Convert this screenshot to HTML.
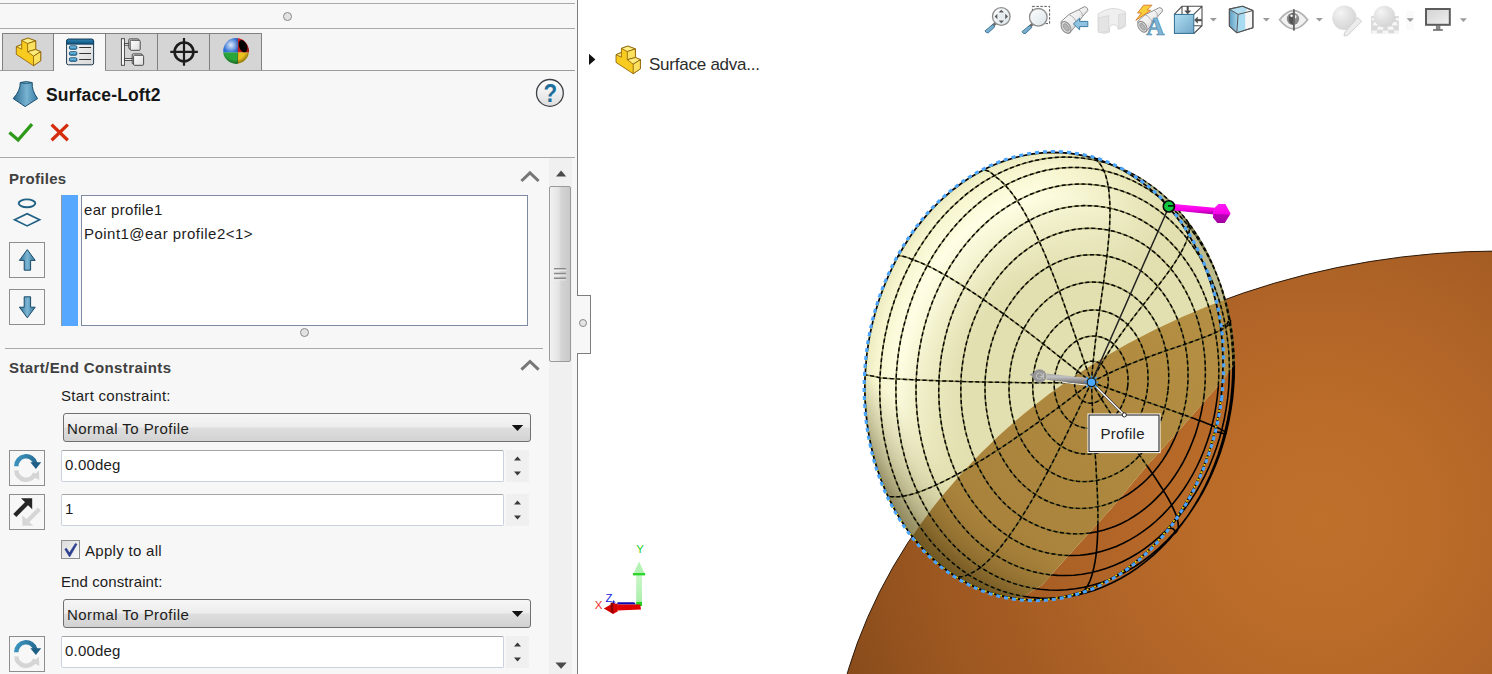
<!DOCTYPE html>
<html><head><meta charset="utf-8"><title>Surface-Loft2</title>
<style>
html,body{margin:0;padding:0}
body{width:1492px;height:674px;overflow:hidden;background:#fff;position:relative;font-family:"Liberation Sans",sans-serif;color:#1e1e1e}
.abs{position:absolute}
.hl{position:absolute;height:1px;background:#a9a9a9}
.t{position:absolute;white-space:nowrap;line-height:20px;height:20px;font-size:15px;color:#1c1c1c}
.b{font-weight:bold}
.tab{position:absolute;top:33px;width:51px;height:36px;background:#d5d5d5;border-left:1px solid #808080;border-top:1px solid #808080}
.ibox{position:absolute;left:9px;width:34px;height:34px;border:1px solid #8e8e8e;background:#f7f7f7}
.fld{position:absolute;left:61px;width:441px;height:30px;background:#fff;border:1px solid #c9d1de;border-top-color:#a5a5a5;border-radius:2px}
.spin{position:absolute;left:506px;width:23px;height:32px;background:#f0f0f0}
.dd{position:absolute;left:63px;width:466px;height:27px;border:1px solid #707070;border-radius:3px;background:linear-gradient(#f6f6f6 0%,#ededed 48%,#dedede 52%,#d2d2d2 100%)}
svg{position:absolute;overflow:visible}
</style></head><body>
<svg id="model" width="914" height="674" viewBox="578 0 914 674" style="position:absolute;left:578px;top:0">
<defs>
<radialGradient id="sg" gradientUnits="userSpaceOnUse" cx="1320" cy="520" r="520"><stop offset="0" stop-color="#bf702b"/><stop offset="0.21" stop-color="#bb6c29"/><stop offset="0.43" stop-color="#b06427"/><stop offset="0.615" stop-color="#a55c23"/><stop offset="0.77" stop-color="#9b5620"/><stop offset="0.9" stop-color="#8e4f1d"/><stop offset="1" stop-color="#854819"/></radialGradient>
<radialGradient id="eg" gradientUnits="userSpaceOnUse" cx="0" cy="0" r="1" gradientTransform="translate(1043.9 376.1) rotate(6.8) scale(178.4 224.3)"><stop offset="0" stop-color="#fffee2" stop-opacity="0"/><stop offset="0.42" stop-color="#fffee2" stop-opacity="0"/><stop offset="0.8" stop-color="#fffee4" stop-opacity="1"/><stop offset="0.94" stop-color="#fffedc" stop-opacity="0.7"/><stop offset="1" stop-color="#fffedc" stop-opacity="0.35"/></radialGradient>
<linearGradient id="hlm" gradientUnits="userSpaceOnUse" x1="600.0" y1="708.2" x2="695.8" y2="788.6"><stop offset="0" stop-color="#fff"/><stop offset="0.5" stop-color="#888"/><stop offset="1" stop-color="#000"/></linearGradient>
<mask id="hlmask" maskUnits="userSpaceOnUse" x="800" y="100" width="500" height="560"><rect x="800" y="100" width="500" height="560" fill="url(#hlm)"/></mask>
<linearGradient id="tg" gradientUnits="userSpaceOnUse" x1="1200" y1="330" x2="930" y2="560"><stop offset="0" stop-color="#b48e42"/><stop offset="1" stop-color="#a6803a"/></linearGradient>
<radialGradient id="rs" gradientUnits="userSpaceOnUse" cx="0" cy="0" r="1" gradientTransform="translate(1043.9 376.1) rotate(6.8) scale(178.4 224.3)"><stop offset="0.7" stop-color="#3c2d0a" stop-opacity="0"/><stop offset="0.9" stop-color="#3c2d0a" stop-opacity="0.3"/><stop offset="1" stop-color="#3c2d0a" stop-opacity="0.5"/></radialGradient>
<linearGradient id="rsm" gradientUnits="userSpaceOnUse" x1="920" y1="524" x2="969.5" y2="474.5"><stop offset="0" stop-color="#fff"/><stop offset="1" stop-color="#000"/></linearGradient>
<mask id="rsmask" maskUnits="userSpaceOnUse" x="800" y="100" width="500" height="560"><rect x="800" y="100" width="500" height="560" fill="url(#rsm)"/></mask>
<clipPath id="earclip"><path d="M1176.5 392.3 1175.0 401.9 1172.9 411.4 1170.1 420.7 1166.6 429.7 1162.6 438.3 1158.0 446.5 1152.9 454.2 1147.3 461.4 1141.2 467.9 1134.7 473.8 1127.9 479.0 1120.8 483.5 1113.4 487.1 1105.8 490.0 1098.1 492.0 1090.3 493.2 1082.5 493.6 1074.7 493.1 1067.0 491.8 1059.5 489.6 1052.2 486.6 1045.2 482.8 1038.5 478.2 1032.2 472.9 1026.3 466.9 1020.9 460.3 1016.0 453.1 1011.6 445.3 1007.8 437.0 1004.6 428.3 1002.1 419.3 1000.2 409.9 999.0 400.4 998.4 390.7 998.6 381.0 999.4 371.2 1000.9 361.6 1003.0 352.0 1005.8 342.8 1009.2 333.8 1013.3 325.1 1017.9 316.9 1023.0 309.2 1028.6 302.1 1034.7 295.5 1041.2 289.7 1048.0 284.5 1055.1 280.0 1062.5 276.4 1070.1 273.5 1077.8 271.4 1085.6 270.2 1093.4 269.9 1101.2 270.4 1108.8 271.7 1116.4 273.9 1123.6 276.9 1130.7 280.7 1137.4 285.3 1143.7 290.6 1149.6 296.6 1155.0 303.2 1159.9 310.4 1164.3 318.2 1168.1 326.5 1171.3 335.2 1173.8 344.2 1175.7 353.5 1176.9 363.1 1177.5 372.8 1177.3 382.5ZM1179.8 392.7 1178.2 402.7 1176.0 412.6 1173.1 422.3 1169.5 431.7 1165.3 440.7 1160.5 449.2 1155.2 457.2 1149.3 464.7 1143.0 471.5 1136.3 477.6 1129.1 483.0 1121.7 487.6 1114.0 491.5 1106.1 494.5 1098.1 496.6 1090.0 497.8 1081.8 498.2 1073.7 497.7 1065.8 496.3 1057.9 494.0 1050.3 490.9 1043.0 487.0 1036.0 482.2 1029.5 476.7 1023.3 470.4 1017.7 463.5 1012.5 456.0 1008.0 447.9 1004.1 439.3 1000.7 430.2 998.1 420.8 996.1 411.1 994.9 401.1 994.3 391.0 994.4 380.9 995.3 370.7 996.8 360.7 999.1 350.7 1002.0 341.1 1005.6 331.7 1009.8 322.7 1014.5 314.2 1019.9 306.2 1025.7 298.7 1032.1 291.9 1038.8 285.8 1045.9 280.4 1053.3 275.7 1061.0 271.9 1068.9 268.9 1077.0 266.8 1085.1 265.5 1093.2 265.2 1101.3 265.7 1109.3 267.1 1117.1 269.3 1124.7 272.5 1132.0 276.4 1139.0 281.2 1145.6 286.7 1151.7 292.9 1157.4 299.9 1162.5 307.4 1167.1 315.5 1171.0 324.1 1174.3 333.2 1177.0 342.6 1178.9 352.3 1180.2 362.3 1180.8 372.3 1180.6 382.5ZM1183.0 393.0 1181.4 403.5 1179.1 413.8 1176.0 423.9 1172.3 433.6 1168.0 443.0 1163.0 451.8 1157.5 460.2 1151.4 467.9 1144.8 475.0 1137.8 481.4 1130.4 487.0 1122.6 491.8 1114.6 495.8 1106.4 498.9 1098.1 501.1 1089.6 502.4 1081.2 502.8 1072.7 502.3 1064.4 500.8 1056.3 498.5 1048.4 495.2 1040.8 491.1 1033.5 486.2 1026.7 480.4 1020.3 473.9 1014.4 466.7 1009.1 458.9 1004.4 450.5 1000.3 441.5 996.8 432.1 994.1 422.3 992.0 412.2 990.7 401.8 990.1 391.4 990.3 380.8 991.1 370.2 992.8 359.8 995.1 349.5 998.1 339.4 1001.8 329.7 1006.2 320.3 1011.2 311.4 1016.7 303.1 1022.8 295.3 1029.4 288.3 1036.4 281.9 1043.8 276.3 1051.5 271.4 1059.5 267.5 1067.8 264.4 1076.1 262.1 1084.6 260.8 1093.0 260.4 1101.4 261.0 1109.7 262.4 1117.9 264.8 1125.8 268.0 1133.4 272.2 1140.6 277.1 1147.5 282.8 1153.9 289.3 1159.7 296.5 1165.1 304.4 1169.8 312.8 1173.9 321.8 1177.3 331.2 1180.1 341.0 1182.1 351.1 1183.5 361.4 1184.1 371.9 1183.9 382.5ZM1186.2 393.4 1184.6 404.3 1182.1 415.0 1179.0 425.4 1175.1 435.6 1170.6 445.3 1165.4 454.5 1159.7 463.1 1153.4 471.2 1146.5 478.5 1139.2 485.2 1131.6 491.0 1123.5 496.0 1115.2 500.1 1106.7 503.4 1098.0 505.7 1089.2 507.0 1080.5 507.4 1071.7 506.9 1063.1 505.4 1054.6 502.9 1046.4 499.5 1038.5 495.3 1031.0 490.1 1023.9 484.2 1017.3 477.4 1011.2 469.9 1005.6 461.8 1000.7 453.0 996.5 443.7 992.9 434.0 990.0 423.8 987.9 413.3 986.5 402.6 985.9 391.7 986.1 380.7 987.0 369.7 988.7 358.9 991.1 348.2 994.2 337.7 998.1 327.6 1002.6 317.9 1007.8 308.7 1013.5 300.0 1019.9 292.0 1026.7 284.6 1034.0 278.0 1041.7 272.1 1049.7 267.1 1058.0 263.0 1066.5 259.8 1075.2 257.5 1084.0 256.1 1092.8 255.7 1101.5 256.3 1110.1 257.8 1118.6 260.2 1126.8 263.6 1134.7 267.9 1142.2 273.0 1149.3 279.0 1156.0 285.7 1162.1 293.2 1167.6 301.4 1172.5 310.1 1176.8 319.4 1180.3 329.2 1183.2 339.4 1185.3 349.8 1186.7 360.6 1187.3 371.5 1187.2 382.4ZM1189.4 393.8 1187.7 405.1 1185.2 416.2 1181.9 427.0 1177.9 437.5 1173.2 447.5 1167.9 457.1 1161.9 466.1 1155.3 474.4 1148.2 482.1 1140.7 488.9 1132.7 495.0 1124.4 500.2 1115.8 504.5 1106.9 507.8 1097.9 510.2 1088.8 511.6 1079.7 512.0 1070.7 511.4 1061.7 509.9 1053.0 507.3 1044.4 503.8 1036.3 499.4 1028.4 494.1 1021.1 487.9 1014.2 480.9 1007.9 473.1 1002.1 464.7 997.0 455.6 992.6 446.0 988.9 435.8 985.9 425.3 983.7 414.4 982.3 403.3 981.7 392.0 981.8 380.6 982.8 369.2 984.5 358.0 987.0 346.9 990.3 336.0 994.3 325.5 999.0 315.5 1004.4 305.9 1010.3 296.9 1016.9 288.6 1024.0 280.9 1031.5 274.1 1039.5 268.0 1047.8 262.8 1056.4 258.6 1065.3 255.2 1074.3 252.8 1083.4 251.4 1092.5 251.0 1101.6 251.6 1110.5 253.1 1119.3 255.7 1127.8 259.2 1136.0 263.6 1143.8 268.9 1151.1 275.1 1158.0 282.1 1164.4 289.9 1170.1 298.3 1175.2 307.4 1179.6 317.0 1183.3 327.2 1186.3 337.7 1188.5 348.6 1189.9 359.7 1190.5 371.0 1190.4 382.4ZM1192.6 394.2 1190.8 405.8 1188.2 417.3 1184.8 428.6 1180.6 439.4 1175.8 449.8 1170.2 459.7 1164.0 469.0 1157.2 477.7 1149.9 485.6 1142.1 492.7 1133.8 499.0 1125.2 504.3 1116.3 508.8 1107.1 512.2 1097.8 514.7 1088.4 516.2 1078.9 516.6 1069.6 516.0 1060.3 514.4 1051.2 511.8 1042.4 508.1 1033.9 503.5 1025.8 498.0 1018.2 491.6 1011.1 484.4 1004.5 476.3 998.6 467.6 993.3 458.2 988.7 448.2 984.9 437.7 981.8 426.8 979.5 415.5 978.1 404.0 977.4 392.3 977.6 380.5 978.5 368.7 980.3 357.0 982.9 345.5 986.3 334.3 990.5 323.5 995.3 313.0 1000.9 303.1 1007.1 293.8 1013.9 285.2 1021.2 277.3 1029.0 270.2 1037.3 263.9 1045.9 258.5 1054.8 254.1 1064.0 250.6 1073.3 248.2 1082.7 246.7 1092.2 246.3 1101.6 246.9 1110.8 248.5 1119.9 251.1 1128.7 254.7 1137.2 259.3 1145.3 264.8 1152.9 271.3 1160.0 278.5 1166.6 286.5 1172.5 295.3 1177.8 304.7 1182.4 314.7 1186.2 325.2 1189.3 336.1 1191.6 347.4 1193.1 358.9 1193.7 370.6 1193.6 382.4ZM1195.7 394.5 1193.8 406.6 1191.1 418.5 1187.6 430.1 1183.3 441.3 1178.3 452.1 1172.6 462.4 1166.2 472.0 1159.1 480.9 1151.5 489.1 1143.4 496.5 1134.9 502.9 1126.0 508.5 1116.8 513.1 1107.3 516.7 1097.6 519.2 1087.9 520.7 1078.1 521.2 1068.4 520.6 1058.8 518.9 1049.4 516.2 1040.3 512.4 1031.6 507.7 1023.2 502.0 1015.3 495.3 1007.9 487.9 1001.1 479.5 995.0 470.5 989.5 460.8 984.8 450.4 980.8 439.6 977.6 428.3 975.3 416.6 973.8 404.7 973.1 392.6 973.2 380.4 974.3 368.2 976.1 356.1 978.8 344.2 982.3 332.6 986.6 321.4 991.6 310.6 997.4 300.4 1003.8 290.7 1010.8 281.8 1018.4 273.6 1026.5 266.3 1035.0 259.8 1043.9 254.2 1053.2 249.6 1062.7 246.0 1072.3 243.5 1082.0 242.0 1091.8 241.5 1101.5 242.1 1111.1 243.8 1120.5 246.5 1129.6 250.3 1138.4 255.0 1146.7 260.8 1154.6 267.4 1162.0 274.9 1168.8 283.2 1174.9 292.2 1180.4 302.0 1185.1 312.3 1189.1 323.1 1192.3 334.5 1194.7 346.1 1196.2 358.0 1196.9 370.1 1196.7 382.3ZM1198.7 394.9 1196.8 407.4 1194.0 419.6 1190.4 431.6 1186.0 443.3 1180.8 454.4 1174.8 465.0 1168.2 474.9 1161.0 484.2 1153.1 492.6 1144.8 500.2 1135.9 506.9 1126.7 512.7 1117.2 517.4 1107.4 521.1 1097.4 523.7 1087.4 525.3 1077.3 525.8 1067.2 525.1 1057.3 523.4 1047.6 520.6 1038.2 516.7 1029.1 511.8 1020.5 505.9 1012.3 499.1 1004.7 491.3 997.7 482.7 991.4 473.4 985.7 463.3 980.8 452.7 976.7 441.4 973.4 429.8 971.0 417.7 969.4 405.4 968.7 392.9 968.9 380.3 969.9 367.7 971.9 355.2 974.7 342.9 978.3 330.9 982.7 319.3 987.9 308.2 993.8 297.6 1000.4 287.6 1007.7 278.4 1015.5 269.9 1023.9 262.3 1032.7 255.6 1041.9 249.9 1051.5 245.2 1061.3 241.5 1071.2 238.8 1081.3 237.3 1091.4 236.8 1101.4 237.4 1111.3 239.2 1121.0 242.0 1130.5 245.8 1139.5 250.8 1148.2 256.6 1156.3 263.5 1164.0 271.2 1171.0 279.8 1177.3 289.2 1183.0 299.2 1187.8 309.9 1191.9 321.1 1195.2 332.8 1197.7 344.9 1199.3 357.2 1200.0 369.7 1199.8 382.3ZM1201.7 395.2 1199.7 408.1 1196.9 420.8 1193.1 433.2 1188.6 445.2 1183.2 456.7 1177.1 467.6 1170.3 477.9 1162.8 487.4 1154.7 496.1 1146.0 504.0 1136.9 510.9 1127.4 516.8 1117.6 521.7 1107.4 525.5 1097.2 528.3 1086.8 529.9 1076.4 530.3 1066.0 529.7 1055.8 527.9 1045.8 525.0 1036.0 521.0 1026.7 515.9 1017.7 509.8 1009.3 502.8 1001.5 494.8 994.2 485.9 987.7 476.3 981.8 465.9 976.8 454.9 972.6 443.3 969.2 431.2 966.7 418.8 965.0 406.1 964.3 393.2 964.5 380.2 965.6 367.2 967.6 354.3 970.4 341.6 974.2 329.2 978.7 317.2 984.1 305.7 990.2 294.8 997.1 284.5 1004.5 275.0 1012.6 266.3 1021.3 258.4 1030.4 251.5 1039.9 245.6 1049.7 240.7 1059.9 236.9 1070.1 234.1 1080.5 232.5 1090.9 232.0 1101.3 232.7 1111.5 234.5 1121.5 237.4 1131.3 241.4 1140.6 246.5 1149.6 252.5 1158.0 259.6 1165.8 267.6 1173.1 276.5 1179.6 286.1 1185.5 296.5 1190.5 307.5 1194.7 319.1 1198.1 331.2 1200.6 343.6 1202.3 356.3 1203.0 369.2 1202.8 382.2ZM1204.7 395.6 1202.6 408.9 1199.7 421.9 1195.8 434.7 1191.1 447.1 1185.6 458.9 1179.3 470.2 1172.2 480.8 1164.5 490.6 1156.1 499.6 1147.2 507.7 1137.8 514.8 1128.0 521.0 1117.9 526.0 1107.5 529.9 1096.8 532.8 1086.1 534.4 1075.4 534.9 1064.7 534.2 1054.2 532.4 1043.8 529.4 1033.8 525.3 1024.2 520.0 1015.0 513.8 1006.3 506.5 998.2 498.2 990.7 489.1 983.9 479.1 977.9 468.4 972.7 457.1 968.4 445.1 964.9 432.7 962.3 419.9 960.6 406.8 959.8 393.4 960.0 380.0 961.1 366.6 963.2 353.3 966.2 340.3 970.0 327.5 974.7 315.1 980.2 303.3 986.6 292.0 993.6 281.4 1001.3 271.6 1009.7 262.6 1018.6 254.5 1028.0 247.4 1037.8 241.2 1048.0 236.2 1058.4 232.2 1069.0 229.4 1079.7 227.8 1090.4 227.3 1101.1 228.0 1111.7 229.8 1122.0 232.8 1132.0 236.9 1141.7 242.1 1150.9 248.4 1159.6 255.7 1167.7 264.0 1175.1 273.1 1181.9 283.0 1187.9 293.8 1193.1 305.1 1197.5 317.1 1201.0 329.5 1203.6 342.3 1205.2 355.4 1206.0 368.8 1205.8 382.2ZM1207.6 395.9 1205.5 409.6 1202.4 423.1 1198.5 436.2 1193.6 449.0 1187.9 461.2 1181.4 472.8 1174.1 483.7 1166.2 493.8 1157.6 503.1 1148.4 511.4 1138.7 518.8 1128.6 525.1 1118.1 530.3 1107.4 534.4 1096.5 537.3 1085.4 539.0 1074.4 539.5 1063.4 538.8 1052.5 536.9 1041.9 533.8 1031.5 529.5 1021.6 524.2 1012.1 517.7 1003.2 510.2 994.8 501.7 987.1 492.3 980.1 482.0 974.0 471.0 968.6 459.3 964.1 447.0 960.5 434.2 957.8 420.9 956.1 407.4 955.3 393.7 955.5 379.9 956.7 366.1 958.8 352.4 961.8 338.9 965.8 325.8 970.6 313.0 976.3 300.8 982.9 289.2 990.1 278.3 998.1 268.2 1006.7 258.9 1015.9 250.5 1025.5 243.2 1035.6 236.9 1046.1 231.7 1056.8 227.6 1067.8 224.7 1078.8 223.0 1089.9 222.5 1100.9 223.2 1111.7 225.1 1122.4 228.2 1132.7 232.5 1142.7 237.8 1152.1 244.3 1161.1 251.8 1169.5 260.3 1177.1 269.7 1184.1 280.0 1190.3 291.0 1195.7 302.7 1200.2 315.0 1203.8 327.8 1206.4 341.0 1208.2 354.6 1208.9 368.3 1208.7 382.1ZM1210.4 396.2 1208.2 410.3 1205.1 424.2 1201.0 437.7 1196.0 450.9 1190.2 463.4 1183.5 475.4 1176.0 486.6 1167.8 497.0 1158.9 506.6 1149.5 515.2 1139.5 522.7 1129.1 529.2 1118.4 534.6 1107.3 538.8 1096.0 541.7 1084.7 543.5 1073.3 544.0 1062.0 543.3 1050.8 541.3 1039.8 538.2 1029.2 533.8 1019.0 528.3 1009.2 521.6 1000.0 513.9 991.4 505.1 983.5 495.4 976.3 484.9 969.9 473.5 964.4 461.5 959.8 448.8 956.1 435.6 953.3 422.0 951.5 408.1 950.7 394.0 950.9 379.8 952.1 365.5 954.3 351.4 957.4 337.6 961.5 324.0 966.5 310.9 972.4 298.3 979.1 286.4 986.6 275.2 994.7 264.7 1003.6 255.2 1013.0 246.6 1023.0 239.0 1033.4 232.6 1044.2 227.2 1055.2 223.0 1066.5 220.0 1077.9 218.3 1089.3 217.8 1100.6 218.5 1111.8 220.4 1122.7 223.6 1133.3 228.0 1143.6 233.5 1153.4 240.2 1162.6 247.9 1171.2 256.6 1179.1 266.3 1186.2 276.9 1192.6 288.2 1198.1 300.3 1202.8 313.0 1206.5 326.2 1209.2 339.8 1211.0 353.7 1211.8 367.8 1211.6 382.0ZM1213.2 396.6 1211.0 411.1 1207.7 425.3 1203.5 439.3 1198.4 452.7 1192.4 465.7 1185.5 478.0 1177.8 489.5 1169.3 500.2 1160.2 510.1 1150.5 518.9 1140.3 526.7 1129.6 533.3 1118.5 538.8 1107.1 543.1 1095.5 546.2 1083.9 548.0 1072.1 548.6 1060.5 547.8 1049.0 545.8 1037.7 542.5 1026.8 538.0 1016.3 532.3 1006.2 525.5 996.7 517.5 987.9 508.6 979.7 498.6 972.4 487.7 965.8 476.1 960.1 463.7 955.4 450.6 951.6 437.1 948.7 423.1 946.9 408.8 946.1 394.2 946.3 379.6 947.5 365.0 949.7 350.5 953.0 336.2 957.2 322.3 962.3 308.8 968.3 295.9 975.2 283.6 982.9 272.0 991.4 261.3 1000.5 251.5 1010.2 242.6 1020.4 234.9 1031.1 228.2 1042.2 222.7 1053.6 218.4 1065.2 215.3 1076.8 213.5 1088.6 213.0 1100.2 213.7 1111.7 215.7 1123.0 219.0 1133.9 223.5 1144.4 229.2 1154.5 236.0 1164.0 244.0 1172.8 253.0 1181.0 262.9 1188.3 273.8 1194.9 285.5 1200.6 297.9 1205.3 310.9 1209.1 324.5 1212.0 338.5 1213.8 352.8 1214.6 367.3 1214.4 381.9ZM1215.9 396.9 1213.6 411.8 1210.3 426.4 1205.9 440.8 1200.7 454.6 1194.5 467.9 1187.4 480.5 1179.5 492.4 1170.8 503.4 1161.5 513.5 1151.5 522.6 1140.9 530.6 1129.9 537.4 1118.5 543.1 1106.9 547.5 1095.0 550.7 1083.0 552.5 1070.9 553.1 1058.9 552.3 1047.1 550.3 1035.5 546.9 1024.3 542.3 1013.5 536.4 1003.1 529.4 993.4 521.2 984.3 512.0 976.0 501.7 968.4 490.6 961.6 478.6 955.8 465.8 950.9 452.4 947.0 438.5 944.1 424.1 942.2 409.4 941.3 394.5 941.6 379.4 942.8 364.4 945.1 349.5 948.4 334.8 952.8 320.5 958.0 306.7 964.2 293.4 971.3 280.7 979.2 268.9 987.9 257.8 997.2 247.8 1007.2 238.7 1017.8 230.7 1028.8 223.8 1040.1 218.2 1051.8 213.7 1063.7 210.6 1075.7 208.7 1087.8 208.2 1099.8 208.9 1111.6 211.0 1123.2 214.4 1134.4 219.0 1145.2 224.8 1155.5 231.9 1165.3 240.1 1174.4 249.3 1182.7 259.5 1190.3 270.7 1197.1 282.7 1202.9 295.5 1207.8 308.8 1211.7 322.8 1214.6 337.2 1216.5 351.9 1217.3 366.8 1217.1 381.8ZM1218.5 397.2 1216.1 412.5 1212.7 427.5 1208.3 442.2 1202.9 456.5 1196.5 470.1 1189.2 483.1 1181.1 495.3 1172.2 506.6 1162.6 517.0 1152.3 526.3 1141.5 534.5 1130.2 541.5 1118.5 547.4 1106.5 551.9 1094.3 555.1 1082.0 557.0 1069.6 557.6 1057.3 556.8 1045.2 554.7 1033.3 551.3 1021.7 546.5 1010.6 540.5 1000.0 533.3 990.0 524.9 980.7 515.4 972.1 504.9 964.3 493.4 957.4 481.1 951.4 468.0 946.3 454.2 942.3 439.9 939.3 425.1 937.4 410.0 936.5 394.7 936.7 379.3 938.0 363.8 940.4 348.5 943.8 333.5 948.2 318.8 953.7 304.5 960.0 290.9 967.3 277.9 975.4 265.7 984.3 254.4 993.9 244.0 1004.2 234.7 1015.0 226.5 1026.3 219.5 1038.0 213.6 1050.0 209.1 1062.2 205.9 1074.6 203.9 1086.9 203.4 1099.2 204.2 1111.4 206.3 1123.3 209.7 1134.8 214.5 1145.9 220.5 1156.5 227.7 1166.5 236.1 1175.9 245.6 1184.4 256.1 1192.2 267.6 1199.1 279.9 1205.1 293.0 1210.2 306.8 1214.2 321.1 1217.2 335.8 1219.1 351.0 1220.0 366.3 1219.8 381.7ZM1221.0 397.4 1218.6 413.2 1215.1 428.6 1210.5 443.7 1204.9 458.3 1198.4 472.3 1190.9 485.6 1182.6 498.2 1173.5 509.8 1163.6 520.4 1153.1 530.0 1142.0 538.4 1130.4 545.6 1118.4 551.6 1106.1 556.3 1093.5 559.6 1080.9 561.5 1068.2 562.1 1055.6 561.3 1043.1 559.1 1030.9 555.6 1019.0 550.7 1007.6 544.6 996.7 537.1 986.5 528.5 976.9 518.8 968.1 508.0 960.1 496.2 953.0 483.6 946.8 470.1 941.7 456.0 937.5 441.3 934.5 426.2 932.5 410.7 931.6 394.9 931.8 379.1 933.2 363.2 935.6 347.5 939.1 332.1 943.6 317.0 949.2 302.4 955.7 288.4 963.2 275.0 971.5 262.5 980.7 250.9 990.5 240.3 1001.0 230.7 1012.1 222.3 1023.7 215.1 1035.7 209.1 1048.1 204.4 1060.6 201.1 1073.3 199.1 1086.0 198.6 1098.6 199.4 1111.0 201.5 1123.2 205.1 1135.1 210.0 1146.5 216.1 1157.4 223.6 1167.7 232.2 1177.2 241.9 1186.1 252.7 1194.0 264.5 1201.1 277.1 1207.3 290.6 1212.5 304.7 1216.6 319.4 1219.7 334.5 1221.6 350.0 1222.5 365.8 1222.3 381.6ZM1223.4 397.7 1220.9 413.8 1217.3 429.7 1212.6 445.2 1206.9 460.1 1200.2 474.5 1192.5 488.2 1184.0 501.0 1174.6 512.9 1164.5 523.8 1153.7 533.6 1142.3 542.3 1130.4 549.7 1118.1 555.8 1105.5 560.6 1092.6 564.0 1079.7 566.0 1066.6 566.6 1053.7 565.8 1040.9 563.6 1028.4 559.9 1016.2 554.9 1004.5 548.6 993.4 541.0 982.8 532.2 973.0 522.2 964.0 511.1 955.8 499.0 948.5 486.1 942.2 472.3 936.9 457.8 932.7 442.7 929.5 427.2 927.5 411.3 926.6 395.1 926.8 378.9 928.2 362.6 930.6 346.5 934.2 330.7 938.9 315.2 944.6 300.2 951.3 285.8 959.0 272.2 967.5 259.3 976.9 247.4 987.0 236.5 997.8 226.7 1009.2 218.1 1021.1 210.7 1033.4 204.5 1046.0 199.8 1058.9 196.3 1071.9 194.3 1084.9 193.7 1097.8 194.6 1110.6 196.8 1123.1 200.4 1135.3 205.4 1147.0 211.8 1158.1 219.4 1168.7 228.2 1178.5 238.2 1187.5 249.3 1195.7 261.3 1203.0 274.3 1209.3 288.1 1214.6 302.6 1218.9 317.6 1222.0 333.2 1224.0 349.1 1224.9 365.2 1224.7 381.5ZM1225.6 398.0 1223.0 414.5 1219.4 430.7 1214.6 446.6 1208.7 462.0 1201.9 476.7 1194.0 490.7 1185.3 503.8 1175.7 516.1 1165.3 527.2 1154.2 537.3 1142.5 546.2 1130.4 553.7 1117.7 560.0 1104.8 564.9 1091.6 568.4 1078.3 570.5 1065.0 571.1 1051.7 570.2 1038.6 568.0 1025.8 564.2 1013.3 559.1 1001.3 552.6 989.9 544.8 979.1 535.8 969.0 525.5 959.7 514.2 951.3 501.8 943.9 488.5 937.4 474.4 932.0 459.5 927.6 444.1 924.4 428.2 922.3 411.9 921.4 395.3 921.6 378.7 923.0 362.0 925.6 345.5 929.2 329.2 934.0 313.4 939.9 298.0 946.7 283.3 954.6 269.3 963.3 256.1 972.9 243.9 983.3 232.7 994.4 222.7 1006.1 213.8 1018.2 206.2 1030.9 200.0 1043.8 195.1 1057.0 191.6 1070.3 189.5 1083.6 188.9 1096.9 189.7 1110.0 192.0 1122.8 195.7 1135.3 200.9 1147.3 207.4 1158.7 215.2 1169.5 224.2 1179.6 234.5 1188.9 245.8 1197.3 258.2 1204.7 271.5 1211.2 285.6 1216.6 300.4 1221.0 315.9 1224.2 331.8 1226.3 348.1 1227.2 364.7 1227.0 381.3ZM1227.7 398.2 1225.0 415.1 1221.3 431.8 1216.4 448.0 1210.4 463.7 1203.3 478.8 1195.3 493.2 1186.3 506.7 1176.5 519.2 1165.9 530.6 1154.5 540.9 1142.6 550.0 1130.1 557.8 1117.2 564.2 1103.9 569.2 1090.4 572.8 1076.8 574.9 1063.1 575.5 1049.5 574.7 1036.1 572.3 1022.9 568.5 1010.2 563.3 997.9 556.6 986.2 548.6 975.1 539.4 964.8 528.9 955.3 517.2 946.7 504.6 939.1 491.0 932.4 476.5 926.9 461.3 922.4 445.5 919.1 429.1 917.0 412.4 916.0 395.5 916.3 378.4 917.7 361.4 920.3 344.4 924.1 327.8 929.0 311.5 935.0 295.8 942.0 280.7 950.0 266.4 959.0 252.9 968.8 240.4 979.5 228.9 990.8 218.6 1002.8 209.6 1015.3 201.8 1028.2 195.4 1041.4 190.3 1054.9 186.8 1068.6 184.6 1082.2 184.0 1095.8 184.9 1109.3 187.2 1122.4 191.0 1135.2 196.3 1147.5 202.9 1159.2 210.9 1170.2 220.2 1180.5 230.7 1190.0 242.3 1198.6 255.0 1206.3 268.6 1212.9 283.1 1218.5 298.3 1222.9 314.1 1226.2 330.4 1228.4 347.1 1229.3 364.1 1229.1 381.1ZM1229.5 398.4 1226.8 415.7 1223.0 432.8 1218.0 449.4 1211.8 465.5 1204.6 481.0 1196.4 495.6 1187.2 509.4 1177.1 522.3 1166.3 534.0 1154.6 544.5 1142.4 553.8 1129.6 561.8 1116.4 568.4 1102.8 573.5 1089.0 577.2 1075.0 579.3 1061.0 580.0 1047.1 579.1 1033.4 576.7 1019.9 572.8 1006.8 567.4 994.3 560.6 982.3 552.4 970.9 542.9 960.4 532.2 950.7 520.3 941.9 507.3 934.0 493.4 927.2 478.5 921.6 463.0 917.0 446.8 913.6 430.1 911.4 413.0 910.4 395.6 910.7 378.2 912.2 360.7 914.8 343.4 918.7 326.3 923.7 309.7 929.8 293.6 937.0 278.1 945.3 263.4 954.5 249.6 964.5 236.8 975.4 225.1 987.0 214.6 999.3 205.3 1012.0 197.3 1025.3 190.7 1038.9 185.6 1052.7 181.9 1066.6 179.8 1080.6 179.1 1094.6 180.0 1108.3 182.4 1121.7 186.3 1134.8 191.7 1147.4 198.5 1159.4 206.7 1170.7 216.2 1181.3 226.9 1191.0 238.8 1199.8 251.8 1207.6 265.7 1214.4 280.5 1220.1 296.1 1224.7 312.3 1228.0 329.0 1230.2 346.1 1231.2 363.5 1231.0 380.9ZM1231.1 398.6 1228.3 416.3 1224.4 433.7 1219.2 450.8 1213.0 467.2 1205.6 483.0 1197.2 498.1 1187.8 512.2 1177.5 525.3 1166.3 537.3 1154.5 548.1 1141.9 557.6 1128.9 565.7 1115.3 572.5 1101.4 577.7 1087.3 581.5 1073.0 583.7 1058.7 584.4 1044.4 583.4 1030.4 581.0 1016.6 577.0 1003.2 571.5 990.4 564.5 978.1 556.2 966.5 546.4 955.7 535.5 945.7 523.3 936.7 510.0 928.7 495.7 921.8 480.6 915.9 464.6 911.3 448.1 907.8 431.0 905.6 413.5 904.6 395.7 904.8 377.8 906.3 360.0 909.1 342.3 913.0 324.8 918.1 307.8 924.4 291.3 931.8 275.5 940.2 260.5 949.6 246.4 959.9 233.2 971.1 221.3 982.9 210.5 995.4 200.9 1008.5 192.8 1022.1 186.1 1036.0 180.8 1050.1 177.1 1064.4 174.8 1078.7 174.2 1093.0 175.1 1107.0 177.6 1120.8 181.5 1134.2 187.0 1147.0 194.0 1159.3 202.4 1170.9 212.1 1181.7 223.1 1191.6 235.3 1200.7 248.5 1208.7 262.8 1215.6 278.0 1221.4 293.9 1226.1 310.5 1229.6 327.6 1231.8 345.1 1232.8 362.8 1232.5 380.7ZM1232.2 398.7 1229.4 416.8 1225.4 434.6 1220.1 452.1 1213.7 468.9 1206.1 485.1 1197.5 500.4 1187.9 514.9 1177.4 528.3 1166.0 540.6 1153.9 551.6 1141.1 561.3 1127.7 569.7 1113.8 576.5 1099.6 581.9 1085.1 585.8 1070.5 588.0 1055.9 588.7 1041.3 587.8 1026.9 585.2 1012.9 581.2 999.2 575.5 986.0 568.4 973.5 559.9 961.6 549.9 950.6 538.7 940.4 526.2 931.2 512.6 923.0 498.1 915.9 482.6 909.9 466.3 905.2 449.3 901.6 431.8 899.3 413.9 898.3 395.8 898.6 377.5 900.1 359.2 902.9 341.1 906.9 323.2 912.2 305.8 918.6 289.0 926.1 272.8 934.8 257.4 944.4 243.0 954.9 229.6 966.3 217.3 978.4 206.3 991.2 196.6 1004.6 188.2 1018.5 181.3 1032.7 176.0 1047.1 172.1 1061.8 169.9 1076.4 169.2 1091.0 170.1 1105.3 172.6 1119.4 176.7 1133.1 182.3 1146.3 189.5 1158.8 198.0 1170.7 208.0 1181.7 219.2 1191.9 231.7 1201.1 245.2 1209.3 259.8 1216.4 275.3 1222.4 291.6 1227.1 308.6 1230.7 326.1 1233.0 344.0 1234.0 362.1 1233.7 380.4ZM1232.7 398.7 1229.8 417.2 1225.7 435.5 1220.3 453.3 1213.8 470.5 1206.1 487.0 1197.2 502.7 1187.4 517.5 1176.7 531.2 1165.0 543.7 1152.6 555.0 1139.5 565.0 1125.8 573.5 1111.7 580.5 1097.1 586.0 1082.4 589.9 1067.4 592.3 1052.5 592.9 1037.6 592.0 1022.9 589.4 1008.5 585.2 994.5 579.5 981.0 572.2 968.2 563.5 956.1 553.3 944.8 541.8 934.4 529.1 925.0 515.2 916.6 500.3 909.3 484.4 903.3 467.8 898.4 450.5 894.8 432.6 892.4 414.3 891.4 395.7 891.6 377.0 893.2 358.4 896.1 339.8 900.2 321.6 905.6 303.8 912.1 286.6 919.8 270.0 928.6 254.3 938.5 239.6 949.2 225.9 960.9 213.3 973.3 202.0 986.4 192.1 1000.0 183.6 1014.2 176.5 1028.7 171.0 1043.5 167.1 1058.5 164.8 1073.4 164.1 1088.3 165.1 1103.0 167.6 1117.4 171.8 1131.4 177.6 1144.8 184.8 1157.7 193.6 1169.8 203.8 1181.1 215.2 1191.5 228.0 1200.9 241.9 1209.3 256.8 1216.5 272.6 1222.6 289.3 1227.5 306.6 1231.1 324.5 1233.5 342.8 1234.5 361.3 1234.2 380.0ZM1231.9 398.6 1228.9 417.5 1224.7 436.1 1219.2 454.3 1212.5 471.9 1204.7 488.8 1195.7 504.9 1185.6 519.9 1174.6 533.9 1162.7 546.7 1150.0 558.3 1136.7 568.4 1122.7 577.1 1108.2 584.3 1093.4 589.9 1078.3 594.0 1063.0 596.3 1047.7 597.0 1032.5 596.1 1017.5 593.4 1002.8 589.2 988.5 583.3 974.7 575.8 961.6 566.9 949.3 556.5 937.7 544.8 927.1 531.8 917.5 517.6 908.9 502.4 901.5 486.2 895.3 469.2 890.3 451.4 886.6 433.2 884.2 414.5 883.1 395.5 883.4 376.4 885.0 357.3 887.9 338.4 892.1 319.8 897.6 301.6 904.3 284.0 912.2 267.1 921.2 251.1 931.2 236.0 942.2 222.0 954.1 209.2 966.8 197.6 980.2 187.5 994.2 178.8 1008.6 171.6 1023.5 166.0 1038.6 161.9 1053.8 159.6 1069.1 158.9 1084.4 159.9 1099.4 162.5 1114.1 166.7 1128.4 172.6 1142.1 180.1 1155.2 189.0 1167.6 199.4 1179.1 211.1 1189.8 224.1 1199.4 238.3 1207.9 253.5 1215.4 269.7 1221.6 286.8 1226.6 304.5 1230.3 322.7 1232.7 341.4 1233.7 360.4 1233.5 379.5ZM1221.1 397.1 1218.1 416.5 1213.8 435.5 1208.2 454.1 1201.3 472.1 1193.3 489.3 1184.1 505.7 1173.8 521.1 1162.6 535.4 1150.4 548.5 1137.5 560.2 1123.8 570.6 1109.6 579.5 1094.8 586.9 1079.6 592.6 1064.2 596.7 1048.6 599.1 1033.0 599.8 1017.5 598.8 1002.1 596.1 987.1 591.8 972.5 585.8 958.5 578.2 945.1 569.1 932.4 558.5 920.6 546.5 909.8 533.2 900.0 518.7 891.2 503.1 883.7 486.6 877.3 469.2 872.2 451.1 868.4 432.5 866.0 413.4 864.9 394.0 865.2 374.5 866.8 355.0 869.8 335.7 874.1 316.7 879.7 298.1 886.5 280.1 894.6 262.9 903.8 246.5 914.0 231.1 925.3 216.8 937.4 203.7 950.4 191.9 964.0 181.6 978.3 172.7 993.1 165.3 1008.2 159.6 1023.7 155.5 1039.3 153.1 1054.9 152.4 1070.4 153.3 1085.7 156.0 1100.8 160.4 1115.3 166.4 1129.4 174.0 1142.8 183.1 1155.4 193.7 1167.2 205.7 1178.1 219.0 1187.9 233.5 1196.6 249.0 1204.2 265.6 1210.6 282.9 1215.6 301.0 1219.4 319.7 1221.9 338.8 1223.0 358.1 1222.7 377.6Z"/></clipPath>
<clipPath id="sphclip"><ellipse cx="1500.5" cy="803.3" rx="672.1" ry="552.3"/></clipPath>
<clipPath id="hidclip"><path d="M1260.0 330.0 L1222.6 380.4 L1185.5 423.0 L1148.4 463.9 L1111.3 508.4 L1074.2 549.2 L1042.0 585.0 L1023.0 596.7 L1000.0 611.0 L960.0 636.0 L960 700 L1400 700 L1400 330Z"/></clipPath>
<clipPath id="visclip"><path d="M1260.0 330.0 L1222.6 380.4 L1185.5 423.0 L1148.4 463.9 L1111.3 508.4 L1074.2 549.2 L1042.0 585.0 L1023.0 596.7 L1000.0 611.0 L960.0 636.0 L960 700 L800 700 L800 100 L1400 100 L1400 330Z"/></clipPath>
</defs>
<ellipse cx="1500.5" cy="803.3" rx="672.1" ry="552.3" fill="url(#sg)" stroke="#2a1808" stroke-width="1"/>
<g clip-path="url(#earclip)"><g clip-path="url(#visclip)">
<rect x="800" y="100" width="500" height="560" fill="#bdbb8e"/>
<path d="M1221.1 397.1 1219.4 408.8 1217.3 420.3 1214.7 431.7 1211.7 443.0 1208.2 454.1 1204.2 464.9 1199.8 475.6 1195.0 485.9 1189.7 496.0 1184.1 505.7 1178.1 515.1 1171.7 524.0 1164.9 532.6 1157.8 540.8 1150.4 548.5 1142.8 555.7 1134.8 562.4 1126.6 568.7 1118.2 574.4 1109.6 579.5 1100.7 584.1 1091.8 588.1 1082.7 591.6 1073.5 594.4 1064.2 596.7 1054.9 598.3 1045.5 599.4 1036.1 599.8 1026.8 599.6 1017.5 598.8 1008.2 597.4 999.1 595.4 990.1 592.8 981.2 589.6 972.5 585.8 964.0 581.4 955.7 576.5 947.7 571.0 939.9 565.0 932.4 558.5 925.3 551.4 918.4 543.9 911.9 535.9 905.7 527.5 900.0 518.7 894.6 509.5 889.6 499.9 885.1 490.0 881.0 479.7 877.3 469.2 874.1 458.5 871.4 447.5 869.1 436.3 867.3 424.9 866.0 413.4 865.2 401.8 864.8 390.1 865.0 378.4 865.7 366.7 866.8 355.0 868.4 343.4 870.5 331.9 873.1 320.5 876.2 309.2 879.7 298.1 883.7 287.2 888.1 276.6 892.9 266.3 898.1 256.2 903.8 246.5 909.8 237.1 916.2 228.1 922.9 219.6 930.0 211.4 937.4 203.7 945.1 196.5 953.0 189.7 961.2 183.5 969.7 177.8 978.3 172.7 987.1 168.1 996.1 164.0 1005.2 160.6 1014.4 157.7 1023.7 155.5 1033.0 153.8 1042.4 152.8 1051.8 152.4 1061.1 152.6 1070.4 153.3 1079.6 154.8 1088.8 156.8 1097.8 159.4 1106.7 162.6 1115.3 166.4 1123.8 170.8 1132.1 175.7 1140.2 181.2 1147.9 187.2 1155.4 193.7 1162.6 200.7 1169.5 208.3 1176.0 216.2 1182.1 224.6 1187.9 233.5 1193.3 242.7 1198.2 252.3 1202.8 262.2 1206.9 272.4 1210.6 282.9 1213.8 293.7 1216.5 304.7 1218.8 315.9 1220.6 327.3 1221.9 338.8 1222.7 350.4 1223.0 362.0 1222.8 373.7 1222.2 385.5Z" fill="#e2e0b0"/>
<g mask="url(#hlmask)"><path d="M1221.1 397.1 1219.4 408.8 1217.3 420.3 1214.7 431.7 1211.7 443.0 1208.2 454.1 1204.2 464.9 1199.8 475.6 1195.0 485.9 1189.7 496.0 1184.1 505.7 1178.1 515.1 1171.7 524.0 1164.9 532.6 1157.8 540.8 1150.4 548.5 1142.8 555.7 1134.8 562.4 1126.6 568.7 1118.2 574.4 1109.6 579.5 1100.7 584.1 1091.8 588.1 1082.7 591.6 1073.5 594.4 1064.2 596.7 1054.9 598.3 1045.5 599.4 1036.1 599.8 1026.8 599.6 1017.5 598.8 1008.2 597.4 999.1 595.4 990.1 592.8 981.2 589.6 972.5 585.8 964.0 581.4 955.7 576.5 947.7 571.0 939.9 565.0 932.4 558.5 925.3 551.4 918.4 543.9 911.9 535.9 905.7 527.5 900.0 518.7 894.6 509.5 889.6 499.9 885.1 490.0 881.0 479.7 877.3 469.2 874.1 458.5 871.4 447.5 869.1 436.3 867.3 424.9 866.0 413.4 865.2 401.8 864.8 390.1 865.0 378.4 865.7 366.7 866.8 355.0 868.4 343.4 870.5 331.9 873.1 320.5 876.2 309.2 879.7 298.1 883.7 287.2 888.1 276.6 892.9 266.3 898.1 256.2 903.8 246.5 909.8 237.1 916.2 228.1 922.9 219.6 930.0 211.4 937.4 203.7 945.1 196.5 953.0 189.7 961.2 183.5 969.7 177.8 978.3 172.7 987.1 168.1 996.1 164.0 1005.2 160.6 1014.4 157.7 1023.7 155.5 1033.0 153.8 1042.4 152.8 1051.8 152.4 1061.1 152.6 1070.4 153.3 1079.6 154.8 1088.8 156.8 1097.8 159.4 1106.7 162.6 1115.3 166.4 1123.8 170.8 1132.1 175.7 1140.2 181.2 1147.9 187.2 1155.4 193.7 1162.6 200.7 1169.5 208.3 1176.0 216.2 1182.1 224.6 1187.9 233.5 1193.3 242.7 1198.2 252.3 1202.8 262.2 1206.9 272.4 1210.6 282.9 1213.8 293.7 1216.5 304.7 1218.8 315.9 1220.6 327.3 1221.9 338.8 1222.7 350.4 1223.0 362.0 1222.8 373.7 1222.2 385.5Z" fill="url(#eg)"/></g>
<g clip-path="url(#sphclip)"><rect x="800" y="100" width="500" height="560" fill="url(#tg)"/></g>
<g mask="url(#rsmask)"><path d="M1221.1 397.1 1219.4 408.8 1217.3 420.3 1214.7 431.7 1211.7 443.0 1208.2 454.1 1204.2 464.9 1199.8 475.6 1195.0 485.9 1189.7 496.0 1184.1 505.7 1178.1 515.1 1171.7 524.0 1164.9 532.6 1157.8 540.8 1150.4 548.5 1142.8 555.7 1134.8 562.4 1126.6 568.7 1118.2 574.4 1109.6 579.5 1100.7 584.1 1091.8 588.1 1082.7 591.6 1073.5 594.4 1064.2 596.7 1054.9 598.3 1045.5 599.4 1036.1 599.8 1026.8 599.6 1017.5 598.8 1008.2 597.4 999.1 595.4 990.1 592.8 981.2 589.6 972.5 585.8 964.0 581.4 955.7 576.5 947.7 571.0 939.9 565.0 932.4 558.5 925.3 551.4 918.4 543.9 911.9 535.9 905.7 527.5 900.0 518.7 894.6 509.5 889.6 499.9 885.1 490.0 881.0 479.7 877.3 469.2 874.1 458.5 871.4 447.5 869.1 436.3 867.3 424.9 866.0 413.4 865.2 401.8 864.8 390.1 865.0 378.4 865.7 366.7 866.8 355.0 868.4 343.4 870.5 331.9 873.1 320.5 876.2 309.2 879.7 298.1 883.7 287.2 888.1 276.6 892.9 266.3 898.1 256.2 903.8 246.5 909.8 237.1 916.2 228.1 922.9 219.6 930.0 211.4 937.4 203.7 945.1 196.5 953.0 189.7 961.2 183.5 969.7 177.8 978.3 172.7 987.1 168.1 996.1 164.0 1005.2 160.6 1014.4 157.7 1023.7 155.5 1033.0 153.8 1042.4 152.8 1051.8 152.4 1061.1 152.6 1070.4 153.3 1079.6 154.8 1088.8 156.8 1097.8 159.4 1106.7 162.6 1115.3 166.4 1123.8 170.8 1132.1 175.7 1140.2 181.2 1147.9 187.2 1155.4 193.7 1162.6 200.7 1169.5 208.3 1176.0 216.2 1182.1 224.6 1187.9 233.5 1193.3 242.7 1198.2 252.3 1202.8 262.2 1206.9 272.4 1210.6 282.9 1213.8 293.7 1216.5 304.7 1218.8 315.9 1220.6 327.3 1221.9 338.8 1222.7 350.4 1223.0 362.0 1222.8 373.7 1222.2 385.5Z" fill="url(#rs)"/></g>
</g></g>
<g clip-path="url(#visclip)" fill="none">
<path d="M1108.1 384.2 1107.9 385.3 1107.7 386.3 1107.5 387.4 1107.2 388.5 1106.9 389.5 1106.5 390.5 1106.1 391.5 1105.6 392.5 1105.2 393.5 1104.6 394.4 1104.1 395.3 1103.5 396.1 1102.8 396.9 1102.2 397.7 1101.5 398.4 1100.7 399.1 1100.0 399.7 1099.2 400.3 1098.4 400.8 1097.6 401.3 1096.8 401.7 1095.9 402.1 1095.1 402.4 1094.2 402.7 1093.4 402.9 1092.5 403.1 1091.6 403.2 1090.7 403.2 1089.8 403.2 1089.0 403.1 1088.1 403.0 1087.2 402.8 1086.4 402.6 1085.6 402.3 1084.7 401.9 1083.9 401.5 1083.2 401.0 1082.4 400.5 1081.7 400.0 1081.0 399.3 1080.3 398.7 1079.6 398.0 1079.0 397.2 1078.5 396.4 1077.9 395.6 1077.4 394.7 1076.9 393.8 1076.5 392.9 1076.1 391.9 1075.8 390.9 1075.5 389.9 1075.2 388.9 1075.0 387.8 1074.8 386.8 1074.7 385.7 1074.6 384.6 1074.6 383.5 1074.6 382.4 1074.7 381.3 1074.8 380.2 1075.0 379.1 1075.2 378.0 1075.4 377.0 1075.7 375.9 1076.0 374.9 1076.4 373.8 1076.8 372.8 1077.3 371.9 1077.7 370.9 1078.3 370.0 1078.8 369.1 1079.4 368.3 1080.1 367.5 1080.7 366.7 1081.4 366.0 1082.2 365.3 1082.9 364.7 1083.7 364.1 1084.5 363.6 1085.3 363.1 1086.1 362.6 1087.0 362.3 1087.8 361.9 1088.7 361.7 1089.5 361.5 1090.4 361.3 1091.3 361.2 1092.2 361.2 1093.1 361.2 1093.9 361.3 1094.8 361.4 1095.7 361.6 1096.5 361.8 1097.3 362.1 1098.2 362.5 1099.0 362.9 1099.7 363.4 1100.5 363.9 1101.2 364.4 1101.9 365.1 1102.6 365.7 1103.2 366.4 1103.9 367.2 1104.4 368.0 1105.0 368.8 1105.5 369.7 1106.0 370.6 1106.4 371.5 1106.8 372.4 1107.1 373.4 1107.4 374.5 1107.7 375.5 1107.9 376.5 1108.1 377.6 1108.2 378.7 1108.3 379.8 1108.3 380.9 1108.3 382.0 1108.2 383.1Z M1127.6 386.5 1127.3 388.9 1126.8 391.3 1126.3 393.6 1125.7 395.9 1125.0 398.2 1124.1 400.5 1123.2 402.6 1122.2 404.8 1121.2 406.8 1120.0 408.9 1118.8 410.8 1117.4 412.6 1116.1 414.4 1114.6 416.1 1113.1 417.7 1111.5 419.2 1109.9 420.5 1108.2 421.8 1106.4 423.0 1104.7 424.1 1102.8 425.0 1101.0 425.8 1099.1 426.5 1097.2 427.1 1095.3 427.6 1093.4 427.9 1091.5 428.2 1089.5 428.2 1087.6 428.2 1085.7 428.0 1083.8 427.7 1081.9 427.3 1080.0 426.8 1078.2 426.1 1076.4 425.4 1074.7 424.5 1073.0 423.4 1071.3 422.3 1069.7 421.1 1068.2 419.7 1066.7 418.3 1065.3 416.7 1063.9 415.1 1062.7 413.3 1061.5 411.5 1060.4 409.6 1059.3 407.7 1058.4 405.6 1057.6 403.5 1056.8 401.3 1056.1 399.1 1055.6 396.9 1055.1 394.5 1054.7 392.2 1054.5 389.8 1054.3 387.5 1054.2 385.0 1054.3 382.6 1054.4 380.2 1054.6 377.8 1055.0 375.4 1055.4 373.0 1055.9 370.7 1056.6 368.4 1057.3 366.1 1058.1 363.8 1059.0 361.7 1060.0 359.5 1061.1 357.5 1062.3 355.5 1063.5 353.5 1064.8 351.7 1066.2 349.9 1067.7 348.2 1069.2 346.6 1070.8 345.2 1072.4 343.8 1074.1 342.5 1075.8 341.3 1077.6 340.2 1079.4 339.3 1081.3 338.5 1083.1 337.8 1085.0 337.2 1087.0 336.7 1088.9 336.4 1090.8 336.2 1092.7 336.1 1094.7 336.1 1096.6 336.3 1098.5 336.6 1100.4 337.0 1102.2 337.5 1104.1 338.2 1105.8 339.0 1107.6 339.9 1109.3 340.9 1111.0 342.0 1112.6 343.2 1114.1 344.6 1115.6 346.0 1117.0 347.6 1118.3 349.2 1119.6 351.0 1120.8 352.8 1121.9 354.7 1122.9 356.6 1123.9 358.7 1124.7 360.8 1125.5 363.0 1126.1 365.2 1126.7 367.5 1127.1 369.8 1127.5 372.1 1127.8 374.5 1128.0 376.9 1128.0 379.3 1128.0 381.7 1127.9 384.1Z M1147.4 388.8 1146.9 392.6 1146.2 396.3 1145.4 400.0 1144.4 403.6 1143.2 407.2 1142.0 410.7 1140.5 414.1 1139.0 417.4 1137.3 420.7 1135.5 423.8 1133.5 426.8 1131.5 429.7 1129.3 432.5 1127.0 435.1 1124.7 437.6 1122.2 439.9 1119.6 442.1 1117.0 444.1 1114.3 445.9 1111.5 447.6 1108.7 449.0 1105.8 450.3 1102.8 451.4 1099.9 452.4 1096.9 453.1 1093.9 453.6 1090.9 454.0 1087.8 454.1 1084.8 454.0 1081.8 453.8 1078.9 453.3 1075.9 452.7 1073.0 451.8 1070.2 450.8 1067.4 449.6 1064.6 448.2 1062.0 446.6 1059.4 444.8 1056.9 442.9 1054.5 440.8 1052.1 438.5 1049.9 436.1 1047.8 433.5 1045.9 430.8 1044.0 428.0 1042.3 425.0 1040.7 421.9 1039.2 418.7 1037.9 415.4 1036.7 412.0 1035.7 408.6 1034.8 405.0 1034.1 401.4 1033.5 397.8 1033.1 394.1 1032.8 390.3 1032.7 386.6 1032.7 382.8 1033.0 379.0 1033.3 375.3 1033.9 371.5 1034.5 367.8 1035.4 364.1 1036.3 360.5 1037.5 356.9 1038.8 353.4 1040.2 350.0 1041.7 346.7 1043.4 343.5 1045.2 340.3 1047.2 337.3 1049.2 334.4 1051.4 331.6 1053.7 329.0 1056.1 326.5 1058.5 324.2 1061.1 322.0 1063.7 320.0 1066.4 318.2 1069.2 316.6 1072.1 315.1 1075.0 313.8 1077.9 312.7 1080.8 311.7 1083.8 311.0 1086.8 310.5 1089.9 310.2 1092.9 310.0 1095.9 310.1 1098.9 310.3 1101.9 310.8 1104.8 311.4 1107.7 312.3 1110.6 313.3 1113.4 314.5 1116.1 315.9 1118.8 317.5 1121.3 319.3 1123.8 321.2 1126.3 323.3 1128.6 325.6 1130.8 328.0 1132.9 330.6 1134.9 333.3 1136.7 336.1 1138.4 339.1 1140.0 342.2 1141.5 345.4 1142.8 348.7 1144.0 352.1 1145.0 355.5 1145.9 359.1 1146.7 362.7 1147.2 366.3 1147.7 370.0 1147.9 373.8 1148.0 377.5 1148.0 381.3 1147.8 385.1Z M1167.9 391.2 1167.1 396.4 1166.2 401.6 1165.0 406.7 1163.7 411.7 1162.1 416.6 1160.3 421.5 1158.4 426.2 1156.2 430.8 1153.9 435.3 1151.4 439.7 1148.7 443.8 1145.8 447.8 1142.8 451.7 1139.7 455.3 1136.4 458.7 1132.9 462.0 1129.4 465.0 1125.7 467.7 1122.0 470.3 1118.1 472.6 1114.2 474.6 1110.2 476.4 1106.1 478.0 1102.0 479.2 1097.9 480.2 1093.7 481.0 1089.6 481.4 1085.4 481.6 1081.2 481.6 1077.1 481.2 1072.9 480.6 1068.9 479.7 1064.8 478.5 1060.9 477.1 1057.0 475.4 1053.2 473.4 1049.5 471.2 1045.9 468.8 1042.5 466.1 1039.1 463.2 1035.9 460.1 1032.9 456.7 1030.0 453.2 1027.2 449.4 1024.7 445.5 1022.3 441.4 1020.0 437.1 1018.0 432.7 1016.2 428.1 1014.5 423.4 1013.1 418.6 1011.9 413.7 1010.9 408.7 1010.1 403.6 1009.5 398.5 1009.1 393.3 1009.0 388.1 1009.1 382.9 1009.4 377.7 1009.9 372.5 1010.6 367.3 1011.5 362.1 1012.7 357.0 1014.0 352.0 1015.6 347.1 1017.4 342.2 1019.3 337.5 1021.5 332.9 1023.8 328.4 1026.4 324.1 1029.0 319.9 1031.9 315.9 1034.9 312.0 1038.1 308.4 1041.4 305.0 1044.8 301.8 1048.3 298.7 1052.0 296.0 1055.7 293.4 1059.6 291.1 1063.5 289.1 1067.5 287.3 1071.6 285.8 1075.7 284.5 1079.8 283.5 1084.0 282.7 1088.2 282.3 1092.4 282.1 1096.5 282.2 1100.7 282.5 1104.8 283.1 1108.9 284.0 1112.9 285.2 1116.8 286.6 1120.7 288.3 1124.5 290.3 1128.2 292.5 1131.8 294.9 1135.2 297.6 1138.6 300.5 1141.8 303.7 1144.9 307.0 1147.8 310.6 1150.5 314.3 1153.1 318.3 1155.5 322.4 1157.7 326.6 1159.7 331.1 1161.5 335.6 1163.2 340.3 1164.6 345.1 1165.8 350.0 1166.8 355.0 1167.6 360.1 1168.2 365.2 1168.6 370.4 1168.7 375.6 1168.7 380.8 1168.4 386.0Z M1186.9 393.5 1186.0 400.1 1184.8 406.6 1183.3 413.1 1181.6 419.5 1179.6 425.8 1177.4 431.9 1174.9 438.0 1172.1 443.8 1169.2 449.5 1166.0 455.0 1162.6 460.4 1158.9 465.4 1155.1 470.3 1151.1 474.9 1146.9 479.3 1142.5 483.4 1138.0 487.2 1133.4 490.7 1128.6 494.0 1123.7 496.9 1118.7 499.5 1113.6 501.8 1108.5 503.7 1103.3 505.4 1098.0 506.6 1092.7 507.6 1087.4 508.2 1082.1 508.4 1076.8 508.3 1071.5 507.9 1066.3 507.1 1061.1 505.9 1056.0 504.4 1050.9 502.6 1046.0 500.5 1041.2 498.0 1036.5 495.2 1031.9 492.1 1027.5 488.7 1023.3 485.0 1019.2 481.0 1015.3 476.7 1011.6 472.2 1008.2 467.4 1004.9 462.4 1001.8 457.2 999.0 451.8 996.4 446.1 994.1 440.3 992.0 434.4 990.2 428.3 988.7 422.0 987.4 415.7 986.4 409.2 985.6 402.7 985.2 396.1 985.0 389.5 985.1 382.9 985.4 376.2 986.1 369.6 987.0 363.0 988.2 356.5 989.7 350.0 991.4 343.6 993.4 337.3 995.6 331.2 998.1 325.2 1000.9 319.3 1003.8 313.6 1007.0 308.1 1010.5 302.8 1014.1 297.7 1017.9 292.8 1021.9 288.2 1026.1 283.8 1030.5 279.7 1035.0 275.9 1039.6 272.4 1044.4 269.1 1049.3 266.2 1054.3 263.6 1059.4 261.3 1064.5 259.4 1069.8 257.8 1075.0 256.5 1080.3 255.5 1085.6 255.0 1090.9 254.7 1096.2 254.8 1101.5 255.3 1106.8 256.1 1111.9 257.2 1117.0 258.7 1122.1 260.5 1127.0 262.7 1131.8 265.1 1136.5 267.9 1141.1 271.0 1145.5 274.4 1149.7 278.2 1153.8 282.1 1157.7 286.4 1161.4 290.9 1164.9 295.7 1168.1 300.7 1171.2 305.9 1174.0 311.4 1176.6 317.0 1178.9 322.8 1181.0 328.7 1182.8 334.9 1184.4 341.1 1185.6 347.4 1186.7 353.9 1187.4 360.4 1187.9 367.0 1188.0 373.6 1188.0 380.2 1187.6 386.9Z M1204.1 395.5 1202.9 403.4 1201.5 411.3 1199.7 419.1 1197.6 426.8 1195.3 434.4 1192.5 441.8 1189.5 449.1 1186.2 456.1 1182.7 463.0 1178.8 469.6 1174.7 476.0 1170.3 482.2 1165.7 488.0 1160.9 493.6 1155.8 498.9 1150.6 503.8 1145.2 508.4 1139.6 512.6 1133.8 516.5 1127.9 520.1 1121.9 523.2 1115.8 525.9 1109.5 528.3 1103.3 530.2 1096.9 531.8 1090.5 532.9 1084.1 533.6 1077.7 533.9 1071.4 533.8 1065.0 533.2 1058.7 532.3 1052.4 530.9 1046.3 529.1 1040.2 526.9 1034.3 524.3 1028.5 521.4 1022.8 518.0 1017.4 514.2 1012.0 510.1 1006.9 505.7 1002.0 500.9 997.3 495.7 992.9 490.3 988.7 484.6 984.8 478.5 981.1 472.2 977.7 465.7 974.6 458.9 971.8 451.9 969.3 444.7 967.1 437.4 965.2 429.9 963.7 422.2 962.4 414.5 961.5 406.6 961.0 398.7 960.8 390.7 960.9 382.7 961.3 374.7 962.1 366.7 963.2 358.8 964.7 350.9 966.4 343.1 968.5 335.4 970.9 327.9 973.6 320.4 976.6 313.2 979.9 306.1 983.5 299.2 987.4 292.6 991.5 286.2 995.8 280.1 1000.4 274.2 1005.3 268.6 1010.3 263.4 1015.6 258.4 1021.0 253.8 1026.6 249.6 1032.4 245.7 1038.3 242.2 1044.3 239.0 1050.4 236.3 1056.6 233.9 1062.9 232.0 1069.2 230.4 1075.6 229.3 1082.0 228.6 1088.4 228.3 1094.8 228.4 1101.2 229.0 1107.5 229.9 1113.7 231.3 1119.9 233.1 1125.9 235.3 1131.9 237.9 1137.7 240.9 1143.3 244.2 1148.8 248.0 1154.1 252.1 1159.2 256.6 1164.1 261.4 1168.8 266.5 1173.3 271.9 1177.5 277.7 1181.4 283.7 1185.1 290.0 1188.5 296.6 1191.6 303.3 1194.4 310.3 1196.9 317.5 1199.1 324.9 1201.0 332.4 1202.5 340.0 1203.7 347.8 1204.6 355.6 1205.2 363.6 1205.4 371.5 1205.3 379.5 1204.8 387.5Z M1217.3 397.0 1216.0 406.1 1214.4 415.1 1212.3 424.1 1210.0 432.9 1207.2 441.5 1204.1 450.0 1200.7 458.4 1196.9 466.5 1192.8 474.3 1188.4 481.9 1183.7 489.2 1178.7 496.3 1173.4 503.0 1167.9 509.3 1162.1 515.4 1156.1 521.0 1149.8 526.3 1143.4 531.2 1136.8 535.6 1130.1 539.6 1123.2 543.2 1116.2 546.4 1109.1 549.1 1101.9 551.3 1094.6 553.1 1087.3 554.4 1080.0 555.2 1072.7 555.5 1065.3 555.4 1058.1 554.7 1050.8 553.6 1043.7 552.1 1036.7 550.0 1029.7 547.5 1022.9 544.6 1016.3 541.1 1009.8 537.3 1003.5 533.0 997.4 528.3 991.6 523.2 986.0 517.7 980.6 511.8 975.5 505.6 970.7 499.0 966.2 492.1 962.0 484.9 958.1 477.4 954.5 469.6 951.3 461.6 948.5 453.4 946.0 445.0 943.8 436.4 942.0 427.6 940.6 418.7 939.6 409.7 939.0 400.7 938.7 391.6 938.9 382.4 939.4 373.2 940.3 364.1 941.5 355.0 943.2 346.0 945.2 337.1 947.6 328.2 950.3 319.6 953.4 311.1 956.9 302.8 960.7 294.7 964.8 286.8 969.2 279.2 973.9 271.9 978.9 264.9 984.2 258.2 989.7 251.8 995.5 245.8 1001.5 240.1 1007.7 234.8 1014.1 230.0 1020.7 225.5 1027.5 221.5 1034.3 217.9 1041.4 214.7 1048.5 212.1 1055.7 209.8 1062.9 208.1 1070.2 206.8 1077.6 206.0 1084.9 205.6 1092.2 205.8 1099.5 206.4 1106.7 207.5 1113.8 209.1 1120.9 211.1 1127.8 213.6 1134.6 216.6 1141.3 220.0 1147.7 223.9 1154.0 228.1 1160.1 232.8 1166.0 237.9 1171.6 243.4 1176.9 249.3 1182.0 255.6 1186.8 262.1 1191.4 269.0 1195.6 276.2 1199.4 283.7 1203.0 291.5 1206.2 299.5 1209.1 307.7 1211.6 316.2 1213.7 324.8 1215.5 333.5 1216.9 342.4 1217.9 351.4 1218.6 360.5 1218.8 369.6 1218.7 378.7 1218.2 387.9Z M1227.7 398.2 1226.2 408.4 1224.4 418.5 1222.1 428.5 1219.5 438.3 1216.4 448.0 1212.9 457.5 1209.1 466.8 1204.8 475.9 1200.2 484.7 1195.3 493.2 1190.0 501.4 1184.4 509.2 1178.5 516.7 1172.3 523.9 1165.9 530.6 1159.2 536.9 1152.2 542.8 1145.0 548.3 1137.7 553.3 1130.1 557.8 1122.4 561.8 1114.5 565.3 1106.6 568.3 1098.5 570.8 1090.4 572.8 1082.2 574.2 1074.0 575.2 1065.8 575.5 1057.6 575.4 1049.5 574.7 1041.4 573.4 1033.4 571.7 1025.5 569.4 1017.8 566.6 1010.2 563.3 1002.7 559.4 995.5 555.1 988.5 550.3 981.7 545.1 975.1 539.4 968.8 533.2 962.8 526.6 957.1 519.7 951.8 512.3 946.7 504.6 942.0 496.5 937.7 488.1 933.7 479.4 930.1 470.5 926.9 461.3 924.1 451.9 921.7 442.2 919.7 432.4 918.1 422.5 917.0 412.4 916.3 402.3 916.0 392.1 916.1 381.8 916.7 371.6 917.7 361.4 919.1 351.2 921.0 341.1 923.2 331.1 925.9 321.2 929.0 311.5 932.4 302.0 936.3 292.7 940.5 283.7 945.1 274.9 950.0 266.4 955.3 258.2 960.9 250.3 966.8 242.8 973.0 235.7 979.5 228.9 986.2 222.6 993.1 216.7 1000.3 211.3 1007.7 206.3 1015.3 201.8 1023.0 197.8 1030.8 194.2 1038.8 191.2 1046.8 188.7 1054.9 186.8 1063.1 185.3 1071.3 184.4 1079.5 184.0 1087.7 184.2 1095.8 184.9 1103.9 186.1 1111.9 187.9 1119.8 190.2 1127.6 193.0 1135.2 196.3 1142.6 200.1 1149.8 204.4 1156.9 209.2 1163.7 214.5 1170.2 220.2 1176.5 226.4 1182.5 232.9 1188.2 239.9 1193.6 247.3 1198.6 255.0 1203.4 263.1 1207.7 271.4 1211.7 280.1 1215.3 289.1 1218.5 298.3 1221.3 307.7 1223.7 317.3 1225.7 327.1 1227.2 337.1 1228.4 347.1 1229.1 357.3 1229.4 367.5 1229.2 377.7 1228.7 388.0Z M1232.5 398.7 1230.9 409.7 1228.9 420.6 1226.5 431.4 1223.6 442.0 1220.3 452.5 1216.5 462.8 1212.4 472.8 1207.8 482.6 1202.9 492.1 1197.5 501.3 1191.8 510.1 1185.8 518.6 1179.4 526.7 1172.7 534.4 1165.7 541.7 1158.5 548.5 1151.0 554.9 1143.2 560.8 1135.3 566.2 1127.1 571.0 1118.8 575.4 1110.3 579.2 1101.7 582.4 1093.0 585.1 1084.2 587.3 1075.4 588.8 1066.6 589.8 1057.7 590.2 1048.9 590.0 1040.1 589.3 1031.3 588.0 1022.7 586.1 1014.2 583.6 1005.8 580.6 997.6 577.0 989.6 572.8 981.7 568.2 974.1 563.0 966.8 557.3 959.7 551.2 952.9 544.5 946.5 537.4 940.3 529.9 934.5 521.9 929.0 513.6 924.0 504.9 919.3 495.8 915.0 486.4 911.1 476.8 907.6 466.8 904.6 456.6 902.0 446.2 899.9 435.7 898.2 424.9 896.9 414.1 896.2 403.1 895.9 392.1 896.0 381.0 896.6 370.0 897.7 358.9 899.2 347.9 901.2 337.0 903.7 326.2 906.6 315.6 909.9 305.1 913.6 294.8 917.8 284.8 922.4 275.0 927.3 265.5 932.6 256.3 938.3 247.5 944.4 239.0 950.8 230.9 957.4 223.2 964.4 215.9 971.7 209.1 979.2 202.7 986.9 196.8 994.9 191.4 1003.1 186.6 1011.4 182.2 1019.9 178.4 1028.5 175.2 1037.2 172.5 1045.9 170.3 1054.8 168.8 1063.6 167.8 1072.5 167.4 1081.3 167.6 1090.1 168.3 1098.8 169.6 1107.5 171.6 1116.0 174.0 1124.4 177.1 1132.6 180.6 1140.6 184.8 1148.4 189.4 1156.0 194.6 1163.4 200.3 1170.4 206.5 1177.2 213.1 1183.7 220.2 1189.9 227.7 1195.7 235.7 1201.1 244.0 1206.2 252.7 1210.9 261.8 1215.2 271.2 1219.1 280.8 1222.6 290.8 1225.6 301.0 1228.2 311.4 1230.3 321.9 1232.0 332.7 1233.2 343.5 1234.0 354.5 1234.3 365.5 1234.2 376.6 1233.5 387.7Z M1231.0 398.4 1229.4 409.9 1227.3 421.3 1224.7 432.5 1221.7 443.6 1218.3 454.6 1214.3 465.3 1210.0 475.8 1205.2 486.0 1200.1 495.9 1194.5 505.5 1188.6 514.7 1182.3 523.6 1175.6 532.0 1168.6 540.1 1161.3 547.7 1153.8 554.8 1145.9 561.4 1137.8 567.6 1129.5 573.2 1121.0 578.3 1112.3 582.8 1103.5 586.8 1094.5 590.2 1085.5 593.0 1076.3 595.2 1067.1 596.8 1057.9 597.8 1048.6 598.3 1039.4 598.1 1030.2 597.3 1021.1 595.9 1012.1 593.9 1003.2 591.4 994.5 588.2 985.9 584.4 977.5 580.1 969.4 575.3 961.4 569.9 953.8 563.9 946.4 557.5 939.3 550.6 932.5 543.2 926.1 535.3 920.1 527.0 914.4 518.3 909.1 509.2 904.2 499.8 899.7 490.0 895.6 479.9 892.0 469.5 888.9 458.9 886.2 448.0 883.9 437.0 882.2 425.8 880.9 414.5 880.1 403.0 879.7 391.5 879.9 380.0 880.6 368.4 881.7 356.9 883.3 345.5 885.4 334.1 887.9 322.8 890.9 311.7 894.4 300.8 898.3 290.1 902.6 279.6 907.4 269.4 912.6 259.5 918.1 249.9 924.1 240.7 930.4 231.8 937.0 223.3 944.0 215.3 951.3 207.7 958.9 200.6 966.7 193.9 974.8 187.8 983.1 182.2 991.6 177.1 1000.3 172.6 1009.1 168.6 1018.1 165.2 1027.2 162.4 1036.3 160.2 1045.6 158.5 1054.8 157.5 1064.0 157.1 1073.3 157.3 1082.4 158.1 1091.5 159.4 1100.5 161.4 1109.4 164.0 1118.2 167.2 1126.7 170.9 1135.1 175.2 1143.3 180.1 1151.2 185.5 1158.9 191.4 1166.3 197.9 1173.3 204.8 1180.1 212.2 1186.5 220.1 1192.6 228.4 1198.3 237.1 1203.6 246.2 1208.5 255.6 1213.0 265.4 1217.0 275.5 1220.6 285.8 1223.8 296.5 1226.5 307.3 1228.7 318.4 1230.5 329.6 1231.8 340.9 1232.6 352.3 1232.9 363.8 1232.7 375.4 1232.1 386.9Z M1091.5 382.2 1083.4 382.4 1075.5 382.5 1067.7 382.6 1060.1 382.7 1052.6 382.8 1045.3 382.8 1038.2 382.8 1031.2 382.7 1024.3 382.7 1017.6 382.6 1011.0 382.5 1004.6 382.4 998.3 382.3 992.2 382.2 986.2 382.1 980.4 382.0 974.7 381.8 969.1 381.7 963.7 381.6 958.4 381.4 953.3 381.3 948.4 381.1 943.5 381.0 938.8 380.8 934.3 380.6 929.9 380.5 925.6 380.3 921.5 380.1 917.5 380.0 913.7 379.8 910.0 379.6 906.4 379.5 903.0 379.3 899.7 379.1 896.6 378.9 893.5 378.7 890.6 378.6 887.9 378.4 885.2 378.2 882.7 378.0 880.2 377.8 877.9 377.3 875.7 376.7 873.6 376.3 871.5 375.9 869.5 375.5 867.5 375.2 865.2 374.9 M1091.5 382.2 1084.8 376.9 1078.3 371.7 1071.9 366.6 1065.7 361.6 1059.5 356.8 1053.5 352.0 1047.6 347.4 1041.9 342.9 1036.2 338.5 1030.6 334.2 1025.2 330.1 1019.9 326.0 1014.7 322.1 1009.6 318.3 1004.6 314.6 999.7 311.1 994.9 307.7 990.3 304.3 985.7 301.2 981.3 298.1 976.9 295.1 972.7 292.3 968.6 289.6 964.6 287.0 960.7 284.5 956.9 282.1 953.2 279.9 949.7 277.7 946.2 275.7 942.8 273.8 939.6 272.0 936.5 270.3 933.4 268.7 930.5 267.2 927.7 265.9 924.9 264.6 922.3 263.4 919.8 262.3 917.3 261.4 915.0 260.5 912.7 259.7 910.7 258.8 908.6 258.0 906.7 257.3 904.7 256.7 902.8 256.3 900.8 255.9 898.5 255.6 M1091.5 382.2 1088.3 373.1 1085.1 364.3 1082.1 355.6 1079.2 347.1 1076.3 338.8 1073.5 330.7 1070.7 322.8 1068.0 315.1 1065.4 307.7 1062.8 300.4 1060.2 293.3 1057.6 286.5 1055.1 279.8 1052.6 273.4 1050.1 267.2 1047.7 261.1 1045.3 255.3 1042.9 249.8 1040.5 244.4 1038.1 239.2 1035.8 234.2 1033.5 229.5 1031.2 224.9 1028.9 220.6 1026.7 216.4 1024.5 212.5 1022.3 208.7 1020.1 205.2 1018.0 201.8 1015.8 198.7 1013.7 195.7 1011.7 192.9 1009.6 190.3 1007.6 187.9 1005.6 185.7 1003.6 183.6 1001.7 181.8 999.8 180.0 997.9 178.5 996.0 177.1 994.2 175.9 993.0 174.5 991.8 173.3 990.4 172.3 989.0 171.4 987.3 170.8 985.5 170.3 983.3 170.0 M1091.5 382.2 1092.2 372.1 1093.1 362.2 1094.1 352.6 1095.2 343.3 1096.3 334.2 1097.5 325.4 1098.6 316.8 1099.8 308.5 1101.0 300.5 1102.1 292.7 1103.2 285.1 1104.2 277.8 1105.1 270.8 1106.0 263.9 1106.8 257.3 1107.5 251.0 1108.1 244.8 1108.7 238.9 1109.1 233.2 1109.5 227.7 1109.7 222.5 1109.9 217.5 1110.0 212.7 1109.9 208.1 1109.8 203.7 1109.6 199.5 1109.3 195.5 1109.0 191.8 1108.5 188.2 1107.9 184.8 1107.3 181.7 1106.6 178.7 1105.8 176.0 1105.0 173.4 1104.0 171.0 1103.0 168.9 1102.0 166.9 1100.8 165.1 1099.6 163.4 1098.4 162.0 1097.0 160.7 1097.6 160.0 1098.0 159.5 1097.9 159.1 1097.4 158.7 1096.3 158.4 1094.9 158.1 1092.7 157.8 M1091.5 382.2 1096.0 373.5 1100.6 365.2 1105.4 357.4 1110.1 349.9 1114.9 342.8 1119.6 336.0 1124.2 329.6 1128.8 323.4 1133.3 317.5 1137.6 311.9 1141.8 306.6 1145.9 301.4 1149.7 296.5 1153.5 291.7 1157.0 287.2 1160.4 282.8 1163.5 278.6 1166.5 274.6 1169.3 270.7 1171.9 267.0 1174.3 263.4 1176.6 259.9 1178.6 256.6 1180.5 253.5 1182.1 250.4 1183.6 247.5 1184.9 244.7 1186.1 242.1 1187.0 239.6 1187.8 237.2 1188.4 234.9 1188.9 232.8 1189.2 230.8 1189.3 229.0 1189.3 227.2 1189.1 225.6 1188.8 224.1 1188.3 222.8 1187.7 221.5 1187.0 220.4 1186.1 219.5 1187.3 221.6 1188.2 223.6 1188.5 225.3 1188.3 226.4 1187.4 227.1 1186.0 227.4 1183.9 227.3 M1091.5 382.2 1099.1 378.2 1106.5 374.5 1113.8 371.0 1120.9 367.9 1127.7 365.0 1134.4 362.3 1140.8 359.8 1147.1 357.5 1153.1 355.3 1158.8 353.2 1164.4 351.3 1169.7 349.5 1174.7 347.7 1179.6 346.1 1184.2 344.5 1188.5 343.0 1192.7 341.5 1196.6 340.1 1200.3 338.8 1203.7 337.4 1207.0 336.2 1210.0 335.0 1212.8 333.8 1215.4 332.6 1217.8 331.5 1219.9 330.4 1221.9 329.4 1223.6 328.4 1225.2 327.4 1226.5 326.5 1227.7 325.6 1228.6 324.7 1229.4 323.9 1229.9 323.1 1230.3 322.4 1230.5 321.7 1230.6 321.0 1230.4 320.4 1230.1 319.9 1229.6 319.3 1228.9 318.8 1228.5 320.8 1227.8 322.7 1226.9 324.1 1225.7 325.1 1224.3 325.7 1222.6 325.9 1220.4 325.8 M1091.5 382.2 1099.1 385.0 1106.6 387.7 1113.8 390.3 1120.8 392.8 1127.5 395.1 1134.1 397.4 1140.3 399.6 1146.4 401.7 1152.2 403.7 1157.8 405.7 1163.1 407.5 1168.2 409.3 1173.1 411.0 1177.8 412.7 1182.2 414.2 1186.4 415.7 1190.3 417.2 1194.1 418.5 1197.6 419.9 1200.9 421.1 1204.0 422.3 1206.9 423.4 1209.6 424.5 1212.0 425.5 1214.3 426.4 1216.3 427.3 1218.2 428.1 1219.9 428.9 1221.3 429.6 1222.6 430.3 1223.6 430.9 1224.5 431.4 1225.2 431.9 1225.8 432.4 1226.1 432.8 1226.2 433.1 1226.2 433.4 1226.0 433.6 1225.7 433.8 1225.1 433.9 1224.4 434.0 1223.7 433.7 1222.7 433.3 1221.6 432.9 1220.3 432.6 1218.7 432.3 1217.0 432.0 1214.7 431.7 M1091.5 382.2 1096.1 390.2 1100.7 397.9 1105.3 405.2 1109.8 412.2 1114.2 419.0 1118.6 425.4 1122.8 431.6 1126.9 437.5 1130.9 443.2 1134.8 448.6 1138.5 453.9 1142.1 458.9 1145.5 463.7 1148.7 468.3 1151.8 472.7 1154.7 477.0 1157.4 481.1 1159.9 485.0 1162.3 488.7 1164.5 492.3 1166.6 495.8 1168.4 499.0 1170.1 502.1 1171.7 505.1 1173.0 507.9 1174.2 510.6 1175.3 513.1 1176.2 515.5 1176.9 517.7 1177.5 519.8 1177.9 521.8 1178.2 523.6 1178.3 525.2 1178.3 526.7 1178.1 528.1 1177.8 529.4 1177.4 530.5 1176.9 531.4 1176.2 532.3 1175.3 533.0 1174.4 533.6 1174.7 532.4 1174.7 531.1 1174.4 530.1 1173.7 529.3 1172.5 528.6 1171.0 528.2 1168.8 527.8 M1091.5 382.2 1091.8 392.3 1092.2 402.1 1092.6 411.6 1093.2 420.9 1093.7 429.9 1094.2 438.6 1094.8 447.1 1095.3 455.3 1095.8 463.2 1096.2 470.9 1096.6 478.3 1097.0 485.5 1097.3 492.4 1097.6 499.1 1097.7 505.5 1097.9 511.7 1097.9 517.6 1097.9 523.3 1097.8 528.8 1097.6 534.1 1097.4 539.1 1097.1 543.9 1096.7 548.4 1096.3 552.8 1095.8 556.9 1095.2 560.8 1094.5 564.5 1093.8 568.0 1093.0 571.2 1092.2 574.2 1091.3 577.1 1090.4 579.7 1089.4 582.1 1088.3 584.3 1087.2 586.4 1086.0 588.2 1084.8 589.8 1083.5 591.3 1082.2 592.5 1080.8 593.6 1079.4 594.5 1079.2 594.9 1078.9 595.1 1078.3 595.2 1077.4 595.3 1076.1 595.2 1074.4 595.0 1072.2 594.8 M1091.5 382.2 1087.3 391.1 1083.1 399.8 1079.1 408.3 1075.1 416.6 1071.2 424.6 1067.4 432.5 1063.7 440.1 1060.0 447.5 1056.4 454.7 1052.9 461.7 1049.4 468.5 1045.9 475.0 1042.5 481.3 1039.2 487.4 1035.9 493.3 1032.7 499.0 1029.5 504.4 1026.3 509.6 1023.2 514.7 1020.2 519.5 1017.2 524.1 1014.3 528.4 1011.4 532.6 1008.6 536.6 1005.8 540.3 1003.1 543.9 1000.4 547.3 997.8 550.4 995.2 553.4 992.7 556.1 990.2 558.7 987.8 561.1 985.4 563.3 983.1 565.3 980.8 567.1 978.6 568.8 976.5 570.2 974.4 571.5 972.3 572.6 970.3 573.6 968.3 574.4 966.7 575.2 965.1 575.9 963.4 576.4 961.7 576.7 959.9 576.8 958.0 576.7 955.7 576.5 M1091.5 382.2 1084.4 387.6 1077.5 392.9 1070.7 398.1 1064.1 403.1 1057.6 408.0 1051.2 412.7 1044.9 417.3 1038.7 421.8 1032.7 426.1 1026.8 430.3 1021.0 434.3 1015.3 438.2 1009.8 442.0 1004.3 445.6 999.0 449.1 993.8 452.4 988.8 455.7 983.8 458.8 979.0 461.7 974.3 464.6 969.7 467.3 965.2 469.8 960.9 472.3 956.7 474.6 952.6 476.8 948.6 478.9 944.7 480.9 941.0 482.7 937.4 484.4 933.9 486.0 930.5 487.5 927.2 488.8 924.1 490.1 921.0 491.2 918.1 492.3 915.3 493.2 912.6 494.0 909.9 494.7 907.4 495.3 905.0 495.8 902.7 496.2 900.5 496.5 898.3 496.7 896.3 496.8 894.2 496.8 892.2 496.7 890.2 496.6 887.9 496.3" stroke="#5a5a26" stroke-opacity="0.75" stroke-width="1.5"/>
<path d="M1108.1 384.2 1107.9 385.3 1107.7 386.3 1107.5 387.4 1107.2 388.5 1106.9 389.5 1106.5 390.5 1106.1 391.5 1105.6 392.5 1105.2 393.5 1104.6 394.4 1104.1 395.3 1103.5 396.1 1102.8 396.9 1102.2 397.7 1101.5 398.4 1100.7 399.1 1100.0 399.7 1099.2 400.3 1098.4 400.8 1097.6 401.3 1096.8 401.7 1095.9 402.1 1095.1 402.4 1094.2 402.7 1093.4 402.9 1092.5 403.1 1091.6 403.2 1090.7 403.2 1089.8 403.2 1089.0 403.1 1088.1 403.0 1087.2 402.8 1086.4 402.6 1085.6 402.3 1084.7 401.9 1083.9 401.5 1083.2 401.0 1082.4 400.5 1081.7 400.0 1081.0 399.3 1080.3 398.7 1079.6 398.0 1079.0 397.2 1078.5 396.4 1077.9 395.6 1077.4 394.7 1076.9 393.8 1076.5 392.9 1076.1 391.9 1075.8 390.9 1075.5 389.9 1075.2 388.9 1075.0 387.8 1074.8 386.8 1074.7 385.7 1074.6 384.6 1074.6 383.5 1074.6 382.4 1074.7 381.3 1074.8 380.2 1075.0 379.1 1075.2 378.0 1075.4 377.0 1075.7 375.9 1076.0 374.9 1076.4 373.8 1076.8 372.8 1077.3 371.9 1077.7 370.9 1078.3 370.0 1078.8 369.1 1079.4 368.3 1080.1 367.5 1080.7 366.7 1081.4 366.0 1082.2 365.3 1082.9 364.7 1083.7 364.1 1084.5 363.6 1085.3 363.1 1086.1 362.6 1087.0 362.3 1087.8 361.9 1088.7 361.7 1089.5 361.5 1090.4 361.3 1091.3 361.2 1092.2 361.2 1093.1 361.2 1093.9 361.3 1094.8 361.4 1095.7 361.6 1096.5 361.8 1097.3 362.1 1098.2 362.5 1099.0 362.9 1099.7 363.4 1100.5 363.9 1101.2 364.4 1101.9 365.1 1102.6 365.7 1103.2 366.4 1103.9 367.2 1104.4 368.0 1105.0 368.8 1105.5 369.7 1106.0 370.6 1106.4 371.5 1106.8 372.4 1107.1 373.4 1107.4 374.5 1107.7 375.5 1107.9 376.5 1108.1 377.6 1108.2 378.7 1108.3 379.8 1108.3 380.9 1108.3 382.0 1108.2 383.1Z M1127.6 386.5 1127.3 388.9 1126.8 391.3 1126.3 393.6 1125.7 395.9 1125.0 398.2 1124.1 400.5 1123.2 402.6 1122.2 404.8 1121.2 406.8 1120.0 408.9 1118.8 410.8 1117.4 412.6 1116.1 414.4 1114.6 416.1 1113.1 417.7 1111.5 419.2 1109.9 420.5 1108.2 421.8 1106.4 423.0 1104.7 424.1 1102.8 425.0 1101.0 425.8 1099.1 426.5 1097.2 427.1 1095.3 427.6 1093.4 427.9 1091.5 428.2 1089.5 428.2 1087.6 428.2 1085.7 428.0 1083.8 427.7 1081.9 427.3 1080.0 426.8 1078.2 426.1 1076.4 425.4 1074.7 424.5 1073.0 423.4 1071.3 422.3 1069.7 421.1 1068.2 419.7 1066.7 418.3 1065.3 416.7 1063.9 415.1 1062.7 413.3 1061.5 411.5 1060.4 409.6 1059.3 407.7 1058.4 405.6 1057.6 403.5 1056.8 401.3 1056.1 399.1 1055.6 396.9 1055.1 394.5 1054.7 392.2 1054.5 389.8 1054.3 387.5 1054.2 385.0 1054.3 382.6 1054.4 380.2 1054.6 377.8 1055.0 375.4 1055.4 373.0 1055.9 370.7 1056.6 368.4 1057.3 366.1 1058.1 363.8 1059.0 361.7 1060.0 359.5 1061.1 357.5 1062.3 355.5 1063.5 353.5 1064.8 351.7 1066.2 349.9 1067.7 348.2 1069.2 346.6 1070.8 345.2 1072.4 343.8 1074.1 342.5 1075.8 341.3 1077.6 340.2 1079.4 339.3 1081.3 338.5 1083.1 337.8 1085.0 337.2 1087.0 336.7 1088.9 336.4 1090.8 336.2 1092.7 336.1 1094.7 336.1 1096.6 336.3 1098.5 336.6 1100.4 337.0 1102.2 337.5 1104.1 338.2 1105.8 339.0 1107.6 339.9 1109.3 340.9 1111.0 342.0 1112.6 343.2 1114.1 344.6 1115.6 346.0 1117.0 347.6 1118.3 349.2 1119.6 351.0 1120.8 352.8 1121.9 354.7 1122.9 356.6 1123.9 358.7 1124.7 360.8 1125.5 363.0 1126.1 365.2 1126.7 367.5 1127.1 369.8 1127.5 372.1 1127.8 374.5 1128.0 376.9 1128.0 379.3 1128.0 381.7 1127.9 384.1Z M1147.4 388.8 1146.9 392.6 1146.2 396.3 1145.4 400.0 1144.4 403.6 1143.2 407.2 1142.0 410.7 1140.5 414.1 1139.0 417.4 1137.3 420.7 1135.5 423.8 1133.5 426.8 1131.5 429.7 1129.3 432.5 1127.0 435.1 1124.7 437.6 1122.2 439.9 1119.6 442.1 1117.0 444.1 1114.3 445.9 1111.5 447.6 1108.7 449.0 1105.8 450.3 1102.8 451.4 1099.9 452.4 1096.9 453.1 1093.9 453.6 1090.9 454.0 1087.8 454.1 1084.8 454.0 1081.8 453.8 1078.9 453.3 1075.9 452.7 1073.0 451.8 1070.2 450.8 1067.4 449.6 1064.6 448.2 1062.0 446.6 1059.4 444.8 1056.9 442.9 1054.5 440.8 1052.1 438.5 1049.9 436.1 1047.8 433.5 1045.9 430.8 1044.0 428.0 1042.3 425.0 1040.7 421.9 1039.2 418.7 1037.9 415.4 1036.7 412.0 1035.7 408.6 1034.8 405.0 1034.1 401.4 1033.5 397.8 1033.1 394.1 1032.8 390.3 1032.7 386.6 1032.7 382.8 1033.0 379.0 1033.3 375.3 1033.9 371.5 1034.5 367.8 1035.4 364.1 1036.3 360.5 1037.5 356.9 1038.8 353.4 1040.2 350.0 1041.7 346.7 1043.4 343.5 1045.2 340.3 1047.2 337.3 1049.2 334.4 1051.4 331.6 1053.7 329.0 1056.1 326.5 1058.5 324.2 1061.1 322.0 1063.7 320.0 1066.4 318.2 1069.2 316.6 1072.1 315.1 1075.0 313.8 1077.9 312.7 1080.8 311.7 1083.8 311.0 1086.8 310.5 1089.9 310.2 1092.9 310.0 1095.9 310.1 1098.9 310.3 1101.9 310.8 1104.8 311.4 1107.7 312.3 1110.6 313.3 1113.4 314.5 1116.1 315.9 1118.8 317.5 1121.3 319.3 1123.8 321.2 1126.3 323.3 1128.6 325.6 1130.8 328.0 1132.9 330.6 1134.9 333.3 1136.7 336.1 1138.4 339.1 1140.0 342.2 1141.5 345.4 1142.8 348.7 1144.0 352.1 1145.0 355.5 1145.9 359.1 1146.7 362.7 1147.2 366.3 1147.7 370.0 1147.9 373.8 1148.0 377.5 1148.0 381.3 1147.8 385.1Z M1167.9 391.2 1167.1 396.4 1166.2 401.6 1165.0 406.7 1163.7 411.7 1162.1 416.6 1160.3 421.5 1158.4 426.2 1156.2 430.8 1153.9 435.3 1151.4 439.7 1148.7 443.8 1145.8 447.8 1142.8 451.7 1139.7 455.3 1136.4 458.7 1132.9 462.0 1129.4 465.0 1125.7 467.7 1122.0 470.3 1118.1 472.6 1114.2 474.6 1110.2 476.4 1106.1 478.0 1102.0 479.2 1097.9 480.2 1093.7 481.0 1089.6 481.4 1085.4 481.6 1081.2 481.6 1077.1 481.2 1072.9 480.6 1068.9 479.7 1064.8 478.5 1060.9 477.1 1057.0 475.4 1053.2 473.4 1049.5 471.2 1045.9 468.8 1042.5 466.1 1039.1 463.2 1035.9 460.1 1032.9 456.7 1030.0 453.2 1027.2 449.4 1024.7 445.5 1022.3 441.4 1020.0 437.1 1018.0 432.7 1016.2 428.1 1014.5 423.4 1013.1 418.6 1011.9 413.7 1010.9 408.7 1010.1 403.6 1009.5 398.5 1009.1 393.3 1009.0 388.1 1009.1 382.9 1009.4 377.7 1009.9 372.5 1010.6 367.3 1011.5 362.1 1012.7 357.0 1014.0 352.0 1015.6 347.1 1017.4 342.2 1019.3 337.5 1021.5 332.9 1023.8 328.4 1026.4 324.1 1029.0 319.9 1031.9 315.9 1034.9 312.0 1038.1 308.4 1041.4 305.0 1044.8 301.8 1048.3 298.7 1052.0 296.0 1055.7 293.4 1059.6 291.1 1063.5 289.1 1067.5 287.3 1071.6 285.8 1075.7 284.5 1079.8 283.5 1084.0 282.7 1088.2 282.3 1092.4 282.1 1096.5 282.2 1100.7 282.5 1104.8 283.1 1108.9 284.0 1112.9 285.2 1116.8 286.6 1120.7 288.3 1124.5 290.3 1128.2 292.5 1131.8 294.9 1135.2 297.6 1138.6 300.5 1141.8 303.7 1144.9 307.0 1147.8 310.6 1150.5 314.3 1153.1 318.3 1155.5 322.4 1157.7 326.6 1159.7 331.1 1161.5 335.6 1163.2 340.3 1164.6 345.1 1165.8 350.0 1166.8 355.0 1167.6 360.1 1168.2 365.2 1168.6 370.4 1168.7 375.6 1168.7 380.8 1168.4 386.0Z M1186.9 393.5 1186.0 400.1 1184.8 406.6 1183.3 413.1 1181.6 419.5 1179.6 425.8 1177.4 431.9 1174.9 438.0 1172.1 443.8 1169.2 449.5 1166.0 455.0 1162.6 460.4 1158.9 465.4 1155.1 470.3 1151.1 474.9 1146.9 479.3 1142.5 483.4 1138.0 487.2 1133.4 490.7 1128.6 494.0 1123.7 496.9 1118.7 499.5 1113.6 501.8 1108.5 503.7 1103.3 505.4 1098.0 506.6 1092.7 507.6 1087.4 508.2 1082.1 508.4 1076.8 508.3 1071.5 507.9 1066.3 507.1 1061.1 505.9 1056.0 504.4 1050.9 502.6 1046.0 500.5 1041.2 498.0 1036.5 495.2 1031.9 492.1 1027.5 488.7 1023.3 485.0 1019.2 481.0 1015.3 476.7 1011.6 472.2 1008.2 467.4 1004.9 462.4 1001.8 457.2 999.0 451.8 996.4 446.1 994.1 440.3 992.0 434.4 990.2 428.3 988.7 422.0 987.4 415.7 986.4 409.2 985.6 402.7 985.2 396.1 985.0 389.5 985.1 382.9 985.4 376.2 986.1 369.6 987.0 363.0 988.2 356.5 989.7 350.0 991.4 343.6 993.4 337.3 995.6 331.2 998.1 325.2 1000.9 319.3 1003.8 313.6 1007.0 308.1 1010.5 302.8 1014.1 297.7 1017.9 292.8 1021.9 288.2 1026.1 283.8 1030.5 279.7 1035.0 275.9 1039.6 272.4 1044.4 269.1 1049.3 266.2 1054.3 263.6 1059.4 261.3 1064.5 259.4 1069.8 257.8 1075.0 256.5 1080.3 255.5 1085.6 255.0 1090.9 254.7 1096.2 254.8 1101.5 255.3 1106.8 256.1 1111.9 257.2 1117.0 258.7 1122.1 260.5 1127.0 262.7 1131.8 265.1 1136.5 267.9 1141.1 271.0 1145.5 274.4 1149.7 278.2 1153.8 282.1 1157.7 286.4 1161.4 290.9 1164.9 295.7 1168.1 300.7 1171.2 305.9 1174.0 311.4 1176.6 317.0 1178.9 322.8 1181.0 328.7 1182.8 334.9 1184.4 341.1 1185.6 347.4 1186.7 353.9 1187.4 360.4 1187.9 367.0 1188.0 373.6 1188.0 380.2 1187.6 386.9Z M1204.1 395.5 1202.9 403.4 1201.5 411.3 1199.7 419.1 1197.6 426.8 1195.3 434.4 1192.5 441.8 1189.5 449.1 1186.2 456.1 1182.7 463.0 1178.8 469.6 1174.7 476.0 1170.3 482.2 1165.7 488.0 1160.9 493.6 1155.8 498.9 1150.6 503.8 1145.2 508.4 1139.6 512.6 1133.8 516.5 1127.9 520.1 1121.9 523.2 1115.8 525.9 1109.5 528.3 1103.3 530.2 1096.9 531.8 1090.5 532.9 1084.1 533.6 1077.7 533.9 1071.4 533.8 1065.0 533.2 1058.7 532.3 1052.4 530.9 1046.3 529.1 1040.2 526.9 1034.3 524.3 1028.5 521.4 1022.8 518.0 1017.4 514.2 1012.0 510.1 1006.9 505.7 1002.0 500.9 997.3 495.7 992.9 490.3 988.7 484.6 984.8 478.5 981.1 472.2 977.7 465.7 974.6 458.9 971.8 451.9 969.3 444.7 967.1 437.4 965.2 429.9 963.7 422.2 962.4 414.5 961.5 406.6 961.0 398.7 960.8 390.7 960.9 382.7 961.3 374.7 962.1 366.7 963.2 358.8 964.7 350.9 966.4 343.1 968.5 335.4 970.9 327.9 973.6 320.4 976.6 313.2 979.9 306.1 983.5 299.2 987.4 292.6 991.5 286.2 995.8 280.1 1000.4 274.2 1005.3 268.6 1010.3 263.4 1015.6 258.4 1021.0 253.8 1026.6 249.6 1032.4 245.7 1038.3 242.2 1044.3 239.0 1050.4 236.3 1056.6 233.9 1062.9 232.0 1069.2 230.4 1075.6 229.3 1082.0 228.6 1088.4 228.3 1094.8 228.4 1101.2 229.0 1107.5 229.9 1113.7 231.3 1119.9 233.1 1125.9 235.3 1131.9 237.9 1137.7 240.9 1143.3 244.2 1148.8 248.0 1154.1 252.1 1159.2 256.6 1164.1 261.4 1168.8 266.5 1173.3 271.9 1177.5 277.7 1181.4 283.7 1185.1 290.0 1188.5 296.6 1191.6 303.3 1194.4 310.3 1196.9 317.5 1199.1 324.9 1201.0 332.4 1202.5 340.0 1203.7 347.8 1204.6 355.6 1205.2 363.6 1205.4 371.5 1205.3 379.5 1204.8 387.5Z M1217.3 397.0 1216.0 406.1 1214.4 415.1 1212.3 424.1 1210.0 432.9 1207.2 441.5 1204.1 450.0 1200.7 458.4 1196.9 466.5 1192.8 474.3 1188.4 481.9 1183.7 489.2 1178.7 496.3 1173.4 503.0 1167.9 509.3 1162.1 515.4 1156.1 521.0 1149.8 526.3 1143.4 531.2 1136.8 535.6 1130.1 539.6 1123.2 543.2 1116.2 546.4 1109.1 549.1 1101.9 551.3 1094.6 553.1 1087.3 554.4 1080.0 555.2 1072.7 555.5 1065.3 555.4 1058.1 554.7 1050.8 553.6 1043.7 552.1 1036.7 550.0 1029.7 547.5 1022.9 544.6 1016.3 541.1 1009.8 537.3 1003.5 533.0 997.4 528.3 991.6 523.2 986.0 517.7 980.6 511.8 975.5 505.6 970.7 499.0 966.2 492.1 962.0 484.9 958.1 477.4 954.5 469.6 951.3 461.6 948.5 453.4 946.0 445.0 943.8 436.4 942.0 427.6 940.6 418.7 939.6 409.7 939.0 400.7 938.7 391.6 938.9 382.4 939.4 373.2 940.3 364.1 941.5 355.0 943.2 346.0 945.2 337.1 947.6 328.2 950.3 319.6 953.4 311.1 956.9 302.8 960.7 294.7 964.8 286.8 969.2 279.2 973.9 271.9 978.9 264.9 984.2 258.2 989.7 251.8 995.5 245.8 1001.5 240.1 1007.7 234.8 1014.1 230.0 1020.7 225.5 1027.5 221.5 1034.3 217.9 1041.4 214.7 1048.5 212.1 1055.7 209.8 1062.9 208.1 1070.2 206.8 1077.6 206.0 1084.9 205.6 1092.2 205.8 1099.5 206.4 1106.7 207.5 1113.8 209.1 1120.9 211.1 1127.8 213.6 1134.6 216.6 1141.3 220.0 1147.7 223.9 1154.0 228.1 1160.1 232.8 1166.0 237.9 1171.6 243.4 1176.9 249.3 1182.0 255.6 1186.8 262.1 1191.4 269.0 1195.6 276.2 1199.4 283.7 1203.0 291.5 1206.2 299.5 1209.1 307.7 1211.6 316.2 1213.7 324.8 1215.5 333.5 1216.9 342.4 1217.9 351.4 1218.6 360.5 1218.8 369.6 1218.7 378.7 1218.2 387.9Z M1227.7 398.2 1226.2 408.4 1224.4 418.5 1222.1 428.5 1219.5 438.3 1216.4 448.0 1212.9 457.5 1209.1 466.8 1204.8 475.9 1200.2 484.7 1195.3 493.2 1190.0 501.4 1184.4 509.2 1178.5 516.7 1172.3 523.9 1165.9 530.6 1159.2 536.9 1152.2 542.8 1145.0 548.3 1137.7 553.3 1130.1 557.8 1122.4 561.8 1114.5 565.3 1106.6 568.3 1098.5 570.8 1090.4 572.8 1082.2 574.2 1074.0 575.2 1065.8 575.5 1057.6 575.4 1049.5 574.7 1041.4 573.4 1033.4 571.7 1025.5 569.4 1017.8 566.6 1010.2 563.3 1002.7 559.4 995.5 555.1 988.5 550.3 981.7 545.1 975.1 539.4 968.8 533.2 962.8 526.6 957.1 519.7 951.8 512.3 946.7 504.6 942.0 496.5 937.7 488.1 933.7 479.4 930.1 470.5 926.9 461.3 924.1 451.9 921.7 442.2 919.7 432.4 918.1 422.5 917.0 412.4 916.3 402.3 916.0 392.1 916.1 381.8 916.7 371.6 917.7 361.4 919.1 351.2 921.0 341.1 923.2 331.1 925.9 321.2 929.0 311.5 932.4 302.0 936.3 292.7 940.5 283.7 945.1 274.9 950.0 266.4 955.3 258.2 960.9 250.3 966.8 242.8 973.0 235.7 979.5 228.9 986.2 222.6 993.1 216.7 1000.3 211.3 1007.7 206.3 1015.3 201.8 1023.0 197.8 1030.8 194.2 1038.8 191.2 1046.8 188.7 1054.9 186.8 1063.1 185.3 1071.3 184.4 1079.5 184.0 1087.7 184.2 1095.8 184.9 1103.9 186.1 1111.9 187.9 1119.8 190.2 1127.6 193.0 1135.2 196.3 1142.6 200.1 1149.8 204.4 1156.9 209.2 1163.7 214.5 1170.2 220.2 1176.5 226.4 1182.5 232.9 1188.2 239.9 1193.6 247.3 1198.6 255.0 1203.4 263.1 1207.7 271.4 1211.7 280.1 1215.3 289.1 1218.5 298.3 1221.3 307.7 1223.7 317.3 1225.7 327.1 1227.2 337.1 1228.4 347.1 1229.1 357.3 1229.4 367.5 1229.2 377.7 1228.7 388.0Z M1232.5 398.7 1230.9 409.7 1228.9 420.6 1226.5 431.4 1223.6 442.0 1220.3 452.5 1216.5 462.8 1212.4 472.8 1207.8 482.6 1202.9 492.1 1197.5 501.3 1191.8 510.1 1185.8 518.6 1179.4 526.7 1172.7 534.4 1165.7 541.7 1158.5 548.5 1151.0 554.9 1143.2 560.8 1135.3 566.2 1127.1 571.0 1118.8 575.4 1110.3 579.2 1101.7 582.4 1093.0 585.1 1084.2 587.3 1075.4 588.8 1066.6 589.8 1057.7 590.2 1048.9 590.0 1040.1 589.3 1031.3 588.0 1022.7 586.1 1014.2 583.6 1005.8 580.6 997.6 577.0 989.6 572.8 981.7 568.2 974.1 563.0 966.8 557.3 959.7 551.2 952.9 544.5 946.5 537.4 940.3 529.9 934.5 521.9 929.0 513.6 924.0 504.9 919.3 495.8 915.0 486.4 911.1 476.8 907.6 466.8 904.6 456.6 902.0 446.2 899.9 435.7 898.2 424.9 896.9 414.1 896.2 403.1 895.9 392.1 896.0 381.0 896.6 370.0 897.7 358.9 899.2 347.9 901.2 337.0 903.7 326.2 906.6 315.6 909.9 305.1 913.6 294.8 917.8 284.8 922.4 275.0 927.3 265.5 932.6 256.3 938.3 247.5 944.4 239.0 950.8 230.9 957.4 223.2 964.4 215.9 971.7 209.1 979.2 202.7 986.9 196.8 994.9 191.4 1003.1 186.6 1011.4 182.2 1019.9 178.4 1028.5 175.2 1037.2 172.5 1045.9 170.3 1054.8 168.8 1063.6 167.8 1072.5 167.4 1081.3 167.6 1090.1 168.3 1098.8 169.6 1107.5 171.6 1116.0 174.0 1124.4 177.1 1132.6 180.6 1140.6 184.8 1148.4 189.4 1156.0 194.6 1163.4 200.3 1170.4 206.5 1177.2 213.1 1183.7 220.2 1189.9 227.7 1195.7 235.7 1201.1 244.0 1206.2 252.7 1210.9 261.8 1215.2 271.2 1219.1 280.8 1222.6 290.8 1225.6 301.0 1228.2 311.4 1230.3 321.9 1232.0 332.7 1233.2 343.5 1234.0 354.5 1234.3 365.5 1234.2 376.6 1233.5 387.7Z M1231.0 398.4 1229.4 409.9 1227.3 421.3 1224.7 432.5 1221.7 443.6 1218.3 454.6 1214.3 465.3 1210.0 475.8 1205.2 486.0 1200.1 495.9 1194.5 505.5 1188.6 514.7 1182.3 523.6 1175.6 532.0 1168.6 540.1 1161.3 547.7 1153.8 554.8 1145.9 561.4 1137.8 567.6 1129.5 573.2 1121.0 578.3 1112.3 582.8 1103.5 586.8 1094.5 590.2 1085.5 593.0 1076.3 595.2 1067.1 596.8 1057.9 597.8 1048.6 598.3 1039.4 598.1 1030.2 597.3 1021.1 595.9 1012.1 593.9 1003.2 591.4 994.5 588.2 985.9 584.4 977.5 580.1 969.4 575.3 961.4 569.9 953.8 563.9 946.4 557.5 939.3 550.6 932.5 543.2 926.1 535.3 920.1 527.0 914.4 518.3 909.1 509.2 904.2 499.8 899.7 490.0 895.6 479.9 892.0 469.5 888.9 458.9 886.2 448.0 883.9 437.0 882.2 425.8 880.9 414.5 880.1 403.0 879.7 391.5 879.9 380.0 880.6 368.4 881.7 356.9 883.3 345.5 885.4 334.1 887.9 322.8 890.9 311.7 894.4 300.8 898.3 290.1 902.6 279.6 907.4 269.4 912.6 259.5 918.1 249.9 924.1 240.7 930.4 231.8 937.0 223.3 944.0 215.3 951.3 207.7 958.9 200.6 966.7 193.9 974.8 187.8 983.1 182.2 991.6 177.1 1000.3 172.6 1009.1 168.6 1018.1 165.2 1027.2 162.4 1036.3 160.2 1045.6 158.5 1054.8 157.5 1064.0 157.1 1073.3 157.3 1082.4 158.1 1091.5 159.4 1100.5 161.4 1109.4 164.0 1118.2 167.2 1126.7 170.9 1135.1 175.2 1143.3 180.1 1151.2 185.5 1158.9 191.4 1166.3 197.9 1173.3 204.8 1180.1 212.2 1186.5 220.1 1192.6 228.4 1198.3 237.1 1203.6 246.2 1208.5 255.6 1213.0 265.4 1217.0 275.5 1220.6 285.8 1223.8 296.5 1226.5 307.3 1228.7 318.4 1230.5 329.6 1231.8 340.9 1232.6 352.3 1232.9 363.8 1232.7 375.4 1232.1 386.9Z M1091.5 382.2 1083.4 382.4 1075.5 382.5 1067.7 382.6 1060.1 382.7 1052.6 382.8 1045.3 382.8 1038.2 382.8 1031.2 382.7 1024.3 382.7 1017.6 382.6 1011.0 382.5 1004.6 382.4 998.3 382.3 992.2 382.2 986.2 382.1 980.4 382.0 974.7 381.8 969.1 381.7 963.7 381.6 958.4 381.4 953.3 381.3 948.4 381.1 943.5 381.0 938.8 380.8 934.3 380.6 929.9 380.5 925.6 380.3 921.5 380.1 917.5 380.0 913.7 379.8 910.0 379.6 906.4 379.5 903.0 379.3 899.7 379.1 896.6 378.9 893.5 378.7 890.6 378.6 887.9 378.4 885.2 378.2 882.7 378.0 880.2 377.8 877.9 377.3 875.7 376.7 873.6 376.3 871.5 375.9 869.5 375.5 867.5 375.2 865.2 374.9 M1091.5 382.2 1084.8 376.9 1078.3 371.7 1071.9 366.6 1065.7 361.6 1059.5 356.8 1053.5 352.0 1047.6 347.4 1041.9 342.9 1036.2 338.5 1030.6 334.2 1025.2 330.1 1019.9 326.0 1014.7 322.1 1009.6 318.3 1004.6 314.6 999.7 311.1 994.9 307.7 990.3 304.3 985.7 301.2 981.3 298.1 976.9 295.1 972.7 292.3 968.6 289.6 964.6 287.0 960.7 284.5 956.9 282.1 953.2 279.9 949.7 277.7 946.2 275.7 942.8 273.8 939.6 272.0 936.5 270.3 933.4 268.7 930.5 267.2 927.7 265.9 924.9 264.6 922.3 263.4 919.8 262.3 917.3 261.4 915.0 260.5 912.7 259.7 910.7 258.8 908.6 258.0 906.7 257.3 904.7 256.7 902.8 256.3 900.8 255.9 898.5 255.6 M1091.5 382.2 1088.3 373.1 1085.1 364.3 1082.1 355.6 1079.2 347.1 1076.3 338.8 1073.5 330.7 1070.7 322.8 1068.0 315.1 1065.4 307.7 1062.8 300.4 1060.2 293.3 1057.6 286.5 1055.1 279.8 1052.6 273.4 1050.1 267.2 1047.7 261.1 1045.3 255.3 1042.9 249.8 1040.5 244.4 1038.1 239.2 1035.8 234.2 1033.5 229.5 1031.2 224.9 1028.9 220.6 1026.7 216.4 1024.5 212.5 1022.3 208.7 1020.1 205.2 1018.0 201.8 1015.8 198.7 1013.7 195.7 1011.7 192.9 1009.6 190.3 1007.6 187.9 1005.6 185.7 1003.6 183.6 1001.7 181.8 999.8 180.0 997.9 178.5 996.0 177.1 994.2 175.9 993.0 174.5 991.8 173.3 990.4 172.3 989.0 171.4 987.3 170.8 985.5 170.3 983.3 170.0 M1091.5 382.2 1092.2 372.1 1093.1 362.2 1094.1 352.6 1095.2 343.3 1096.3 334.2 1097.5 325.4 1098.6 316.8 1099.8 308.5 1101.0 300.5 1102.1 292.7 1103.2 285.1 1104.2 277.8 1105.1 270.8 1106.0 263.9 1106.8 257.3 1107.5 251.0 1108.1 244.8 1108.7 238.9 1109.1 233.2 1109.5 227.7 1109.7 222.5 1109.9 217.5 1110.0 212.7 1109.9 208.1 1109.8 203.7 1109.6 199.5 1109.3 195.5 1109.0 191.8 1108.5 188.2 1107.9 184.8 1107.3 181.7 1106.6 178.7 1105.8 176.0 1105.0 173.4 1104.0 171.0 1103.0 168.9 1102.0 166.9 1100.8 165.1 1099.6 163.4 1098.4 162.0 1097.0 160.7 1097.6 160.0 1098.0 159.5 1097.9 159.1 1097.4 158.7 1096.3 158.4 1094.9 158.1 1092.7 157.8 M1091.5 382.2 1096.0 373.5 1100.6 365.2 1105.4 357.4 1110.1 349.9 1114.9 342.8 1119.6 336.0 1124.2 329.6 1128.8 323.4 1133.3 317.5 1137.6 311.9 1141.8 306.6 1145.9 301.4 1149.7 296.5 1153.5 291.7 1157.0 287.2 1160.4 282.8 1163.5 278.6 1166.5 274.6 1169.3 270.7 1171.9 267.0 1174.3 263.4 1176.6 259.9 1178.6 256.6 1180.5 253.5 1182.1 250.4 1183.6 247.5 1184.9 244.7 1186.1 242.1 1187.0 239.6 1187.8 237.2 1188.4 234.9 1188.9 232.8 1189.2 230.8 1189.3 229.0 1189.3 227.2 1189.1 225.6 1188.8 224.1 1188.3 222.8 1187.7 221.5 1187.0 220.4 1186.1 219.5 1187.3 221.6 1188.2 223.6 1188.5 225.3 1188.3 226.4 1187.4 227.1 1186.0 227.4 1183.9 227.3 M1091.5 382.2 1099.1 378.2 1106.5 374.5 1113.8 371.0 1120.9 367.9 1127.7 365.0 1134.4 362.3 1140.8 359.8 1147.1 357.5 1153.1 355.3 1158.8 353.2 1164.4 351.3 1169.7 349.5 1174.7 347.7 1179.6 346.1 1184.2 344.5 1188.5 343.0 1192.7 341.5 1196.6 340.1 1200.3 338.8 1203.7 337.4 1207.0 336.2 1210.0 335.0 1212.8 333.8 1215.4 332.6 1217.8 331.5 1219.9 330.4 1221.9 329.4 1223.6 328.4 1225.2 327.4 1226.5 326.5 1227.7 325.6 1228.6 324.7 1229.4 323.9 1229.9 323.1 1230.3 322.4 1230.5 321.7 1230.6 321.0 1230.4 320.4 1230.1 319.9 1229.6 319.3 1228.9 318.8 1228.5 320.8 1227.8 322.7 1226.9 324.1 1225.7 325.1 1224.3 325.7 1222.6 325.9 1220.4 325.8 M1091.5 382.2 1099.1 385.0 1106.6 387.7 1113.8 390.3 1120.8 392.8 1127.5 395.1 1134.1 397.4 1140.3 399.6 1146.4 401.7 1152.2 403.7 1157.8 405.7 1163.1 407.5 1168.2 409.3 1173.1 411.0 1177.8 412.7 1182.2 414.2 1186.4 415.7 1190.3 417.2 1194.1 418.5 1197.6 419.9 1200.9 421.1 1204.0 422.3 1206.9 423.4 1209.6 424.5 1212.0 425.5 1214.3 426.4 1216.3 427.3 1218.2 428.1 1219.9 428.9 1221.3 429.6 1222.6 430.3 1223.6 430.9 1224.5 431.4 1225.2 431.9 1225.8 432.4 1226.1 432.8 1226.2 433.1 1226.2 433.4 1226.0 433.6 1225.7 433.8 1225.1 433.9 1224.4 434.0 1223.7 433.7 1222.7 433.3 1221.6 432.9 1220.3 432.6 1218.7 432.3 1217.0 432.0 1214.7 431.7 M1091.5 382.2 1096.1 390.2 1100.7 397.9 1105.3 405.2 1109.8 412.2 1114.2 419.0 1118.6 425.4 1122.8 431.6 1126.9 437.5 1130.9 443.2 1134.8 448.6 1138.5 453.9 1142.1 458.9 1145.5 463.7 1148.7 468.3 1151.8 472.7 1154.7 477.0 1157.4 481.1 1159.9 485.0 1162.3 488.7 1164.5 492.3 1166.6 495.8 1168.4 499.0 1170.1 502.1 1171.7 505.1 1173.0 507.9 1174.2 510.6 1175.3 513.1 1176.2 515.5 1176.9 517.7 1177.5 519.8 1177.9 521.8 1178.2 523.6 1178.3 525.2 1178.3 526.7 1178.1 528.1 1177.8 529.4 1177.4 530.5 1176.9 531.4 1176.2 532.3 1175.3 533.0 1174.4 533.6 1174.7 532.4 1174.7 531.1 1174.4 530.1 1173.7 529.3 1172.5 528.6 1171.0 528.2 1168.8 527.8 M1091.5 382.2 1091.8 392.3 1092.2 402.1 1092.6 411.6 1093.2 420.9 1093.7 429.9 1094.2 438.6 1094.8 447.1 1095.3 455.3 1095.8 463.2 1096.2 470.9 1096.6 478.3 1097.0 485.5 1097.3 492.4 1097.6 499.1 1097.7 505.5 1097.9 511.7 1097.9 517.6 1097.9 523.3 1097.8 528.8 1097.6 534.1 1097.4 539.1 1097.1 543.9 1096.7 548.4 1096.3 552.8 1095.8 556.9 1095.2 560.8 1094.5 564.5 1093.8 568.0 1093.0 571.2 1092.2 574.2 1091.3 577.1 1090.4 579.7 1089.4 582.1 1088.3 584.3 1087.2 586.4 1086.0 588.2 1084.8 589.8 1083.5 591.3 1082.2 592.5 1080.8 593.6 1079.4 594.5 1079.2 594.9 1078.9 595.1 1078.3 595.2 1077.4 595.3 1076.1 595.2 1074.4 595.0 1072.2 594.8 M1091.5 382.2 1087.3 391.1 1083.1 399.8 1079.1 408.3 1075.1 416.6 1071.2 424.6 1067.4 432.5 1063.7 440.1 1060.0 447.5 1056.4 454.7 1052.9 461.7 1049.4 468.5 1045.9 475.0 1042.5 481.3 1039.2 487.4 1035.9 493.3 1032.7 499.0 1029.5 504.4 1026.3 509.6 1023.2 514.7 1020.2 519.5 1017.2 524.1 1014.3 528.4 1011.4 532.6 1008.6 536.6 1005.8 540.3 1003.1 543.9 1000.4 547.3 997.8 550.4 995.2 553.4 992.7 556.1 990.2 558.7 987.8 561.1 985.4 563.3 983.1 565.3 980.8 567.1 978.6 568.8 976.5 570.2 974.4 571.5 972.3 572.6 970.3 573.6 968.3 574.4 966.7 575.2 965.1 575.9 963.4 576.4 961.7 576.7 959.9 576.8 958.0 576.7 955.7 576.5 M1091.5 382.2 1084.4 387.6 1077.5 392.9 1070.7 398.1 1064.1 403.1 1057.6 408.0 1051.2 412.7 1044.9 417.3 1038.7 421.8 1032.7 426.1 1026.8 430.3 1021.0 434.3 1015.3 438.2 1009.8 442.0 1004.3 445.6 999.0 449.1 993.8 452.4 988.8 455.7 983.8 458.8 979.0 461.7 974.3 464.6 969.7 467.3 965.2 469.8 960.9 472.3 956.7 474.6 952.6 476.8 948.6 478.9 944.7 480.9 941.0 482.7 937.4 484.4 933.9 486.0 930.5 487.5 927.2 488.8 924.1 490.1 921.0 491.2 918.1 492.3 915.3 493.2 912.6 494.0 909.9 494.7 907.4 495.3 905.0 495.8 902.7 496.2 900.5 496.5 898.3 496.7 896.3 496.8 894.2 496.8 892.2 496.7 890.2 496.6 887.9 496.3" stroke="#050500" stroke-width="1.45" stroke-dasharray="4 2.6"/>
</g>
<g clip-path="url(#hidclip)" fill="none">
<path d="M1108.1 384.2 1107.9 385.3 1107.7 386.3 1107.5 387.4 1107.2 388.5 1106.9 389.5 1106.5 390.5 1106.1 391.5 1105.6 392.5 1105.2 393.5 1104.6 394.4 1104.1 395.3 1103.5 396.1 1102.8 396.9 1102.2 397.7 1101.5 398.4 1100.7 399.1 1100.0 399.7 1099.2 400.3 1098.4 400.8 1097.6 401.3 1096.8 401.7 1095.9 402.1 1095.1 402.4 1094.2 402.7 1093.4 402.9 1092.5 403.1 1091.6 403.2 1090.7 403.2 1089.8 403.2 1089.0 403.1 1088.1 403.0 1087.2 402.8 1086.4 402.6 1085.6 402.3 1084.7 401.9 1083.9 401.5 1083.2 401.0 1082.4 400.5 1081.7 400.0 1081.0 399.3 1080.3 398.7 1079.6 398.0 1079.0 397.2 1078.5 396.4 1077.9 395.6 1077.4 394.7 1076.9 393.8 1076.5 392.9 1076.1 391.9 1075.8 390.9 1075.5 389.9 1075.2 388.9 1075.0 387.8 1074.8 386.8 1074.7 385.7 1074.6 384.6 1074.6 383.5 1074.6 382.4 1074.7 381.3 1074.8 380.2 1075.0 379.1 1075.2 378.0 1075.4 377.0 1075.7 375.9 1076.0 374.9 1076.4 373.8 1076.8 372.8 1077.3 371.9 1077.7 370.9 1078.3 370.0 1078.8 369.1 1079.4 368.3 1080.1 367.5 1080.7 366.7 1081.4 366.0 1082.2 365.3 1082.9 364.7 1083.7 364.1 1084.5 363.6 1085.3 363.1 1086.1 362.6 1087.0 362.3 1087.8 361.9 1088.7 361.7 1089.5 361.5 1090.4 361.3 1091.3 361.2 1092.2 361.2 1093.1 361.2 1093.9 361.3 1094.8 361.4 1095.7 361.6 1096.5 361.8 1097.3 362.1 1098.2 362.5 1099.0 362.9 1099.7 363.4 1100.5 363.9 1101.2 364.4 1101.9 365.1 1102.6 365.7 1103.2 366.4 1103.9 367.2 1104.4 368.0 1105.0 368.8 1105.5 369.7 1106.0 370.6 1106.4 371.5 1106.8 372.4 1107.1 373.4 1107.4 374.5 1107.7 375.5 1107.9 376.5 1108.1 377.6 1108.2 378.7 1108.3 379.8 1108.3 380.9 1108.3 382.0 1108.2 383.1Z M1127.6 386.5 1127.3 388.9 1126.8 391.3 1126.3 393.6 1125.7 395.9 1125.0 398.2 1124.1 400.5 1123.2 402.6 1122.2 404.8 1121.2 406.8 1120.0 408.9 1118.8 410.8 1117.4 412.6 1116.1 414.4 1114.6 416.1 1113.1 417.7 1111.5 419.2 1109.9 420.5 1108.2 421.8 1106.4 423.0 1104.7 424.1 1102.8 425.0 1101.0 425.8 1099.1 426.5 1097.2 427.1 1095.3 427.6 1093.4 427.9 1091.5 428.2 1089.5 428.2 1087.6 428.2 1085.7 428.0 1083.8 427.7 1081.9 427.3 1080.0 426.8 1078.2 426.1 1076.4 425.4 1074.7 424.5 1073.0 423.4 1071.3 422.3 1069.7 421.1 1068.2 419.7 1066.7 418.3 1065.3 416.7 1063.9 415.1 1062.7 413.3 1061.5 411.5 1060.4 409.6 1059.3 407.7 1058.4 405.6 1057.6 403.5 1056.8 401.3 1056.1 399.1 1055.6 396.9 1055.1 394.5 1054.7 392.2 1054.5 389.8 1054.3 387.5 1054.2 385.0 1054.3 382.6 1054.4 380.2 1054.6 377.8 1055.0 375.4 1055.4 373.0 1055.9 370.7 1056.6 368.4 1057.3 366.1 1058.1 363.8 1059.0 361.7 1060.0 359.5 1061.1 357.5 1062.3 355.5 1063.5 353.5 1064.8 351.7 1066.2 349.9 1067.7 348.2 1069.2 346.6 1070.8 345.2 1072.4 343.8 1074.1 342.5 1075.8 341.3 1077.6 340.2 1079.4 339.3 1081.3 338.5 1083.1 337.8 1085.0 337.2 1087.0 336.7 1088.9 336.4 1090.8 336.2 1092.7 336.1 1094.7 336.1 1096.6 336.3 1098.5 336.6 1100.4 337.0 1102.2 337.5 1104.1 338.2 1105.8 339.0 1107.6 339.9 1109.3 340.9 1111.0 342.0 1112.6 343.2 1114.1 344.6 1115.6 346.0 1117.0 347.6 1118.3 349.2 1119.6 351.0 1120.8 352.8 1121.9 354.7 1122.9 356.6 1123.9 358.7 1124.7 360.8 1125.5 363.0 1126.1 365.2 1126.7 367.5 1127.1 369.8 1127.5 372.1 1127.8 374.5 1128.0 376.9 1128.0 379.3 1128.0 381.7 1127.9 384.1Z M1147.4 388.8 1146.9 392.6 1146.2 396.3 1145.4 400.0 1144.4 403.6 1143.2 407.2 1142.0 410.7 1140.5 414.1 1139.0 417.4 1137.3 420.7 1135.5 423.8 1133.5 426.8 1131.5 429.7 1129.3 432.5 1127.0 435.1 1124.7 437.6 1122.2 439.9 1119.6 442.1 1117.0 444.1 1114.3 445.9 1111.5 447.6 1108.7 449.0 1105.8 450.3 1102.8 451.4 1099.9 452.4 1096.9 453.1 1093.9 453.6 1090.9 454.0 1087.8 454.1 1084.8 454.0 1081.8 453.8 1078.9 453.3 1075.9 452.7 1073.0 451.8 1070.2 450.8 1067.4 449.6 1064.6 448.2 1062.0 446.6 1059.4 444.8 1056.9 442.9 1054.5 440.8 1052.1 438.5 1049.9 436.1 1047.8 433.5 1045.9 430.8 1044.0 428.0 1042.3 425.0 1040.7 421.9 1039.2 418.7 1037.9 415.4 1036.7 412.0 1035.7 408.6 1034.8 405.0 1034.1 401.4 1033.5 397.8 1033.1 394.1 1032.8 390.3 1032.7 386.6 1032.7 382.8 1033.0 379.0 1033.3 375.3 1033.9 371.5 1034.5 367.8 1035.4 364.1 1036.3 360.5 1037.5 356.9 1038.8 353.4 1040.2 350.0 1041.7 346.7 1043.4 343.5 1045.2 340.3 1047.2 337.3 1049.2 334.4 1051.4 331.6 1053.7 329.0 1056.1 326.5 1058.5 324.2 1061.1 322.0 1063.7 320.0 1066.4 318.2 1069.2 316.6 1072.1 315.1 1075.0 313.8 1077.9 312.7 1080.8 311.7 1083.8 311.0 1086.8 310.5 1089.9 310.2 1092.9 310.0 1095.9 310.1 1098.9 310.3 1101.9 310.8 1104.8 311.4 1107.7 312.3 1110.6 313.3 1113.4 314.5 1116.1 315.9 1118.8 317.5 1121.3 319.3 1123.8 321.2 1126.3 323.3 1128.6 325.6 1130.8 328.0 1132.9 330.6 1134.9 333.3 1136.7 336.1 1138.4 339.1 1140.0 342.2 1141.5 345.4 1142.8 348.7 1144.0 352.1 1145.0 355.5 1145.9 359.1 1146.7 362.7 1147.2 366.3 1147.7 370.0 1147.9 373.8 1148.0 377.5 1148.0 381.3 1147.8 385.1Z M1167.9 391.2 1167.1 396.4 1166.2 401.6 1165.0 406.7 1163.7 411.7 1162.1 416.6 1160.3 421.5 1158.4 426.2 1156.2 430.8 1153.9 435.3 1151.4 439.7 1148.7 443.8 1145.8 447.8 1142.8 451.7 1139.7 455.3 1136.4 458.7 1132.9 462.0 1129.4 465.0 1125.7 467.7 1122.0 470.3 1118.1 472.6 1114.2 474.6 1110.2 476.4 1106.1 478.0 1102.0 479.2 1097.9 480.2 1093.7 481.0 1089.6 481.4 1085.4 481.6 1081.2 481.6 1077.1 481.2 1072.9 480.6 1068.9 479.7 1064.8 478.5 1060.9 477.1 1057.0 475.4 1053.2 473.4 1049.5 471.2 1045.9 468.8 1042.5 466.1 1039.1 463.2 1035.9 460.1 1032.9 456.7 1030.0 453.2 1027.2 449.4 1024.7 445.5 1022.3 441.4 1020.0 437.1 1018.0 432.7 1016.2 428.1 1014.5 423.4 1013.1 418.6 1011.9 413.7 1010.9 408.7 1010.1 403.6 1009.5 398.5 1009.1 393.3 1009.0 388.1 1009.1 382.9 1009.4 377.7 1009.9 372.5 1010.6 367.3 1011.5 362.1 1012.7 357.0 1014.0 352.0 1015.6 347.1 1017.4 342.2 1019.3 337.5 1021.5 332.9 1023.8 328.4 1026.4 324.1 1029.0 319.9 1031.9 315.9 1034.9 312.0 1038.1 308.4 1041.4 305.0 1044.8 301.8 1048.3 298.7 1052.0 296.0 1055.7 293.4 1059.6 291.1 1063.5 289.1 1067.5 287.3 1071.6 285.8 1075.7 284.5 1079.8 283.5 1084.0 282.7 1088.2 282.3 1092.4 282.1 1096.5 282.2 1100.7 282.5 1104.8 283.1 1108.9 284.0 1112.9 285.2 1116.8 286.6 1120.7 288.3 1124.5 290.3 1128.2 292.5 1131.8 294.9 1135.2 297.6 1138.6 300.5 1141.8 303.7 1144.9 307.0 1147.8 310.6 1150.5 314.3 1153.1 318.3 1155.5 322.4 1157.7 326.6 1159.7 331.1 1161.5 335.6 1163.2 340.3 1164.6 345.1 1165.8 350.0 1166.8 355.0 1167.6 360.1 1168.2 365.2 1168.6 370.4 1168.7 375.6 1168.7 380.8 1168.4 386.0Z M1186.9 393.5 1186.0 400.1 1184.8 406.6 1183.3 413.1 1181.6 419.5 1179.6 425.8 1177.4 431.9 1174.9 438.0 1172.1 443.8 1169.2 449.5 1166.0 455.0 1162.6 460.4 1158.9 465.4 1155.1 470.3 1151.1 474.9 1146.9 479.3 1142.5 483.4 1138.0 487.2 1133.4 490.7 1128.6 494.0 1123.7 496.9 1118.7 499.5 1113.6 501.8 1108.5 503.7 1103.3 505.4 1098.0 506.6 1092.7 507.6 1087.4 508.2 1082.1 508.4 1076.8 508.3 1071.5 507.9 1066.3 507.1 1061.1 505.9 1056.0 504.4 1050.9 502.6 1046.0 500.5 1041.2 498.0 1036.5 495.2 1031.9 492.1 1027.5 488.7 1023.3 485.0 1019.2 481.0 1015.3 476.7 1011.6 472.2 1008.2 467.4 1004.9 462.4 1001.8 457.2 999.0 451.8 996.4 446.1 994.1 440.3 992.0 434.4 990.2 428.3 988.7 422.0 987.4 415.7 986.4 409.2 985.6 402.7 985.2 396.1 985.0 389.5 985.1 382.9 985.4 376.2 986.1 369.6 987.0 363.0 988.2 356.5 989.7 350.0 991.4 343.6 993.4 337.3 995.6 331.2 998.1 325.2 1000.9 319.3 1003.8 313.6 1007.0 308.1 1010.5 302.8 1014.1 297.7 1017.9 292.8 1021.9 288.2 1026.1 283.8 1030.5 279.7 1035.0 275.9 1039.6 272.4 1044.4 269.1 1049.3 266.2 1054.3 263.6 1059.4 261.3 1064.5 259.4 1069.8 257.8 1075.0 256.5 1080.3 255.5 1085.6 255.0 1090.9 254.7 1096.2 254.8 1101.5 255.3 1106.8 256.1 1111.9 257.2 1117.0 258.7 1122.1 260.5 1127.0 262.7 1131.8 265.1 1136.5 267.9 1141.1 271.0 1145.5 274.4 1149.7 278.2 1153.8 282.1 1157.7 286.4 1161.4 290.9 1164.9 295.7 1168.1 300.7 1171.2 305.9 1174.0 311.4 1176.6 317.0 1178.9 322.8 1181.0 328.7 1182.8 334.9 1184.4 341.1 1185.6 347.4 1186.7 353.9 1187.4 360.4 1187.9 367.0 1188.0 373.6 1188.0 380.2 1187.6 386.9Z M1204.1 395.5 1202.9 403.4 1201.5 411.3 1199.7 419.1 1197.6 426.8 1195.3 434.4 1192.5 441.8 1189.5 449.1 1186.2 456.1 1182.7 463.0 1178.8 469.6 1174.7 476.0 1170.3 482.2 1165.7 488.0 1160.9 493.6 1155.8 498.9 1150.6 503.8 1145.2 508.4 1139.6 512.6 1133.8 516.5 1127.9 520.1 1121.9 523.2 1115.8 525.9 1109.5 528.3 1103.3 530.2 1096.9 531.8 1090.5 532.9 1084.1 533.6 1077.7 533.9 1071.4 533.8 1065.0 533.2 1058.7 532.3 1052.4 530.9 1046.3 529.1 1040.2 526.9 1034.3 524.3 1028.5 521.4 1022.8 518.0 1017.4 514.2 1012.0 510.1 1006.9 505.7 1002.0 500.9 997.3 495.7 992.9 490.3 988.7 484.6 984.8 478.5 981.1 472.2 977.7 465.7 974.6 458.9 971.8 451.9 969.3 444.7 967.1 437.4 965.2 429.9 963.7 422.2 962.4 414.5 961.5 406.6 961.0 398.7 960.8 390.7 960.9 382.7 961.3 374.7 962.1 366.7 963.2 358.8 964.7 350.9 966.4 343.1 968.5 335.4 970.9 327.9 973.6 320.4 976.6 313.2 979.9 306.1 983.5 299.2 987.4 292.6 991.5 286.2 995.8 280.1 1000.4 274.2 1005.3 268.6 1010.3 263.4 1015.6 258.4 1021.0 253.8 1026.6 249.6 1032.4 245.7 1038.3 242.2 1044.3 239.0 1050.4 236.3 1056.6 233.9 1062.9 232.0 1069.2 230.4 1075.6 229.3 1082.0 228.6 1088.4 228.3 1094.8 228.4 1101.2 229.0 1107.5 229.9 1113.7 231.3 1119.9 233.1 1125.9 235.3 1131.9 237.9 1137.7 240.9 1143.3 244.2 1148.8 248.0 1154.1 252.1 1159.2 256.6 1164.1 261.4 1168.8 266.5 1173.3 271.9 1177.5 277.7 1181.4 283.7 1185.1 290.0 1188.5 296.6 1191.6 303.3 1194.4 310.3 1196.9 317.5 1199.1 324.9 1201.0 332.4 1202.5 340.0 1203.7 347.8 1204.6 355.6 1205.2 363.6 1205.4 371.5 1205.3 379.5 1204.8 387.5Z M1217.3 397.0 1216.0 406.1 1214.4 415.1 1212.3 424.1 1210.0 432.9 1207.2 441.5 1204.1 450.0 1200.7 458.4 1196.9 466.5 1192.8 474.3 1188.4 481.9 1183.7 489.2 1178.7 496.3 1173.4 503.0 1167.9 509.3 1162.1 515.4 1156.1 521.0 1149.8 526.3 1143.4 531.2 1136.8 535.6 1130.1 539.6 1123.2 543.2 1116.2 546.4 1109.1 549.1 1101.9 551.3 1094.6 553.1 1087.3 554.4 1080.0 555.2 1072.7 555.5 1065.3 555.4 1058.1 554.7 1050.8 553.6 1043.7 552.1 1036.7 550.0 1029.7 547.5 1022.9 544.6 1016.3 541.1 1009.8 537.3 1003.5 533.0 997.4 528.3 991.6 523.2 986.0 517.7 980.6 511.8 975.5 505.6 970.7 499.0 966.2 492.1 962.0 484.9 958.1 477.4 954.5 469.6 951.3 461.6 948.5 453.4 946.0 445.0 943.8 436.4 942.0 427.6 940.6 418.7 939.6 409.7 939.0 400.7 938.7 391.6 938.9 382.4 939.4 373.2 940.3 364.1 941.5 355.0 943.2 346.0 945.2 337.1 947.6 328.2 950.3 319.6 953.4 311.1 956.9 302.8 960.7 294.7 964.8 286.8 969.2 279.2 973.9 271.9 978.9 264.9 984.2 258.2 989.7 251.8 995.5 245.8 1001.5 240.1 1007.7 234.8 1014.1 230.0 1020.7 225.5 1027.5 221.5 1034.3 217.9 1041.4 214.7 1048.5 212.1 1055.7 209.8 1062.9 208.1 1070.2 206.8 1077.6 206.0 1084.9 205.6 1092.2 205.8 1099.5 206.4 1106.7 207.5 1113.8 209.1 1120.9 211.1 1127.8 213.6 1134.6 216.6 1141.3 220.0 1147.7 223.9 1154.0 228.1 1160.1 232.8 1166.0 237.9 1171.6 243.4 1176.9 249.3 1182.0 255.6 1186.8 262.1 1191.4 269.0 1195.6 276.2 1199.4 283.7 1203.0 291.5 1206.2 299.5 1209.1 307.7 1211.6 316.2 1213.7 324.8 1215.5 333.5 1216.9 342.4 1217.9 351.4 1218.6 360.5 1218.8 369.6 1218.7 378.7 1218.2 387.9Z M1227.7 398.2 1226.2 408.4 1224.4 418.5 1222.1 428.5 1219.5 438.3 1216.4 448.0 1212.9 457.5 1209.1 466.8 1204.8 475.9 1200.2 484.7 1195.3 493.2 1190.0 501.4 1184.4 509.2 1178.5 516.7 1172.3 523.9 1165.9 530.6 1159.2 536.9 1152.2 542.8 1145.0 548.3 1137.7 553.3 1130.1 557.8 1122.4 561.8 1114.5 565.3 1106.6 568.3 1098.5 570.8 1090.4 572.8 1082.2 574.2 1074.0 575.2 1065.8 575.5 1057.6 575.4 1049.5 574.7 1041.4 573.4 1033.4 571.7 1025.5 569.4 1017.8 566.6 1010.2 563.3 1002.7 559.4 995.5 555.1 988.5 550.3 981.7 545.1 975.1 539.4 968.8 533.2 962.8 526.6 957.1 519.7 951.8 512.3 946.7 504.6 942.0 496.5 937.7 488.1 933.7 479.4 930.1 470.5 926.9 461.3 924.1 451.9 921.7 442.2 919.7 432.4 918.1 422.5 917.0 412.4 916.3 402.3 916.0 392.1 916.1 381.8 916.7 371.6 917.7 361.4 919.1 351.2 921.0 341.1 923.2 331.1 925.9 321.2 929.0 311.5 932.4 302.0 936.3 292.7 940.5 283.7 945.1 274.9 950.0 266.4 955.3 258.2 960.9 250.3 966.8 242.8 973.0 235.7 979.5 228.9 986.2 222.6 993.1 216.7 1000.3 211.3 1007.7 206.3 1015.3 201.8 1023.0 197.8 1030.8 194.2 1038.8 191.2 1046.8 188.7 1054.9 186.8 1063.1 185.3 1071.3 184.4 1079.5 184.0 1087.7 184.2 1095.8 184.9 1103.9 186.1 1111.9 187.9 1119.8 190.2 1127.6 193.0 1135.2 196.3 1142.6 200.1 1149.8 204.4 1156.9 209.2 1163.7 214.5 1170.2 220.2 1176.5 226.4 1182.5 232.9 1188.2 239.9 1193.6 247.3 1198.6 255.0 1203.4 263.1 1207.7 271.4 1211.7 280.1 1215.3 289.1 1218.5 298.3 1221.3 307.7 1223.7 317.3 1225.7 327.1 1227.2 337.1 1228.4 347.1 1229.1 357.3 1229.4 367.5 1229.2 377.7 1228.7 388.0Z M1232.5 398.7 1230.9 409.7 1228.9 420.6 1226.5 431.4 1223.6 442.0 1220.3 452.5 1216.5 462.8 1212.4 472.8 1207.8 482.6 1202.9 492.1 1197.5 501.3 1191.8 510.1 1185.8 518.6 1179.4 526.7 1172.7 534.4 1165.7 541.7 1158.5 548.5 1151.0 554.9 1143.2 560.8 1135.3 566.2 1127.1 571.0 1118.8 575.4 1110.3 579.2 1101.7 582.4 1093.0 585.1 1084.2 587.3 1075.4 588.8 1066.6 589.8 1057.7 590.2 1048.9 590.0 1040.1 589.3 1031.3 588.0 1022.7 586.1 1014.2 583.6 1005.8 580.6 997.6 577.0 989.6 572.8 981.7 568.2 974.1 563.0 966.8 557.3 959.7 551.2 952.9 544.5 946.5 537.4 940.3 529.9 934.5 521.9 929.0 513.6 924.0 504.9 919.3 495.8 915.0 486.4 911.1 476.8 907.6 466.8 904.6 456.6 902.0 446.2 899.9 435.7 898.2 424.9 896.9 414.1 896.2 403.1 895.9 392.1 896.0 381.0 896.6 370.0 897.7 358.9 899.2 347.9 901.2 337.0 903.7 326.2 906.6 315.6 909.9 305.1 913.6 294.8 917.8 284.8 922.4 275.0 927.3 265.5 932.6 256.3 938.3 247.5 944.4 239.0 950.8 230.9 957.4 223.2 964.4 215.9 971.7 209.1 979.2 202.7 986.9 196.8 994.9 191.4 1003.1 186.6 1011.4 182.2 1019.9 178.4 1028.5 175.2 1037.2 172.5 1045.9 170.3 1054.8 168.8 1063.6 167.8 1072.5 167.4 1081.3 167.6 1090.1 168.3 1098.8 169.6 1107.5 171.6 1116.0 174.0 1124.4 177.1 1132.6 180.6 1140.6 184.8 1148.4 189.4 1156.0 194.6 1163.4 200.3 1170.4 206.5 1177.2 213.1 1183.7 220.2 1189.9 227.7 1195.7 235.7 1201.1 244.0 1206.2 252.7 1210.9 261.8 1215.2 271.2 1219.1 280.8 1222.6 290.8 1225.6 301.0 1228.2 311.4 1230.3 321.9 1232.0 332.7 1233.2 343.5 1234.0 354.5 1234.3 365.5 1234.2 376.6 1233.5 387.7Z M1231.0 398.4 1229.4 409.9 1227.3 421.3 1224.7 432.5 1221.7 443.6 1218.3 454.6 1214.3 465.3 1210.0 475.8 1205.2 486.0 1200.1 495.9 1194.5 505.5 1188.6 514.7 1182.3 523.6 1175.6 532.0 1168.6 540.1 1161.3 547.7 1153.8 554.8 1145.9 561.4 1137.8 567.6 1129.5 573.2 1121.0 578.3 1112.3 582.8 1103.5 586.8 1094.5 590.2 1085.5 593.0 1076.3 595.2 1067.1 596.8 1057.9 597.8 1048.6 598.3 1039.4 598.1 1030.2 597.3 1021.1 595.9 1012.1 593.9 1003.2 591.4 994.5 588.2 985.9 584.4 977.5 580.1 969.4 575.3 961.4 569.9 953.8 563.9 946.4 557.5 939.3 550.6 932.5 543.2 926.1 535.3 920.1 527.0 914.4 518.3 909.1 509.2 904.2 499.8 899.7 490.0 895.6 479.9 892.0 469.5 888.9 458.9 886.2 448.0 883.9 437.0 882.2 425.8 880.9 414.5 880.1 403.0 879.7 391.5 879.9 380.0 880.6 368.4 881.7 356.9 883.3 345.5 885.4 334.1 887.9 322.8 890.9 311.7 894.4 300.8 898.3 290.1 902.6 279.6 907.4 269.4 912.6 259.5 918.1 249.9 924.1 240.7 930.4 231.8 937.0 223.3 944.0 215.3 951.3 207.7 958.9 200.6 966.7 193.9 974.8 187.8 983.1 182.2 991.6 177.1 1000.3 172.6 1009.1 168.6 1018.1 165.2 1027.2 162.4 1036.3 160.2 1045.6 158.5 1054.8 157.5 1064.0 157.1 1073.3 157.3 1082.4 158.1 1091.5 159.4 1100.5 161.4 1109.4 164.0 1118.2 167.2 1126.7 170.9 1135.1 175.2 1143.3 180.1 1151.2 185.5 1158.9 191.4 1166.3 197.9 1173.3 204.8 1180.1 212.2 1186.5 220.1 1192.6 228.4 1198.3 237.1 1203.6 246.2 1208.5 255.6 1213.0 265.4 1217.0 275.5 1220.6 285.8 1223.8 296.5 1226.5 307.3 1228.7 318.4 1230.5 329.6 1231.8 340.9 1232.6 352.3 1232.9 363.8 1232.7 375.4 1232.1 386.9Z M1091.5 382.2 1083.4 382.4 1075.5 382.5 1067.7 382.6 1060.1 382.7 1052.6 382.8 1045.3 382.8 1038.2 382.8 1031.2 382.7 1024.3 382.7 1017.6 382.6 1011.0 382.5 1004.6 382.4 998.3 382.3 992.2 382.2 986.2 382.1 980.4 382.0 974.7 381.8 969.1 381.7 963.7 381.6 958.4 381.4 953.3 381.3 948.4 381.1 943.5 381.0 938.8 380.8 934.3 380.6 929.9 380.5 925.6 380.3 921.5 380.1 917.5 380.0 913.7 379.8 910.0 379.6 906.4 379.5 903.0 379.3 899.7 379.1 896.6 378.9 893.5 378.7 890.6 378.6 887.9 378.4 885.2 378.2 882.7 378.0 880.2 377.8 877.9 377.3 875.7 376.7 873.6 376.3 871.5 375.9 869.5 375.5 867.5 375.2 865.2 374.9 M1091.5 382.2 1084.8 376.9 1078.3 371.7 1071.9 366.6 1065.7 361.6 1059.5 356.8 1053.5 352.0 1047.6 347.4 1041.9 342.9 1036.2 338.5 1030.6 334.2 1025.2 330.1 1019.9 326.0 1014.7 322.1 1009.6 318.3 1004.6 314.6 999.7 311.1 994.9 307.7 990.3 304.3 985.7 301.2 981.3 298.1 976.9 295.1 972.7 292.3 968.6 289.6 964.6 287.0 960.7 284.5 956.9 282.1 953.2 279.9 949.7 277.7 946.2 275.7 942.8 273.8 939.6 272.0 936.5 270.3 933.4 268.7 930.5 267.2 927.7 265.9 924.9 264.6 922.3 263.4 919.8 262.3 917.3 261.4 915.0 260.5 912.7 259.7 910.7 258.8 908.6 258.0 906.7 257.3 904.7 256.7 902.8 256.3 900.8 255.9 898.5 255.6 M1091.5 382.2 1088.3 373.1 1085.1 364.3 1082.1 355.6 1079.2 347.1 1076.3 338.8 1073.5 330.7 1070.7 322.8 1068.0 315.1 1065.4 307.7 1062.8 300.4 1060.2 293.3 1057.6 286.5 1055.1 279.8 1052.6 273.4 1050.1 267.2 1047.7 261.1 1045.3 255.3 1042.9 249.8 1040.5 244.4 1038.1 239.2 1035.8 234.2 1033.5 229.5 1031.2 224.9 1028.9 220.6 1026.7 216.4 1024.5 212.5 1022.3 208.7 1020.1 205.2 1018.0 201.8 1015.8 198.7 1013.7 195.7 1011.7 192.9 1009.6 190.3 1007.6 187.9 1005.6 185.7 1003.6 183.6 1001.7 181.8 999.8 180.0 997.9 178.5 996.0 177.1 994.2 175.9 993.0 174.5 991.8 173.3 990.4 172.3 989.0 171.4 987.3 170.8 985.5 170.3 983.3 170.0 M1091.5 382.2 1092.2 372.1 1093.1 362.2 1094.1 352.6 1095.2 343.3 1096.3 334.2 1097.5 325.4 1098.6 316.8 1099.8 308.5 1101.0 300.5 1102.1 292.7 1103.2 285.1 1104.2 277.8 1105.1 270.8 1106.0 263.9 1106.8 257.3 1107.5 251.0 1108.1 244.8 1108.7 238.9 1109.1 233.2 1109.5 227.7 1109.7 222.5 1109.9 217.5 1110.0 212.7 1109.9 208.1 1109.8 203.7 1109.6 199.5 1109.3 195.5 1109.0 191.8 1108.5 188.2 1107.9 184.8 1107.3 181.7 1106.6 178.7 1105.8 176.0 1105.0 173.4 1104.0 171.0 1103.0 168.9 1102.0 166.9 1100.8 165.1 1099.6 163.4 1098.4 162.0 1097.0 160.7 1097.6 160.0 1098.0 159.5 1097.9 159.1 1097.4 158.7 1096.3 158.4 1094.9 158.1 1092.7 157.8 M1091.5 382.2 1096.0 373.5 1100.6 365.2 1105.4 357.4 1110.1 349.9 1114.9 342.8 1119.6 336.0 1124.2 329.6 1128.8 323.4 1133.3 317.5 1137.6 311.9 1141.8 306.6 1145.9 301.4 1149.7 296.5 1153.5 291.7 1157.0 287.2 1160.4 282.8 1163.5 278.6 1166.5 274.6 1169.3 270.7 1171.9 267.0 1174.3 263.4 1176.6 259.9 1178.6 256.6 1180.5 253.5 1182.1 250.4 1183.6 247.5 1184.9 244.7 1186.1 242.1 1187.0 239.6 1187.8 237.2 1188.4 234.9 1188.9 232.8 1189.2 230.8 1189.3 229.0 1189.3 227.2 1189.1 225.6 1188.8 224.1 1188.3 222.8 1187.7 221.5 1187.0 220.4 1186.1 219.5 1187.3 221.6 1188.2 223.6 1188.5 225.3 1188.3 226.4 1187.4 227.1 1186.0 227.4 1183.9 227.3 M1091.5 382.2 1099.1 378.2 1106.5 374.5 1113.8 371.0 1120.9 367.9 1127.7 365.0 1134.4 362.3 1140.8 359.8 1147.1 357.5 1153.1 355.3 1158.8 353.2 1164.4 351.3 1169.7 349.5 1174.7 347.7 1179.6 346.1 1184.2 344.5 1188.5 343.0 1192.7 341.5 1196.6 340.1 1200.3 338.8 1203.7 337.4 1207.0 336.2 1210.0 335.0 1212.8 333.8 1215.4 332.6 1217.8 331.5 1219.9 330.4 1221.9 329.4 1223.6 328.4 1225.2 327.4 1226.5 326.5 1227.7 325.6 1228.6 324.7 1229.4 323.9 1229.9 323.1 1230.3 322.4 1230.5 321.7 1230.6 321.0 1230.4 320.4 1230.1 319.9 1229.6 319.3 1228.9 318.8 1228.5 320.8 1227.8 322.7 1226.9 324.1 1225.7 325.1 1224.3 325.7 1222.6 325.9 1220.4 325.8 M1091.5 382.2 1099.1 385.0 1106.6 387.7 1113.8 390.3 1120.8 392.8 1127.5 395.1 1134.1 397.4 1140.3 399.6 1146.4 401.7 1152.2 403.7 1157.8 405.7 1163.1 407.5 1168.2 409.3 1173.1 411.0 1177.8 412.7 1182.2 414.2 1186.4 415.7 1190.3 417.2 1194.1 418.5 1197.6 419.9 1200.9 421.1 1204.0 422.3 1206.9 423.4 1209.6 424.5 1212.0 425.5 1214.3 426.4 1216.3 427.3 1218.2 428.1 1219.9 428.9 1221.3 429.6 1222.6 430.3 1223.6 430.9 1224.5 431.4 1225.2 431.9 1225.8 432.4 1226.1 432.8 1226.2 433.1 1226.2 433.4 1226.0 433.6 1225.7 433.8 1225.1 433.9 1224.4 434.0 1223.7 433.7 1222.7 433.3 1221.6 432.9 1220.3 432.6 1218.7 432.3 1217.0 432.0 1214.7 431.7 M1091.5 382.2 1096.1 390.2 1100.7 397.9 1105.3 405.2 1109.8 412.2 1114.2 419.0 1118.6 425.4 1122.8 431.6 1126.9 437.5 1130.9 443.2 1134.8 448.6 1138.5 453.9 1142.1 458.9 1145.5 463.7 1148.7 468.3 1151.8 472.7 1154.7 477.0 1157.4 481.1 1159.9 485.0 1162.3 488.7 1164.5 492.3 1166.6 495.8 1168.4 499.0 1170.1 502.1 1171.7 505.1 1173.0 507.9 1174.2 510.6 1175.3 513.1 1176.2 515.5 1176.9 517.7 1177.5 519.8 1177.9 521.8 1178.2 523.6 1178.3 525.2 1178.3 526.7 1178.1 528.1 1177.8 529.4 1177.4 530.5 1176.9 531.4 1176.2 532.3 1175.3 533.0 1174.4 533.6 1174.7 532.4 1174.7 531.1 1174.4 530.1 1173.7 529.3 1172.5 528.6 1171.0 528.2 1168.8 527.8 M1091.5 382.2 1091.8 392.3 1092.2 402.1 1092.6 411.6 1093.2 420.9 1093.7 429.9 1094.2 438.6 1094.8 447.1 1095.3 455.3 1095.8 463.2 1096.2 470.9 1096.6 478.3 1097.0 485.5 1097.3 492.4 1097.6 499.1 1097.7 505.5 1097.9 511.7 1097.9 517.6 1097.9 523.3 1097.8 528.8 1097.6 534.1 1097.4 539.1 1097.1 543.9 1096.7 548.4 1096.3 552.8 1095.8 556.9 1095.2 560.8 1094.5 564.5 1093.8 568.0 1093.0 571.2 1092.2 574.2 1091.3 577.1 1090.4 579.7 1089.4 582.1 1088.3 584.3 1087.2 586.4 1086.0 588.2 1084.8 589.8 1083.5 591.3 1082.2 592.5 1080.8 593.6 1079.4 594.5 1079.2 594.9 1078.9 595.1 1078.3 595.2 1077.4 595.3 1076.1 595.2 1074.4 595.0 1072.2 594.8 M1091.5 382.2 1087.3 391.1 1083.1 399.8 1079.1 408.3 1075.1 416.6 1071.2 424.6 1067.4 432.5 1063.7 440.1 1060.0 447.5 1056.4 454.7 1052.9 461.7 1049.4 468.5 1045.9 475.0 1042.5 481.3 1039.2 487.4 1035.9 493.3 1032.7 499.0 1029.5 504.4 1026.3 509.6 1023.2 514.7 1020.2 519.5 1017.2 524.1 1014.3 528.4 1011.4 532.6 1008.6 536.6 1005.8 540.3 1003.1 543.9 1000.4 547.3 997.8 550.4 995.2 553.4 992.7 556.1 990.2 558.7 987.8 561.1 985.4 563.3 983.1 565.3 980.8 567.1 978.6 568.8 976.5 570.2 974.4 571.5 972.3 572.6 970.3 573.6 968.3 574.4 966.7 575.2 965.1 575.9 963.4 576.4 961.7 576.7 959.9 576.8 958.0 576.7 955.7 576.5 M1091.5 382.2 1084.4 387.6 1077.5 392.9 1070.7 398.1 1064.1 403.1 1057.6 408.0 1051.2 412.7 1044.9 417.3 1038.7 421.8 1032.7 426.1 1026.8 430.3 1021.0 434.3 1015.3 438.2 1009.8 442.0 1004.3 445.6 999.0 449.1 993.8 452.4 988.8 455.7 983.8 458.8 979.0 461.7 974.3 464.6 969.7 467.3 965.2 469.8 960.9 472.3 956.7 474.6 952.6 476.8 948.6 478.9 944.7 480.9 941.0 482.7 937.4 484.4 933.9 486.0 930.5 487.5 927.2 488.8 924.1 490.1 921.0 491.2 918.1 492.3 915.3 493.2 912.6 494.0 909.9 494.7 907.4 495.3 905.0 495.8 902.7 496.2 900.5 496.5 898.3 496.7 896.3 496.8 894.2 496.8 892.2 496.7 890.2 496.6 887.9 496.3" stroke="#000" stroke-width="1.6"/>
</g>
<path d="M1091.5 382.2 L1169 206.5" stroke="#222" stroke-width="1.5" fill="none"/>
<path d="M1221.1 397.1 1219.4 408.8 1217.3 420.3 1214.7 431.7 1211.7 443.0 1208.2 454.1 1204.2 464.9 1199.8 475.6 1195.0 485.9 1189.7 496.0 1184.1 505.7 1178.1 515.1 1171.7 524.0 1164.9 532.6 1157.8 540.8 1150.4 548.5 1142.8 555.7 1134.8 562.4 1126.6 568.7 1118.2 574.4 1109.6 579.5 1100.7 584.1 1091.8 588.1 1082.7 591.6 1073.5 594.4 1064.2 596.7 1054.9 598.3 1045.5 599.4 1036.1 599.8 1026.8 599.6 1017.5 598.8 1008.2 597.4 999.1 595.4 990.1 592.8 981.2 589.6 972.5 585.8 964.0 581.4 955.7 576.5 947.7 571.0 939.9 565.0 932.4 558.5 925.3 551.4 918.4 543.9 911.9 535.9 905.7 527.5 900.0 518.7 894.6 509.5 889.6 499.9 885.1 490.0 881.0 479.7 877.3 469.2 874.1 458.5 871.4 447.5 869.1 436.3 867.3 424.9 866.0 413.4 865.2 401.8 864.8 390.1 865.0 378.4 865.7 366.7 866.8 355.0 868.4 343.4 870.5 331.9 873.1 320.5 876.2 309.2 879.7 298.1 883.7 287.2 888.1 276.6 892.9 266.3 898.1 256.2 903.8 246.5 909.8 237.1 916.2 228.1 922.9 219.6 930.0 211.4 937.4 203.7 945.1 196.5 953.0 189.7 961.2 183.5 969.7 177.8 978.3 172.7 987.1 168.1 996.1 164.0 1005.2 160.6 1014.4 157.7 1023.7 155.5 1033.0 153.8 1042.4 152.8 1051.8 152.4 1061.1 152.6 1070.4 153.3 1079.6 154.8 1088.8 156.8 1097.8 159.4 1106.7 162.6 1115.3 166.4 1123.8 170.8 1132.1 175.7 1140.2 181.2 1147.9 187.2 1155.4 193.7 1162.6 200.7 1169.5 208.3 1176.0 216.2 1182.1 224.6 1187.9 233.5 1193.3 242.7 1198.2 252.3 1202.8 262.2 1206.9 272.4 1210.6 282.9 1213.8 293.7 1216.5 304.7 1218.8 315.9 1220.6 327.3 1221.9 338.8 1222.7 350.4 1223.0 362.0 1222.8 373.7 1222.2 385.5Z" fill="none" stroke="#000" stroke-width="1.7"/>
<path d="M1221.1 397.1 1219.4 408.8 1217.3 420.3 1214.7 431.7 1211.7 443.0 1208.2 454.1 1204.2 464.9 1199.8 475.6 1195.0 485.9 1189.7 496.0 1184.1 505.7 1178.1 515.1 1171.7 524.0 1164.9 532.6 1157.8 540.8 1150.4 548.5 1142.8 555.7 1134.8 562.4 1126.6 568.7 1118.2 574.4 1109.6 579.5 1100.7 584.1 1091.8 588.1 1082.7 591.6 1073.5 594.4 1064.2 596.7 1054.9 598.3 1045.5 599.4 1036.1 599.8 1026.8 599.6 1017.5 598.8 1008.2 597.4 999.1 595.4 990.1 592.8 981.2 589.6 972.5 585.8 964.0 581.4 955.7 576.5 947.7 571.0 939.9 565.0 932.4 558.5 925.3 551.4 918.4 543.9 911.9 535.9 905.7 527.5 900.0 518.7 894.6 509.5 889.6 499.9 885.1 490.0 881.0 479.7 877.3 469.2 874.1 458.5 871.4 447.5 869.1 436.3 867.3 424.9 866.0 413.4 865.2 401.8 864.8 390.1 865.0 378.4 865.7 366.7 866.8 355.0 868.4 343.4 870.5 331.9 873.1 320.5 876.2 309.2 879.7 298.1 883.7 287.2 888.1 276.6 892.9 266.3 898.1 256.2 903.8 246.5 909.8 237.1 916.2 228.1 922.9 219.6 930.0 211.4 937.4 203.7 945.1 196.5 953.0 189.7 961.2 183.5 969.7 177.8 978.3 172.7 987.1 168.1 996.1 164.0 1005.2 160.6 1014.4 157.7 1023.7 155.5 1033.0 153.8 1042.4 152.8 1051.8 152.4 1061.1 152.6 1070.4 153.3 1079.6 154.8 1088.8 156.8 1097.8 159.4 1106.7 162.6 1115.3 166.4 1123.8 170.8 1132.1 175.7 1140.2 181.2 1147.9 187.2 1155.4 193.7 1162.6 200.7 1169.5 208.3 1176.0 216.2 1182.1 224.6 1187.9 233.5 1193.3 242.7 1198.2 252.3 1202.8 262.2 1206.9 272.4 1210.6 282.9 1213.8 293.7 1216.5 304.7 1218.8 315.9 1220.6 327.3 1221.9 338.8 1222.7 350.4 1223.0 362.0 1222.8 373.7 1222.2 385.5Z" fill="none" stroke="#f0e000" stroke-width="1.5" stroke-dasharray="2 6" stroke-dashoffset="-5"/>
<path d="M1221.8 397.2 1220.1 408.9 1218.0 420.5 1215.4 431.9 1212.3 443.3 1208.8 454.4 1204.8 465.3 1200.4 476.0 1195.6 486.4 1190.3 496.4 1184.6 506.2 1178.6 515.6 1172.2 524.6 1165.4 533.2 1158.3 541.4 1150.9 549.2 1143.2 556.4 1135.2 563.2 1126.9 569.4 1118.5 575.2 1109.8 580.3 1101.0 584.9 1092.0 589.0 1082.8 592.4 1073.6 595.3 1064.3 597.6 1054.9 599.2 1045.5 600.3 1036.1 600.7 1026.7 600.5 1017.3 599.7 1008.1 598.3 998.9 596.3 989.9 593.7 981.0 590.4 972.2 586.6 963.7 582.2 955.4 577.3 947.3 571.8 939.5 565.8 932.0 559.2 924.8 552.1 917.9 544.6 911.4 536.6 905.2 528.1 899.4 519.3 894.0 510.0 889.0 500.4 884.4 490.4 880.3 480.2 876.6 469.6 873.4 458.8 870.7 447.7 868.4 436.5 866.6 425.1 865.3 413.6 864.5 401.9 864.1 390.2 864.3 378.4 865.0 366.7 866.1 355.0 867.7 343.3 869.9 331.7 872.4 320.2 875.5 308.9 879.0 297.8 883.0 286.9 887.4 276.2 892.3 265.8 897.6 255.7 903.2 246.0 909.3 236.6 915.7 227.5 922.5 218.9 929.6 210.7 937.0 203.0 944.7 195.8 952.7 189.0 960.9 182.7 969.4 177.0 978.0 171.9 986.9 167.2 995.9 163.2 1005.0 159.7 1014.3 156.9 1023.6 154.6 1033.0 153.0 1042.4 151.9 1051.8 151.5 1061.2 151.7 1070.5 152.5 1079.8 153.9 1089.0 155.9 1098.0 158.5 1106.9 161.7 1115.6 165.5 1124.2 169.9 1132.5 174.9 1140.5 180.4 1148.4 186.4 1155.9 193.0 1163.1 200.0 1170.0 207.6 1176.5 215.6 1182.7 224.0 1188.5 232.9 1193.9 242.2 1198.9 251.8 1203.4 261.7 1207.5 272.0 1211.2 282.6 1214.4 293.4 1217.2 304.4 1219.5 315.7 1221.3 327.1 1222.6 338.6 1223.4 350.3 1223.7 362.0 1223.6 373.7 1222.9 385.5Z" fill="none" stroke="#4ba5ff" stroke-width="3.1" stroke-dasharray="4 4"/>
</svg>
<svg width="914" height="674" viewBox="578 0 914 674" style="left:578px;top:0">
<defs>
<linearGradient id="lens" x1="0" y1="0" x2="1" y2="1"><stop offset="0" stop-color="#ffffff"/><stop offset="1" stop-color="#d9e3e8"/></linearGradient>
<linearGradient id="grip" x1="0" y1="0" x2="1" y2="1"><stop offset="0" stop-color="#a6d0e6"/><stop offset="1" stop-color="#4f8fb5"/></linearGradient>
<linearGradient id="tube" x1="0" y1="0" x2="1" y2="1"><stop offset="0" stop-color="#ffffff"/><stop offset="0.5" stop-color="#eeeeee"/><stop offset="1" stop-color="#a8a8a8"/></linearGradient>
<linearGradient id="bluf" x1="0" y1="0" x2="1" y2="1"><stop offset="0" stop-color="#b2e0f4"/><stop offset="1" stop-color="#6fa6c6"/></linearGradient>
<linearGradient id="blul" x1="0" y1="0" x2="1" y2="0"><stop offset="0" stop-color="#5f9cc0"/><stop offset="1" stop-color="#a4d6ee"/></linearGradient>
<linearGradient id="scr" x1="0" y1="0" x2="1" y2="1"><stop offset="0" stop-color="#d2d2d2"/><stop offset="1" stop-color="#f0f0f0"/></linearGradient>
<radialGradient id="gsp" cx="0.35" cy="0.3" r="0.75"><stop offset="0" stop-color="#f4f4f4"/><stop offset="0.5" stop-color="#e2e2e2"/><stop offset="1" stop-color="#d4d4d4"/></radialGradient>
<linearGradient id="gstem" x1="0" y1="0" x2="0" y2="1"><stop offset="0" stop-color="#c9f7c9"/><stop offset="0.8" stop-color="#aef0ae"/><stop offset="1" stop-color="#7ee87e"/></linearGradient>
<linearGradient id="ghand" x1="0" y1="0" x2="0" y2="1"><stop offset="0" stop-color="#a8a8a8"/><stop offset="0.3" stop-color="#c2c2c2"/><stop offset="0.65" stop-color="#8e8e8e"/><stop offset="1" stop-color="#5e5e5e"/></linearGradient>
</defs>
<!-- tree item -->
<path d="M589 53.8 L595.4 59.4 L589 65Z" fill="#111"/>
<g transform="translate(599.7 8)" stroke="#8a5c00" stroke-width="0.8" stroke-linejoin="round">
<path d="M16.3 46.7 L21.7 44.5 L21.7 40.4 L28.1 38.1 L35.7 40.9 L35.7 49.5 L40.7 51.7 L40.7 60.8 L33.5 65.7 L16.3 54.4Z" fill="#f8cb20"/>
<path d="M21.7 40.4 L28.1 38.1 L35.7 40.9 L27.6 43.6Z" fill="#fdee86"/>
<path d="M27.6 43.6 L35.7 40.9 L35.7 49.5 L27.6 51.7Z" fill="#fbe160"/>
<path d="M27.6 51.7 L35.7 49.5 L40.7 51.7 L33.5 56.2Z" fill="#fdeb7c"/>
<path d="M33.5 56.2 L40.7 51.7 L40.7 60.8 L33.5 65.7Z" fill="#fbe160"/>
<path d="M16.3 46.7 L21.7 44.5 L21.7 49.2Z" fill="#fdeb7c"/>
</g>
<!-- toolbar 1: zoom to fit -->
<path d="M996.2 22.6 L991 27.4" stroke="#6d6d6d" stroke-width="2.8"/>
<path d="M992.8 24.6 L994.8 26.8 L988.4 32.8 Q986 33.4 985 30.8Z" fill="url(#grip)" stroke="#356f93" stroke-width="0.9" stroke-linejoin="round"/>
<circle cx="1001.3" cy="16.5" r="8.8" fill="url(#lens)" stroke="#8c8c8c" stroke-width="1.3"/>
<rect x="998.6" y="13.8" width="5.4" height="5.4" fill="#e4ecf0"/>
<g fill="#5c5c5c"><path d="M998.6 12.6 L1001.3 9.8 L1004 12.6Z"/><path d="M998.6 20.4 L1001.3 23.2 L1004 20.4Z"/><path d="M997.4 13.8 L994.6 16.5 L997.4 19.2Z"/><path d="M1005.2 13.8 L1008 16.5 L1005.2 19.2Z"/></g>
<!-- toolbar 2: zoom to area -->
<path d="M1032.4 6.4 H1049.6 V23.6 H1032.4Z" fill="none" stroke="#555" stroke-width="1" stroke-dasharray="2.4 1.6"/>
<path d="M1033.2 23.4 L1028 28.2" stroke="#6d6d6d" stroke-width="2.8"/>
<path d="M1029.8 25.4 L1031.8 27.6 L1025.4 33.6 Q1023 34.2 1022 31.6Z" fill="url(#grip)" stroke="#356f93" stroke-width="0.9" stroke-linejoin="round"/>
<circle cx="1038.3" cy="17.3" r="8.8" fill="url(#lens)" stroke="#8c8c8c" stroke-width="1.3"/>
<!-- toolbar 3: previous view (telescope + arrow) -->
<g id="scope">
<path d="M1060.9 21.7 L1068.9 14.5 L1078.6 9.7 L1084.2 6.8 Q1087.6 6.6 1087.8 10.6 L1082.6 16.4 L1077 24.1 L1069.7 33 Q1062.6 34 1060.9 21.7Z" fill="url(#tube)" stroke="#8c8c8c" stroke-width="1"/><path d="M1068.9 14.5 Q1075.4 17.4 1077 24.1 M1078.6 9.7 Q1082.4 11.6 1082.6 16.4" fill="none" stroke="#a8a8a8" stroke-width="0.9"/>
<ellipse cx="1066" cy="27.4" rx="4.2" ry="6.4" transform="rotate(-33 1066 27.4)" fill="#dcdcdc" stroke="#8a8a8a" stroke-width="1"/>
<ellipse cx="1066.2" cy="27.4" rx="2.2" ry="4.2" transform="rotate(-33 1066.2 27.4)" fill="#b4b4b4" stroke="#8f8f8f" stroke-width="0.7"/>
</g>
<path d="M1073.4 23.9 L1079.6 18.2 V21.4 H1087.8 V26.6 H1079.6 V29.8Z" fill="#8fc3df" stroke="#3f7ea3" stroke-width="1"/>
<!-- toolbar 4: section view (disabled) -->
<g stroke="#dadada" stroke-width="1" fill="#efefef">
<path d="M1098 14 Q1112 4 1125.6 12 V26 Q1120 30 1117.8 29 V26 Q1112 23 1109.6 27 V32 Q1103 35 1098 31Z"/>
<path d="M1098.6 18 L1108.6 15.6 V31.6 L1098.6 32.6Z" fill="#e4e4e4"/><path d="M1118.6 14.6 L1125.4 13.4 V25.8 L1118.6 28.4Z" fill="#e4e4e4"/>
</g>
<!-- toolbar 5: telescope + bolt + A -->
<use href="#scope" transform="translate(76.6 -0.6) scale(0.93) translate(80 2)"/>
<path d="M1143.6 5.2 H1152 L1147.2 10 L1150.6 10.4 L1135.8 20.4 L1141.4 13 H1137.6Z" fill="#f8cf3a" stroke="#d9772b" stroke-width="0.9" stroke-linejoin="round"/>
<text x="1155.4" y="34.6" text-anchor="middle" font-family="Liberation Serif, serif" font-weight="bold" font-size="25" fill="#7fb6d6" stroke="#3f7ea3" stroke-width="0.6">A</text>
<!-- toolbar 6: view orientation -->
<g fill="none" stroke="#4e4e4e" stroke-width="1.1"><path d="M1174.2 14.4 L1182 6.3 H1202 V25.7 L1193.8 33.5M1182 6.3 V14.4M1202 25.7 H1193.8 M1202 6.3 L1193.8 14.4"/></g>
<rect x="1174.4" y="14.4" width="19.4" height="19" fill="url(#bluf)" stroke="#2f6c90" stroke-width="1"/>
<g fill="#4a4a4a" stroke="#4a4a4a" stroke-width="0.4"><path d="M1186.9 6.6 H1188.5 V10.8 H1190.8 L1187.7 14 L1184.6 10.8 H1186.9Z"/><path d="M1201.6 19.3 V20.9 H1197.6 V23.2 L1194.4 20.1 L1197.6 17 V19.3Z"/></g>
<path d="M1209.9 17.9 H1216.9 L1213.4 21.6Z" fill="#9a9a9a"/>
<!-- toolbar 7: display style cube -->
<path d="M1229.4 9.1 L1242.5 6.3 L1252.9 10.6 L1252.9 27.7 L1236.8 32.7 L1229.4 26.1Z" fill="#f6f6f6" stroke="#555" stroke-width="1.1" stroke-linejoin="round"/>
<path d="M1229.4 9.1 L1238.1 14.4 L1236.8 32.7 L1229.4 26.1Z" fill="url(#blul)"/>
<path d="M1238.1 14.4 L1245.2 12.6 L1245.2 30.1 L1236.8 32.7Z" fill="#a7dbf2"/>
<path d="M1229.4 9.1 L1242.5 6.3 L1247.6 8.4 L1245.2 12.6 L1238.1 14.4Z" fill="#a7dbf2" opacity="0.85"/>
<path d="M1229.4 9.1 L1238.1 14.4 L1252.9 10.6 M1238.1 14.4 L1236.8 32.7" fill="none" stroke="#555" stroke-width="1"/>
<path d="M1229.4 9.1 L1242.5 6.3 L1252.9 10.6 L1252.9 27.7 L1236.8 32.7 L1229.4 26.1Z" fill="none" stroke="#555" stroke-width="1.1" stroke-linejoin="round"/>
<path d="M1262.9 17.9 H1269.9 L1266.4 21.6Z" fill="#9a9a9a"/>
<!-- toolbar 8: hide/show eye -->
<path d="M1279.6 19.8 Q1293.6 1.4 1307.6 19.8 Q1293.6 38 1279.6 19.8Z" fill="#f1f1f1" stroke="#b2b2b2" stroke-width="1.8"/>
<circle cx="1293" cy="18.9" r="6.2" fill="#8c8c8c"/>
<path d="M1293.8 12.8 A6.2 6.2 0 0 0 1293.8 25 Z" fill="#555"/>
<circle cx="1291.6" cy="15.8" r="1.3" fill="#fff"/><ellipse cx="1295.6" cy="16.8" rx="0.9" ry="1.8" fill="#eee"/>
<path d="M1293.9 9.2 V30.6" stroke="#666" stroke-width="1.9"/>
<path d="M1315.9 17.9 H1322.9 L1319.4 21.6Z" fill="#9a9a9a"/>
<!-- toolbar 9: edit appearance (disabled) -->
<circle cx="1344.4" cy="17.8" r="12.2" fill="url(#gsp)"/>
<path d="M1357.6 17.6 L1361.8 21.4 L1347.4 35.6 L1344 36 L1344.6 32.4Z" fill="#ececec" stroke="#d2d2d2" stroke-width="1"/>
<!-- toolbar 10: apply scene (disabled) -->
<rect x="1371.1" y="16.1" width="27.8" height="17.3" fill="#d9d9d9"/>
<g fill="#f6f6f6"><path d="M1374 22 h5 l-1 3.4 h-5.4z M1391.4 22 h5 l1.4 3.4 h-5.4z M1378 26.4 h5.6 l-0.6 3.4 h-6z M1387.4 26.4 h5.4 l1.2 3.4 h-6z M1372 30.4 h5.4 l-0.8 3 h-4.6z M1382.6 30.4 h5.6 l0.4 3 h-6.4z M1393.8 30.4 h5.1 v3 h-4.3z M1372 18 h3.4 l-0.8 2.6 h-2.6z M1395.6 18 h3.3 v2.6 h-2.5z"/></g>
<circle cx="1384.4" cy="16.4" r="10.7" fill="url(#gsp)"/>
<rect x="1406.2" y="11" width="7.8" height="19" fill="#fafafa"/>
<path d="M1406.7 18.2 H1413.7 L1410.2 21.9Z" fill="#9a9a9a"/>
<!-- toolbar 11: monitor -->
<rect x="1426" y="9" width="23.8" height="15.8" fill="url(#scr)" stroke="#5c5c5c" stroke-width="2"/>
<rect x="1436.2" y="25.6" width="3.8" height="3.8" fill="#8a8a8a" stroke="#666" stroke-width="0.6"/>
<rect x="1433" y="29.2" width="9.8" height="1.6" fill="#6a6a6a"/>
<path d="M1459.9 18.2 H1466.9 L1463.4 21.9Z" fill="#9a9a9a"/>
<!-- triad -->
<rect x="636.2" y="575" width="5.8" height="30.8" fill="url(#gstem)"/>
<rect x="636.2" y="602" width="5.8" height="4" fill="#22d022"/>
<path d="M639.1 561.6 L644.6 573.6 H633.6Z" fill="#b4f2b4"/>
<rect x="633" y="573" width="12.2" height="2.4" fill="#2fd42f"/>
<path d="M617.4 602.3 H634.2 L636 604.4 H617.4Z" fill="#0a0ab4"/>
<path d="M613.6 600 L616.8 604 L613.6 607.6 L611.8 603.8Z" fill="#1a1ac8"/><path d="M614.4 601.2 L616.6 603.8 L615 605.4Z" fill="#fff"/>
<path d="M640.2 604.4 L641 609.6 L617.2 610.4 L617.2 604.4Z" fill="#e00000"/>
<path d="M603.8 608.4 L613 603.2 L617.6 604 L617.6 611.6 L613 614Z" fill="#d40000"/>
<path d="M610.6 602.6 L613.2 603 L613.2 613.8 L610.8 611.8Z" fill="#8c0000"/>
<text x="640.2" y="552.8" text-anchor="middle" font-family="Liberation Sans, sans-serif" font-size="11.5" fill="#1fd01f">Y</text>
<text x="598.6" y="609" text-anchor="middle" font-family="Liberation Sans, sans-serif" font-size="11.5" fill="#f03030">X</text>
<text x="609" y="602.4" text-anchor="middle" font-family="Liberation Sans, sans-serif" font-size="11.5" fill="#2020e0">Z</text>
<!-- handles -->
<defs><linearGradient id="mag" x1="0" y1="0" x2="0" y2="1"><stop offset="0" stop-color="#ff1cf6"/><stop offset="0.55" stop-color="#f800e6"/><stop offset="1" stop-color="#9c009c"/></linearGradient></defs>
<path d="M1174 203.9 L1214.5 207.7 L1214.5 214.6 L1174 210.4Z" fill="url(#mag)"/>
<path d="M1213 209.4 L1218.4 204 H1225.4 L1230.6 213.6 L1224.6 223 H1217.6 L1213 217.4Z" fill="url(#mag)"/>
<path d="M1214 214 L1230 214.4 L1224.6 223 H1217.6 L1213 217.4Z" fill="#a400a4" opacity="0.75"/>
<circle cx="1168.9" cy="206.4" r="5.6" fill="#10c840" stroke="#050505" stroke-width="1.6"/>
<path d="M1168 205.9 H1174" stroke="#050505" stroke-width="1.5"/>
<path d="M1046.5 373.6 L1088 377.9 L1088 384.7 L1046.5 379.7Z" fill="url(#ghand)"/>
<path d="M1062 382.2 L1088 385.3" stroke="#f4f4f4" stroke-width="1"/>
<circle cx="1039.6" cy="376" r="6.8" fill="#969696"/>
<path d="M1029.6 374.4 L1033.4 372.4 V377.6Z" fill="#969696"/>
<circle cx="1039.4" cy="376" r="3.1" fill="none" stroke="#c4c4c4" stroke-width="0.9"/><path d="M1039.6 376.4 H1043.6 M1043.6 373 V379" stroke="#c4c4c4" stroke-width="1" fill="none"/>
<path d="M1091.5 382.2 L1124.3 414.9" stroke="#333" stroke-width="2.6"/>
<path d="M1091.5 382.2 L1124.3 414.9" stroke="#fff" stroke-width="1.4"/>
<g stroke="#2e9bff" stroke-width="1.3"><path d="M1086.2 377 L1096.8 387.4 M1096.8 377 L1086.2 387.4 M1091.5 375.6 V388.8 M1084.8 382.2 H1098.2"/></g>
<circle cx="1091.5" cy="382.3" r="4.3" fill="#4aa8ff" stroke="#151515" stroke-width="1.1"/>
<!-- label -->
<rect x="1087.5" y="413.5" width="73" height="39.6" fill="#fff"/>
<rect x="1089" y="415" width="70" height="36.6" fill="#f8f8f8" stroke="#111" stroke-width="1"/>
<circle cx="1124.3" cy="414.9" r="2.1" fill="#fff" stroke="#111" stroke-width="0.9"/>
</svg>
<div id="tree" class="t" style="left:649px;top:55px;font-size:17px;letter-spacing:-0.24px;color:#2c2c2c">Surface adva...</div>
<div id="plabel" class="t" style="left:1100.5px;top:424px;font-size:15px;color:#222;letter-spacing:0.25px">Profile</div>

<div class="abs" style="left:0;top:0;width:577px;height:674px;background:#f7f7f7"></div>
<div class="abs" style="left:577px;top:0;width:1px;height:674px;background:#7d7d7d"></div>
<!-- collapse handle -->
<div class="abs" style="left:577px;top:295px;width:14px;height:59px;background:#f7f7f7;border:1px solid #7d7d7d;border-left:none;box-sizing:border-box"></div>
<div class="abs" style="left:579px;top:319px;width:8px;height:8px;border-radius:50%;border:1px solid #8a8a8a;background:#e4e4e4;box-sizing:border-box"></div>
<!-- top lines -->
<div class="hl" style="left:0;top:3px;width:575px"></div>
<div class="abs" style="left:283px;top:12px;width:9px;height:9px;border-radius:50%;border:1px solid #8a8a8a;background:#e2e2e2;box-sizing:border-box"></div>
<div class="hl" style="left:0;top:28px;width:575px"></div>
<!-- tabs -->
<div class="hl" style="left:0;top:70px;width:575px;background:#9c9c9c"></div>
<div class="tab" style="left:2px;width:50px"></div>
<div class="tab" style="left:53px;background:#f8f8f8;height:37px"></div>
<div class="tab" style="left:105px"></div>
<div class="tab" style="left:157px"></div>
<div class="tab" style="left:209px;border-right:1px solid #808080"></div>
<!--TABICONS-->
<!-- title -->
<div id="title" class="t b" style="left:46px;top:85px;font-size:17.5px;color:#161616;letter-spacing:0.14px">Surface-Loft2</div>
<!--TITLEICONS-->
<div class="hl" style="left:0;top:157px;width:575px"></div>
<!-- Profiles -->
<div id="hprof" class="t b" style="left:9px;top:169px;color:#404040;letter-spacing:0.3px">Profiles</div>
<div class="abs" style="left:61px;top:195px;width:17px;height:131px;background:#55a7ff;border-left:1px solid #8f9aa8;box-sizing:border-box"></div>
<div class="abs" style="left:81px;top:195px;width:447px;height:131px;background:#fff;border:1px solid #7e8aa3;box-sizing:border-box"></div>
<div id="li1" class="t" style="left:84px;top:200px;letter-spacing:0.3px">ear profile1</div>
<div id="li2" class="t" style="left:84px;top:224px;letter-spacing:0.47px">Point1@ear profile2&lt;1&gt;</div>
<div class="ibox" style="top:242px"></div>
<div class="ibox" style="top:289px"></div>
<div class="abs" style="left:300px;top:328px;width:9px;height:9px;border-radius:50%;border:1px solid #8a8a8a;background:#e2e2e2;box-sizing:border-box"></div>
<div class="hl" style="left:5px;top:348px;width:538px"></div>
<!-- Start/End -->
<div id="hse" class="t b" style="left:9px;top:358px;color:#404040;letter-spacing:0.39px">Start/End Constraints</div>
<div id="lsc" class="t" style="left:61px;top:386px;letter-spacing:0.28px">Start constraint:</div>
<div class="dd" style="top:413px"></div>
<div id="dd1" class="t" style="left:67px;top:419px;letter-spacing:0.44px">Normal To Profile</div>
<div class="ibox" style="top:450px"></div>
<div class="fld" style="top:450px"></div><div class="spin" style="top:450px"></div>
<div id="f1" class="t" style="left:65px;top:455px;letter-spacing:0.19px">0.00deg</div>
<div class="ibox" style="top:494px"></div>
<div class="fld" style="top:494px"></div><div class="spin" style="top:494px"></div>
<div id="f2" class="t" style="left:65px;top:499px">1</div>
<div class="abs" style="left:61px;top:540px;width:19px;height:19px;box-sizing:border-box;border:1px solid #8e8f8f;background:linear-gradient(135deg,#dcdcdc,#f8f8f8)"></div>
<div id="cb" class="t" style="left:85px;top:541px;letter-spacing:0.3px">Apply to all</div>
<div id="lec" class="t" style="left:61px;top:572px;letter-spacing:0.1px">End constraint:</div>
<div class="dd" style="top:599px"></div>
<div id="dd2" class="t" style="left:67px;top:605px;letter-spacing:0.44px">Normal To Profile</div>
<div class="ibox" style="top:636px"></div>
<div class="fld" style="top:636px"></div><div class="spin" style="top:636px"></div>
<div id="f3" class="t" style="left:65px;top:641px;letter-spacing:0.19px">0.00deg</div>
<!-- scrollbar -->
<div class="abs" style="left:549px;top:158px;width:23px;height:516px;background:#f0f0f0"></div>
<div class="abs" style="left:549px;top:186px;width:22px;height:176px;box-sizing:border-box;border:1px solid #9a9a9a;border-radius:2px;background:linear-gradient(90deg,#f2f2f2 0%,#e3e3e3 45%,#d4d4d4 55%,#c9c9c9 100%)"></div>
<svg width="600" height="674" viewBox="0 0 600 674" style="left:0;top:0">
<defs>
<linearGradient id="pmh" x1="0" y1="0" x2="0" y2="1"><stop offset="0" stop-color="#2f86b5"/><stop offset="1" stop-color="#0d4f78"/></linearGradient>
<linearGradient id="pmb" x1="0" y1="0" x2="1" y2="1"><stop offset="0" stop-color="#ffffff"/><stop offset="1" stop-color="#d6d6d6"/></linearGradient>
<linearGradient id="pmi" x1="0" y1="0" x2="0" y2="1"><stop offset="0" stop-color="#8fd0ee"/><stop offset="1" stop-color="#2b86b8"/></linearGradient>
<linearGradient id="bx" x1="0" y1="0" x2="1" y2="1"><stop offset="0" stop-color="#ffffff"/><stop offset="1" stop-color="#dcdcdc"/></linearGradient>
<linearGradient id="arr" x1="0" y1="0" x2="1" y2="0"><stop offset="0" stop-color="#2c6f95"/><stop offset="0.5" stop-color="#7db6d4"/><stop offset="1" stop-color="#2f7299"/></linearGradient>
<linearGradient id="loft" x1="0" y1="0" x2="1" y2="0"><stop offset="0" stop-color="#2a6a90"/><stop offset="0.55" stop-color="#79b3d2"/><stop offset="1" stop-color="#3a80a8"/></linearGradient>
<linearGradient id="rotg" gradientUnits="userSpaceOnUse" x1="14" y1="460" x2="40" y2="468"><stop offset="0" stop-color="#3f97c2"/><stop offset="1" stop-color="#1f5f86"/></linearGradient>
<linearGradient id="hlp" x1="0" y1="0" x2="0" y2="1"><stop offset="0" stop-color="#ffffff"/><stop offset="1" stop-color="#dedede"/></linearGradient>
<radialGradient id="shl" cx="0.3" cy="0.27" r="0.3"><stop offset="0" stop-color="#ffffff" stop-opacity="0.85"/><stop offset="1" stop-color="#ffffff" stop-opacity="0"/></radialGradient>
<radialGradient id="shd" cx="0.45" cy="0.4" r="0.62"><stop offset="0.7" stop-color="#000" stop-opacity="0"/><stop offset="1" stop-color="#000" stop-opacity="0.45"/></radialGradient>
<clipPath id="ballc"><circle cx="236.1" cy="51" r="12.9"/></clipPath>
</defs>
<!-- tab1: yellow part -->
<g stroke="#8a5c00" stroke-width="0.8" stroke-linejoin="round">
<path d="M16.3 46.7 L21.7 44.5 L21.7 40.4 L28.1 38.1 L35.7 40.9 L35.7 49.5 L40.7 51.7 L40.7 60.8 L33.5 65.7 L16.3 54.4Z" fill="#f8cb20"/>
<path d="M21.7 40.4 L28.1 38.1 L35.7 40.9 L27.6 43.6Z" fill="#fdee86"/>
<path d="M27.6 43.6 L35.7 40.9 L35.7 49.5 L27.6 51.7Z" fill="#fbe160"/>
<path d="M27.6 51.7 L35.7 49.5 L40.7 51.7 L33.5 56.2Z" fill="#fdeb7c"/>
<path d="M33.5 56.2 L40.7 51.7 L40.7 60.8 L33.5 65.7Z" fill="#fbe160"/>
<path d="M16.3 46.7 L21.7 44.5 L21.7 49.2Z" fill="#fdeb7c"/>
</g>
<!-- tab2: property manager -->
<rect x="66.6" y="39.2" width="27" height="25.6" rx="1.8" fill="url(#pmb)" stroke="#1e3a50" stroke-width="1"/>
<path d="M66.6 44.2 V41 a1.8 1.8 0 0 1 1.8 -1.8 H91.8 a1.8 1.8 0 0 1 1.8 1.8 V44.2Z" fill="url(#pmh)" stroke="#0e3f60" stroke-width="0.8"/>
<g fill="url(#pmi)" stroke="#0e4a70" stroke-width="0.9"><rect x="69.4" y="45.8" width="7.4" height="3.5" rx="1"/><rect x="69.4" y="51.7" width="7.4" height="3.5" rx="1"/><rect x="69.4" y="57.8" width="7.4" height="3.5" rx="1"/></g>
<g stroke="#333" stroke-width="1.1"><path d="M79.2 47.5H91M79.2 53.5H91M79.2 59.5H91"/></g>
<!-- tab3: configuration -->
<g stroke="#3a3a3a" stroke-width="0.9" fill="#fff">
<rect x="121.4" y="38.7" width="3" height="26.6"/>
<rect x="124.4" y="43.4" width="6" height="1.8"/><rect x="124.4" y="58.6" width="9" height="1.8"/>
<rect x="128.8" y="38.9" width="10" height="10" rx="1" fill="#e8e8e8"/><rect x="130.2" y="40.3" width="10" height="10" rx="1" fill="url(#bx)"/>
<rect x="132.2" y="53.9" width="10" height="10" rx="1" fill="#e8e8e8"/><rect x="133.6" y="55.3" width="10" height="10" rx="1" fill="url(#bx)"/>
</g>
<!-- tab4: crosshair -->
<circle cx="184" cy="51.9" r="9.4" fill="none" stroke="#1c1c1c" stroke-width="2.6"/>
<path d="M170.3 51.9H197.9M184 38.1V65.7" stroke="#1c1c1c" stroke-width="2.2"/>
<!-- tab5: appearance ball -->
<g clip-path="url(#ballc)">
<rect x="222" y="37" width="16" height="15.5" fill="#2c6fd3"/>
<rect x="238" y="37" width="14" height="15.5" fill="#c81d1d"/>
<rect x="222" y="52.5" width="16" height="14" fill="#2aa53a"/>
<rect x="238" y="52.5" width="14" height="14" fill="#eac21c"/>
<path d="M222 52.5 Q231 55.5 238 53.5 Q245 50.5 250 49 L250 53 Q244 55 238 56.5 Q230 57 222 54Z" fill="#2aa53a" opacity="0"/>
<path d="M237 37 Q236 46 238 53.5 Q237 60 238.5 66" stroke="#7a1a12" stroke-width="0.6" fill="none" opacity="0.5"/>
<ellipse cx="243" cy="46.2" rx="3.9" ry="6.4" transform="rotate(-22 243 46.2)" fill="#000"/>
<circle cx="236.1" cy="51" r="12.9" fill="url(#shd)"/>
<circle cx="236.1" cy="51" r="12.9" fill="url(#shl)"/>
</g>
<!-- title icon: loft surface -->
<path d="M20.2 82.6 Q26.2 80.6 32.2 82.6 Q31.6 90.5 37.6 98.6 L25.1 106.6 L13.2 98.6 Q20.6 90.5 20.2 82.6Z" fill="url(#loft)" stroke="#1d4f6e" stroke-width="1"/>
<path d="M20.2 82.6 Q26.2 84.8 32.2 82.6" fill="none" stroke="#1d4f6e" stroke-width="0.8"/>
<!-- ok / cancel -->
<path d="M9.4 132.6 L18.1 140 L32 124.2" fill="none" stroke="#2f9a1a" stroke-width="3.3"/>
<path d="M51.6 124.6 L67.8 140.2 M67.8 124.6 L51.6 140.2" fill="none" stroke="#d42c0c" stroke-width="3.3"/>
<!-- help -->
<circle cx="549.9" cy="92.9" r="13.4" fill="url(#hlp)" stroke="#3e4246" stroke-width="1.3"/>
<text x="550.3" y="102.1" transform="translate(550.3 0) scale(0.88 1) translate(-550.3 0)" text-anchor="middle" font-family="Liberation Sans, sans-serif" font-weight="bold" font-size="25.4" fill="#1f6e9c">?</text>
<!-- chevrons -->
<path d="M521.4 181 L530 172.9 L538.6 181" fill="none" stroke="#777" stroke-width="3" stroke-linecap="butt" stroke-linejoin="miter"/>
<path d="M521.4 369.6 L530 361.5 L538.6 369.6" fill="none" stroke="#777" stroke-width="3" stroke-linecap="butt" stroke-linejoin="miter"/>
<!-- profiles icon -->
<ellipse cx="27" cy="203.3" rx="8.3" ry="3.9" fill="none" stroke="#1f6184" stroke-width="1.9"/>
<path d="M14.6 219.8 L27.1 213.7 L39.6 219.8 L27.1 225.9Z" fill="none" stroke="#1f6184" stroke-width="1.7"/>
<!-- up/down arrows -->
<path d="M27.3 249.6 L35.2 260.4 H30.6 V270.2 H24.2 V260.4 H19.4Z" fill="url(#arr)" stroke="#1b4b6a" stroke-width="1"/>
<path d="M27.3 317.8 L35.2 307.2 H30.6 V296.8 H24.2 V307.2 H19.4Z" fill="url(#arr)" stroke="#1b4b6a" stroke-width="1"/>
<!-- rotate icons -->
<g id="rot1">
<path d="M16.3 470.4 A9.7 9.7 0 0 0 35.2 473.2" fill="none" stroke="#d5d5d5" stroke-width="4.5"/>
<path d="M38.9 470.6 L39.3 480 L32.8 476.6Z" fill="#d5d5d5"/>
<path d="M16.3 466.2 A9.7 9.7 0 0 1 35.4 463.6" fill="none" stroke="url(#rotg)" stroke-width="4.5"/>
<path d="M30.3 462.2 H41.2 L35.9 469Z" fill="#1f5f86"/>
</g>
<use href="#rot1" y="186"/>
<!-- direction arrows -->
<path d="M39.4 509 L27.5 521" stroke="#d6d6d6" stroke-width="4.2"/>
<path d="M22.3 515.2 V525.7 H33.2Z" fill="#d6d6d6"/>
<path d="M14.8 515.4 L28.2 502" stroke="#262626" stroke-width="4.3"/>
<path d="M21 498.2 H32.2 V509.2Z" fill="#262626"/>
<!-- dropdown arrows -->
<path d="M511.8 425 H523.2 L517.5 431Z" fill="#111"/>
<path d="M511.8 611 H523.2 L517.5 617Z" fill="#111"/>
<!-- spin arrows -->
<g fill="#3a3a3a">
<path d="M514 460.4 L517.5 456.4 L521 460.4Z"/><path d="M514 471.4 L517.5 475.4 L521 471.4Z"/>
<path d="M514 504.4 L517.5 500.4 L521 504.4Z"/><path d="M514 515.4 L517.5 519.4 L521 515.4Z"/>
<path d="M514 646.4 L517.5 642.4 L521 646.4Z"/><path d="M514 657.4 L517.5 661.4 L521 657.4Z"/>
</g>
<!-- checkbox mark -->
<path d="M64.8 549.2 L66.4 548.2 L69.4 552.8 L75.4 543.4 L77 544.2 L69.6 557Z" fill="#2b3f8e" stroke="#2b3f8e" stroke-width="0.6"/>
<!-- scrollbar arrows & grip -->
<path d="M556 176.4 L561.1 170.6 L566.2 176.4Z" fill="#4a4a4a"/>
<path d="M555.4 662.6 L561.1 668.8 L566.8 662.6Z" fill="#4a4a4a"/>
<g stroke="#8a8a8a" stroke-width="1.6"><path d="M554 268.8H566M554 273.6H566M554 278.4H566"/></g>
<g stroke="#fafafa" stroke-width="0.8"><path d="M554 270.2H566M554 275H566M554 279.8H566"/></g>
</svg>

</body></html>
